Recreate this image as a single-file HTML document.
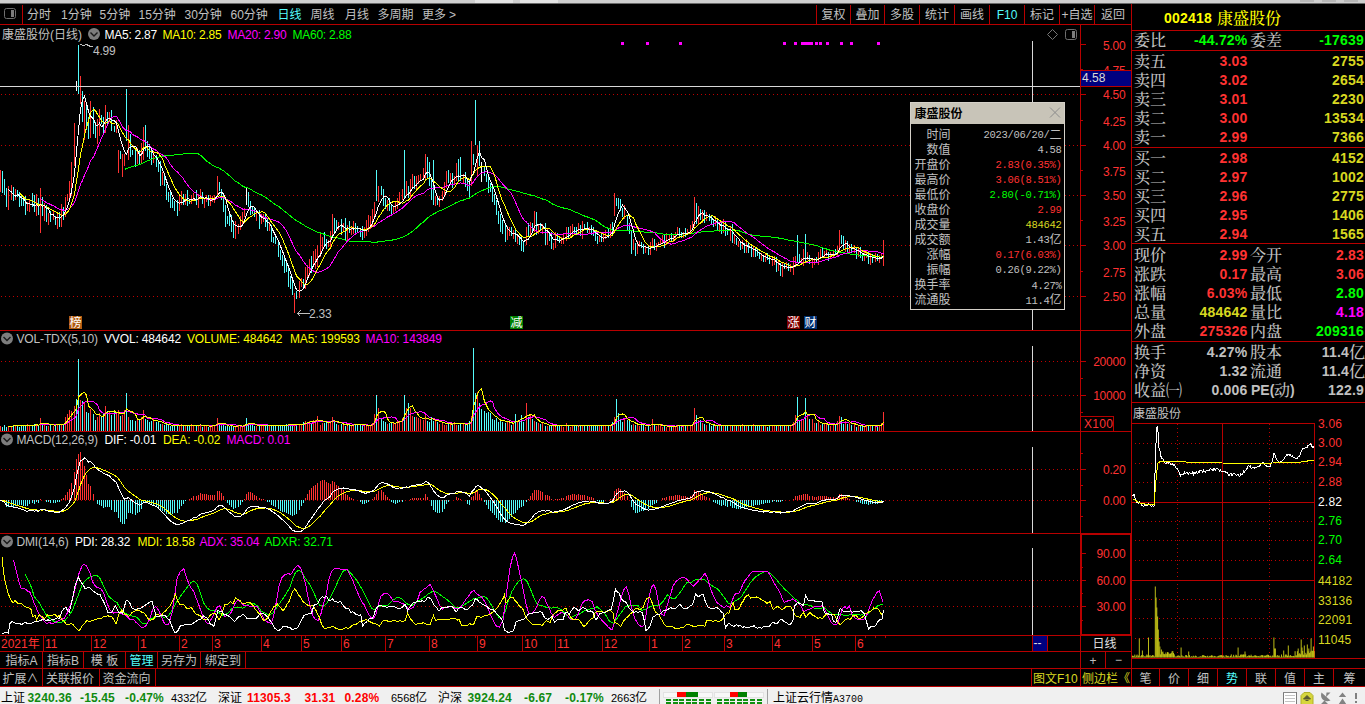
<!DOCTYPE html>
<html lang="zh-CN"><head><meta charset="utf-8"><title>康盛股份 002418 日线</title>
<style>
html,body{margin:0;padding:0;background:#000;}
body{width:1365px;height:704px;overflow:hidden;position:relative;font-family:"Liberation Sans","Noto Sans CJK SC",sans-serif;}
svg{display:block;position:absolute;left:0;top:0}
text{font-family:"Liberation Sans","Noto Sans CJK SC",sans-serif;white-space:pre}
</style></head><body>
<svg width="1365" height="704" viewBox="0 0 1365 704" shape-rendering="crispEdges">
<rect x="0" y="0" width="1365" height="704" fill="#000"/>
<rect x="0" y="0" width="1365" height="3" fill="#cfcfcf"/>
<rect x="0" y="3" width="1365" height="1" fill="#6a6a6a"/>
<rect x="475" y="0" width="38" height="3" fill="#e4e4e4"/>
<rect x="520" y="0" width="38" height="3" fill="#e4e4e4"/>
<rect x="1300" y="0" width="14" height="2" fill="#b8b8b8"/>
<rect x="1322" y="0" width="14" height="2" fill="#b8b8b8"/>
<rect x="1344" y="0" width="14" height="2" fill="#b8b8b8"/>
<line x1="0" y1="24.5" x2="1131" y2="24.5" stroke="#b80000" stroke-width="1"/>
<line x1="22.5" y1="5" x2="22.5" y2="24" stroke="#b80000" stroke-width="1"/>
<line x1="816.5" y1="5" x2="816.5" y2="24" stroke="#b80000" stroke-width="1"/>
<line x1="850.5" y1="5" x2="850.5" y2="24" stroke="#b80000" stroke-width="1"/>
<line x1="884.5" y1="5" x2="884.5" y2="24" stroke="#b80000" stroke-width="1"/>
<line x1="919.5" y1="5" x2="919.5" y2="24" stroke="#b80000" stroke-width="1"/>
<line x1="954.5" y1="5" x2="954.5" y2="24" stroke="#b80000" stroke-width="1"/>
<line x1="989.5" y1="5" x2="989.5" y2="24" stroke="#b80000" stroke-width="1"/>
<line x1="1024.5" y1="5" x2="1024.5" y2="24" stroke="#b80000" stroke-width="1"/>
<line x1="1059.5" y1="5" x2="1059.5" y2="24" stroke="#b80000" stroke-width="1"/>
<line x1="1094.5" y1="5" x2="1094.5" y2="24" stroke="#b80000" stroke-width="1"/>
<line x1="1131.5" y1="4" x2="1131.5" y2="687" stroke="#b80000" stroke-width="1"/>
<line x1="1080.5" y1="24" x2="1080.5" y2="668" stroke="#b80000" stroke-width="1"/>
<line x1="0" y1="330.5" x2="1131" y2="330.5" stroke="#b80000" stroke-width="1"/>
<line x1="0" y1="431.5" x2="1131" y2="431.5" stroke="#b80000" stroke-width="1"/>
<line x1="0" y1="533.5" x2="1131" y2="533.5" stroke="#b80000" stroke-width="1"/>
<line x1="0" y1="635.5" x2="1131" y2="635.5" stroke="#b80000" stroke-width="1"/>
<line x1="0" y1="651.5" x2="1131" y2="651.5" stroke="#b80000" stroke-width="1"/>
<line x1="0" y1="668.5" x2="1365" y2="668.5" stroke="#b80000" stroke-width="1"/>
<line x1="0" y1="686.5" x2="1365" y2="686.5" stroke="#b80000" stroke-width="1"/>
<line x1="1131" y1="30.5" x2="1365" y2="30.5" stroke="#b80000" stroke-width="1"/>
<line x1="1131" y1="50.5" x2="1365" y2="50.5" stroke="#b80000" stroke-width="1"/>
<line x1="1131" y1="147.5" x2="1365" y2="147.5" stroke="#b80000" stroke-width="1"/>
<line x1="1131" y1="243.5" x2="1365" y2="243.5" stroke="#b80000" stroke-width="1"/>
<line x1="1131" y1="341.5" x2="1365" y2="341.5" stroke="#b80000" stroke-width="1"/>
<line x1="1131" y1="402.5" x2="1365" y2="402.5" stroke="#b80000" stroke-width="1"/>
<line x1="1" y1="94.5" x2="1079" y2="94.5" stroke="#c00000" stroke-width="1" stroke-dasharray="1 3"/>
<line x1="1" y1="145.5" x2="1079" y2="145.5" stroke="#c00000" stroke-width="1" stroke-dasharray="1 3"/>
<line x1="1" y1="195.5" x2="1079" y2="195.5" stroke="#c00000" stroke-width="1" stroke-dasharray="1 3"/>
<line x1="1" y1="245.5" x2="1079" y2="245.5" stroke="#c00000" stroke-width="1" stroke-dasharray="1 3"/>
<line x1="1" y1="296.5" x2="1079" y2="296.5" stroke="#c00000" stroke-width="1" stroke-dasharray="1 3"/>
<line x1="1" y1="361.5" x2="1079" y2="361.5" stroke="#c00000" stroke-width="1" stroke-dasharray="1 3"/>
<line x1="1" y1="395.5" x2="1079" y2="395.5" stroke="#c00000" stroke-width="1" stroke-dasharray="1 3"/>
<line x1="1" y1="469.5" x2="1079" y2="469.5" stroke="#c00000" stroke-width="1" stroke-dasharray="1 3"/>
<line x1="1" y1="500.5" x2="1079" y2="500.5" stroke="#c00000" stroke-width="1" stroke-dasharray="1 3"/>
<line x1="1" y1="580.5" x2="1079" y2="580.5" stroke="#c00000" stroke-width="1" stroke-dasharray="1 3"/>
<line x1="1" y1="606.5" x2="1079" y2="606.5" stroke="#c00000" stroke-width="1" stroke-dasharray="1 3"/>
<path d="M0.5 170V192M8.5 186V210M11.5 185V200M15.5 189V200M27.5 202V211M29.5 199V212M36.5 194V216M40.5 188V233M44.5 203V221M48.5 213V225M53.5 211V220M57.5 213V229M61.5 204V227M65.5 197V217M67.5 194V201M69.5 181V199M71.5 162V196M74.5 123V166M80.5 76V104M84.5 101V140M90.5 101V138M97.5 119V144M99.5 109V136M105.5 105V133M109.5 112V122M116.5 120V133M118.5 150V173M122.5 154V177M124.5 154V166M128.5 125V160M137.5 148V164M141.5 143V164M143.5 127V160M153.5 152V163M162.5 172V185M179.5 194V211M181.5 191V205M185.5 194V205M191.5 195V204M193.5 193V200M198.5 194V208M200.5 189V197M204.5 199V208M206.5 195V202M210.5 195V206M212.5 196V202M214.5 195V203M217.5 176V196M235.5 221V239M238.5 224V234M240.5 216V230M242.5 212V225M244.5 208V217M256.5 211V221M261.5 214V224M263.5 214V222M269.5 222V231M294.5 293V313M299.5 281V298M301.5 278V287M305.5 267V289M307.5 265V277M309.5 259V276M313.5 251V267M315.5 249V269M317.5 245V267M320.5 234V257M322.5 237V250M328.5 240V247M330.5 231V249M332.5 214V236M338.5 222V230M343.5 223V232M347.5 225V241M351.5 226V235M353.5 221V234M364.5 227V238M366.5 220V236M368.5 215V232M370.5 216V229M372.5 209V227M374.5 202V218M378.5 186V202M387.5 200V211M393.5 207V213M395.5 202V211M397.5 198V209M399.5 192V204M402.5 189V200M406.5 181V195M410.5 179V199M412.5 174V187M416.5 176V190M418.5 175V184M420.5 174V181M423.5 168V179M425.5 154V181M435.5 196V206M439.5 196V207M442.5 191V201M444.5 182V196M446.5 171V188M450.5 173V183M454.5 176V185M456.5 163V181M463.5 174V183M471.5 141V186M477.5 145V176M507.5 226V240M509.5 227V236M513.5 230V239M517.5 234V244M526.5 227V245M530.5 222V237M534.5 211V232M538.5 224V234M542.5 224V234M547.5 229V245M553.5 243V250M555.5 232V248M561.5 237V244M563.5 233V244M566.5 227V241M570.5 226V237M572.5 224V236M578.5 223V235M582.5 221V239M589.5 227V234M599.5 236V242M603.5 233V242M605.5 230V239M610.5 224V238M614.5 193V216M624.5 205V219M633.5 239V250M637.5 241V254M639.5 241V247M645.5 246V253M650.5 242V255M652.5 238V247M656.5 243V251M658.5 242V247M660.5 238V245M662.5 235V243M666.5 233V245M669.5 234V242M673.5 234V242M675.5 232V240M677.5 227V235M683.5 232V238M687.5 229V234M690.5 225V234M692.5 221V229M694.5 197V226M698.5 206V225M702.5 210V223M706.5 212V221M715.5 216V226M719.5 224V232M723.5 219V233M730.5 226V241M734.5 235V244M738.5 241V247M742.5 240V249M746.5 239V253M753.5 246V257M761.5 253V261M765.5 254V262M772.5 257V266M774.5 256V265M778.5 260V271M782.5 262V277M786.5 262V269M790.5 264V272M793.5 257V275M795.5 256V266M801.5 258V264M803.5 249V266M807.5 252V260M812.5 259V268M814.5 258V265M818.5 252V265M820.5 249V258M824.5 251V257M826.5 249V256M830.5 252V259M833.5 250V257M837.5 246V256M839.5 230V251M845.5 240V252M849.5 244V253M854.5 245V253M858.5 248V257M864.5 252V261M866.5 250V258M870.5 253V265M875.5 253V262M879.5 255V263M881.5 254V259M883.5 240V266" stroke="#ff3232" fill="none"/>
<path d="M2.5 171V193M4.5 179V195M6.5 188V207M13.5 187V201M17.5 190V197M19.5 192V207M21.5 195V206M23.5 197V206M25.5 196V215M32.5 193V207M34.5 195V212M38.5 198V215M42.5 197V216M46.5 205V222M50.5 211V222M55.5 216V225M59.5 212V227M63.5 207V220M78.5 45V94M82.5 91V122M86.5 102V130M88.5 117V139M93.5 107V134M95.5 122V138M101.5 115V124M103.5 117V134M107.5 112V124M111.5 110V131M114.5 126V132M120.5 151V159M126.5 89V141M130.5 134V157M132.5 150V155M135.5 150V167M139.5 150V164M145.5 125V151M147.5 141V157M149.5 144V159M151.5 150V165M156.5 155V167M158.5 162V172M160.5 161V186M164.5 174V186M166.5 184V200M168.5 192V202M170.5 191V208M172.5 198V208M174.5 201V211M177.5 200V216M183.5 194V205M187.5 190V206M189.5 199V204M196.5 190V205M202.5 192V204M208.5 195V206M219.5 182V191M221.5 189V200M223.5 194V212M225.5 205V227M227.5 216V224M229.5 211V226M231.5 215V232M233.5 221V238M248.5 192V207M250.5 201V215M252.5 207V214M254.5 208V217M259.5 210V229M265.5 213V227M267.5 219V231M271.5 225V242M273.5 237V243M275.5 236V244M278.5 240V257M280.5 250V260M282.5 255V266M284.5 255V273M286.5 262V272M288.5 267V287M290.5 276V289M292.5 280V295M296.5 291V299M303.5 279V287M311.5 256V273M324.5 232V245M326.5 239V249M334.5 218V232M336.5 220V231M341.5 219V235M345.5 218V241M349.5 221V233M355.5 223V233M357.5 226V232M360.5 229V237M362.5 226V240M376.5 170V201M381.5 186V195M383.5 189V206M385.5 198V209M389.5 198V211M391.5 205V214M404.5 150V198M408.5 186V198M414.5 176V189M427.5 157V178M429.5 162V186M431.5 177V200M433.5 160V205M437.5 198V205M448.5 170V183M452.5 173V188M458.5 159V181M460.5 157V181M465.5 172V187M467.5 180V191M469.5 180V197M473.5 154V165M475.5 100V145M479.5 141V166M484.5 167V176M486.5 174V182M488.5 176V193M490.5 183V192M492.5 186V202M494.5 194V205M496.5 200V215M498.5 211V224M500.5 214V232M502.5 220V234M505.5 225V242M511.5 227V236M515.5 229V242M519.5 236V245M521.5 235V251M523.5 241V252M528.5 223V236M532.5 223V232M536.5 212V235M540.5 223V230M545.5 223V245M549.5 232V241M551.5 232V249M557.5 233V241M559.5 236V243M568.5 227V238M574.5 227V234M576.5 227V235M580.5 225V236M584.5 224V230M587.5 222V233M591.5 225V235M593.5 227V236M595.5 231V241M597.5 236V244M601.5 234V242M608.5 229V238M612.5 222V236M616.5 198V206M618.5 198V209M620.5 199V211M622.5 208V217M627.5 215V230M629.5 223V234M631.5 231V254M635.5 243V256M641.5 242V248M643.5 244V254M648.5 245V255M654.5 239V250M664.5 235V248M671.5 233V241M679.5 228V238M681.5 232V238M685.5 228V237M696.5 203V224M700.5 209V220M704.5 210V223M709.5 214V221M711.5 215V224M713.5 220V227M717.5 218V230M721.5 221V234M725.5 222V236M727.5 228V235M732.5 224V243M736.5 238V245M740.5 241V250M744.5 243V253M748.5 242V253M751.5 244V257M755.5 248V257M757.5 249V256M759.5 252V259M763.5 255V262M767.5 253V260M769.5 257V264M776.5 257V272M780.5 263V276M784.5 263V269M788.5 263V271M797.5 235V263M799.5 254V263M805.5 234V261M809.5 255V264M816.5 257V262M822.5 248V258M828.5 252V261M835.5 249V255M841.5 235V244M843.5 236V249M847.5 241V252M851.5 244V253M856.5 248V259M860.5 247V258M862.5 253V261M868.5 252V264M872.5 254V263M877.5 254V261" stroke="#54fcfc" fill="none"/>
<path d="M76.5 81V91M246.5 188V205M481.5 162V182" stroke="#fff" fill="none"/>
<polyline fill="none" stroke="#00ff00" stroke-width="1" points="124.5,169.3 126.5,168.7 128.5,167.7 130.5,167.1 132.5,166.3 135.5,165.8 137.5,165.1 139.5,164.4 141.5,163.7 143.5,162.6 145.5,161.7 147.5,160.9 149.5,160.1 151.5,159.2 153.5,158.4 156.5,157.8 158.5,157.2 160.5,156.7 162.5,156.3 164.5,155.8 166.5,155.9 168.5,155.6 170.5,155.5 172.5,155.2 174.5,155.0 177.5,154.9 179.5,154.6 181.5,154.2 183.5,153.9 185.5,153.5 187.5,153.4 189.5,153.3 191.5,153.2 193.5,153.2 196.5,153.5 198.5,154.0 200.5,155.2 202.5,157.1 204.5,158.9 206.5,160.9 208.5,162.3 210.5,163.9 212.5,165.1 214.5,166.2 217.5,167.5 219.5,168.4 221.5,169.5 223.5,170.8 225.5,172.5 227.5,174.1 229.5,175.7 231.5,177.6 233.5,179.5 235.5,181.4 238.5,183.0 240.5,184.5 242.5,186.1 244.5,187.0 246.5,187.6 248.5,188.3 250.5,189.2 252.5,190.4 254.5,191.9 256.5,192.9 259.5,194.1 261.5,195.0 263.5,196.1 265.5,197.2 267.5,198.6 269.5,200.2 271.5,201.7 273.5,203.2 275.5,204.6 278.5,206.2 280.5,207.9 282.5,209.5 284.5,211.2 286.5,212.7 288.5,214.4 290.5,216.0 292.5,217.7 294.5,219.3 296.5,220.9 299.5,222.3 301.5,223.6 303.5,224.9 305.5,226.1 307.5,227.3 309.5,228.3 311.5,229.5 313.5,230.4 315.5,231.4 317.5,232.2 320.5,233.0 322.5,233.6 324.5,234.4 326.5,235.3 328.5,235.9 330.5,236.6 332.5,236.9 334.5,237.3 336.5,237.7 338.5,238.1 341.5,238.7 343.5,239.5 345.5,240.2 347.5,240.7 349.5,241.1 351.5,241.3 353.5,241.4 355.5,241.5 357.5,241.6 360.5,241.5 362.5,241.6 364.5,241.7 366.5,241.8 368.5,241.9 370.5,242.0 372.5,242.3 374.5,242.4 376.5,242.2 378.5,241.8 381.5,241.4 383.5,241.2 385.5,240.9 387.5,240.6 389.5,240.4 391.5,240.2 393.5,239.8 395.5,239.4 397.5,238.8 399.5,238.1 402.5,237.3 404.5,236.3 406.5,235.2 408.5,234.1 410.5,232.7 412.5,231.2 414.5,229.6 416.5,227.9 418.5,226.0 420.5,224.0 423.5,222.0 425.5,219.8 427.5,218.1 429.5,216.4 431.5,215.1 433.5,214.0 435.5,213.0 437.5,211.9 439.5,210.9 442.5,209.9 444.5,208.9 446.5,207.7 448.5,206.7 450.5,205.6 452.5,204.6 454.5,203.6 456.5,202.4 458.5,201.7 460.5,200.9 463.5,200.0 465.5,199.3 467.5,198.6 469.5,198.0 471.5,196.5 473.5,195.5 475.5,194.0 477.5,192.6 479.5,191.6 481.5,190.7 484.5,189.7 486.5,188.9 488.5,188.1 490.5,187.4 492.5,186.9 494.5,186.6 496.5,186.4 498.5,186.5 500.5,186.8 502.5,187.3 505.5,188.1 507.5,188.8 509.5,189.3 511.5,189.8 513.5,190.3 515.5,190.9 517.5,191.3 519.5,191.8 521.5,192.5 523.5,193.3 526.5,193.8 528.5,194.4 530.5,195.0 532.5,195.6 534.5,195.9 536.5,196.7 538.5,197.4 540.5,198.2 542.5,199.0 545.5,199.9 547.5,200.9 549.5,201.9 551.5,203.4 553.5,204.5 555.5,205.4 557.5,206.1 559.5,206.7 561.5,207.4 563.5,208.0 566.5,208.5 568.5,209.2 570.5,209.9 572.5,210.8 574.5,211.6 576.5,212.6 578.5,213.3 580.5,214.2 582.5,215.2 584.5,216.0 587.5,217.0 589.5,217.8 591.5,218.6 593.5,219.4 595.5,220.2 597.5,221.8 599.5,223.0 601.5,224.7 603.5,226.1 605.5,227.3 608.5,228.4 610.5,229.2 612.5,230.1 614.5,230.2 616.5,230.5 618.5,230.6 620.5,230.8 622.5,230.8 624.5,230.7 627.5,230.6 629.5,230.7 631.5,230.8 633.5,231.0 635.5,231.4 637.5,231.5 639.5,231.7 641.5,231.8 643.5,232.0 645.5,232.2 648.5,232.3 650.5,232.2 652.5,232.5 654.5,232.7 656.5,233.0 658.5,233.3 660.5,233.8 662.5,233.9 664.5,234.2 666.5,234.4 669.5,234.5 671.5,234.5 673.5,234.5 675.5,234.5 677.5,234.2 679.5,234.1 681.5,234.1 683.5,234.0 685.5,233.8 687.5,233.7 690.5,233.5 692.5,233.4 694.5,232.8 696.5,232.6 698.5,232.3 700.5,232.1 702.5,231.8 704.5,231.7 706.5,231.4 709.5,231.3 711.5,231.2 713.5,231.1 715.5,230.9 717.5,230.9 719.5,230.7 721.5,230.6 723.5,230.4 725.5,230.3 727.5,230.2 730.5,230.0 732.5,230.1 734.5,230.2 736.5,230.5 738.5,230.6 740.5,231.5 742.5,232.2 744.5,232.9 746.5,233.5 748.5,234.1 751.5,234.8 753.5,235.3 755.5,235.6 757.5,235.7 759.5,236.0 761.5,236.1 763.5,236.3 765.5,236.5 767.5,236.7 769.5,236.9 772.5,237.2 774.5,237.3 776.5,237.7 778.5,238.0 780.5,238.4 782.5,238.8 784.5,239.1 786.5,239.5 788.5,240.1 790.5,240.5 793.5,240.9 795.5,241.3 797.5,241.7 799.5,242.1 801.5,242.5 803.5,242.9 805.5,243.3 807.5,243.7 809.5,244.2 812.5,244.6 814.5,245.1 816.5,245.7 818.5,246.2 820.5,247.1 822.5,247.7 824.5,248.4 826.5,249.0 828.5,249.7 830.5,250.3 833.5,250.9 835.5,251.5 837.5,252.0 839.5,252.1 841.5,252.5 843.5,252.8 845.5,253.2 847.5,253.5 849.5,253.9 851.5,254.2 854.5,254.4 856.5,254.9 858.5,255.1 860.5,255.4 862.5,255.6 864.5,255.8 866.5,255.9 868.5,256.2 870.5,256.3 872.5,256.6 875.5,256.7 877.5,256.8 879.5,257.0 881.5,257.0 883.5,256.9"/>
<polyline fill="none" stroke="#ff00ff" stroke-width="1" points="40.5,198.4 42.5,200.2 44.5,201.2 46.5,202.8 48.5,203.3 50.5,204.6 53.5,205.9 55.5,207.0 57.5,208.1 59.5,209.3 61.5,209.8 63.5,210.2 65.5,210.0 67.5,209.4 69.5,208.4 71.5,206.6 74.5,202.7 76.5,196.4 78.5,190.9 80.5,184.2 82.5,180.5 84.5,175.1 86.5,170.9 88.5,166.5 90.5,161.0 93.5,156.7 95.5,152.5 97.5,147.8 99.5,143.0 101.5,138.0 103.5,133.9 105.5,129.1 107.5,124.9 109.5,120.8 111.5,117.9 114.5,116.3 116.5,116.3 118.5,119.8 120.5,123.1 122.5,127.1 124.5,129.1 126.5,130.8 128.5,131.0 130.5,132.0 132.5,134.5 135.5,136.0 137.5,136.9 139.5,138.5 141.5,139.9 143.5,140.4 145.5,141.5 147.5,143.3 149.5,145.3 151.5,147.5 153.5,149.0 156.5,150.6 158.5,152.7 160.5,153.9 162.5,155.0 164.5,156.2 166.5,158.0 168.5,160.9 170.5,164.5 172.5,167.1 174.5,169.6 177.5,172.0 179.5,174.3 181.5,176.3 183.5,178.9 185.5,182.2 187.5,184.9 189.5,187.5 191.5,189.5 193.5,191.4 196.5,193.6 198.5,195.2 200.5,196.5 202.5,197.6 204.5,198.6 206.5,199.3 208.5,199.7 210.5,199.9 212.5,199.8 214.5,199.6 217.5,198.3 219.5,197.2 221.5,197.2 223.5,197.7 225.5,198.5 227.5,199.7 229.5,200.8 231.5,201.9 233.5,203.7 235.5,205.2 238.5,206.4 240.5,207.9 242.5,209.0 244.5,209.5 246.5,209.3 248.5,209.5 250.5,209.8 252.5,210.4 254.5,211.3 256.5,212.1 259.5,214.3 261.5,215.9 263.5,216.9 265.5,217.7 267.5,218.3 269.5,218.7 271.5,219.5 273.5,220.2 275.5,220.7 278.5,222.0 280.5,223.6 282.5,225.5 284.5,228.0 286.5,231.0 288.5,235.1 290.5,239.4 292.5,243.6 294.5,247.7 296.5,251.7 299.5,255.2 301.5,258.2 303.5,261.5 305.5,264.2 307.5,266.5 309.5,268.1 311.5,270.0 313.5,271.0 315.5,271.9 317.5,272.2 320.5,271.7 322.5,270.8 324.5,269.8 326.5,268.7 328.5,267.3 330.5,265.2 332.5,261.7 334.5,258.3 336.5,255.1 338.5,251.5 341.5,248.7 343.5,245.8 345.5,243.3 347.5,241.0 349.5,239.1 351.5,237.4 353.5,235.5 355.5,233.9 357.5,232.5 360.5,231.7 362.5,231.2 364.5,230.7 366.5,230.0 368.5,228.8 370.5,227.7 372.5,226.6 374.5,226.1 376.5,224.7 378.5,222.7 381.5,221.1 383.5,219.6 385.5,218.6 387.5,217.0 389.5,216.0 391.5,215.0 393.5,213.9 395.5,212.8 397.5,211.4 399.5,209.9 402.5,208.1 404.5,206.1 406.5,204.0 408.5,202.4 410.5,200.5 412.5,198.6 414.5,197.0 416.5,195.8 418.5,194.9 420.5,194.2 423.5,193.4 425.5,191.2 427.5,189.8 429.5,188.8 431.5,188.5 433.5,188.1 435.5,187.6 437.5,187.5 439.5,187.4 442.5,187.3 444.5,186.8 446.5,185.8 448.5,185.4 450.5,184.5 452.5,184.5 454.5,184.4 456.5,183.4 458.5,183.2 460.5,183.0 463.5,183.1 465.5,183.5 467.5,185.1 469.5,185.7 471.5,183.8 473.5,181.9 475.5,178.9 477.5,176.3 479.5,174.4 481.5,173.1 484.5,172.1 486.5,171.8 488.5,172.4 490.5,172.9 492.5,173.8 494.5,174.7 496.5,176.3 498.5,178.9 500.5,181.4 502.5,183.9 505.5,187.0 507.5,189.4 509.5,191.5 511.5,193.8 513.5,198.3 515.5,202.2 517.5,206.9 519.5,211.6 521.5,215.7 523.5,219.4 526.5,222.1 528.5,224.8 530.5,226.7 532.5,228.5 534.5,229.5 536.5,231.0 538.5,231.6 540.5,232.2 542.5,232.4 545.5,232.9 547.5,232.6 549.5,232.8 551.5,233.6 553.5,234.1 555.5,234.2 557.5,234.1 559.5,234.3 561.5,234.3 563.5,233.9 566.5,233.2 568.5,233.3 570.5,233.2 572.5,233.3 574.5,233.5 576.5,234.4 578.5,234.3 580.5,234.7 582.5,234.5 584.5,234.4 587.5,234.1 589.5,233.9 591.5,233.7 593.5,233.0 595.5,232.7 597.5,232.8 599.5,232.8 601.5,232.7 603.5,232.6 605.5,232.4 608.5,232.6 610.5,232.3 612.5,232.3 614.5,230.7 616.5,229.4 618.5,228.0 620.5,227.2 622.5,226.1 624.5,225.4 627.5,225.1 629.5,225.0 631.5,226.0 633.5,226.6 635.5,227.5 637.5,227.9 639.5,228.1 641.5,228.5 643.5,229.1 645.5,229.6 648.5,230.5 650.5,231.0 652.5,231.8 654.5,232.6 656.5,235.0 658.5,237.0 660.5,238.8 662.5,240.3 664.5,241.9 666.5,243.2 669.5,243.8 671.5,244.2 673.5,243.7 675.5,243.2 677.5,242.2 679.5,241.7 681.5,241.3 683.5,240.6 685.5,239.7 687.5,238.9 690.5,237.6 692.5,236.6 694.5,234.5 696.5,233.0 698.5,231.3 700.5,230.0 702.5,228.6 704.5,227.6 706.5,226.2 709.5,225.3 711.5,224.6 713.5,223.9 715.5,223.1 717.5,222.8 719.5,222.5 721.5,222.3 723.5,221.7 725.5,221.8 727.5,221.8 730.5,221.6 732.5,222.3 734.5,223.0 736.5,225.2 738.5,226.4 740.5,228.1 742.5,229.5 744.5,231.2 746.5,232.6 748.5,234.2 751.5,235.9 753.5,237.3 755.5,238.7 757.5,240.4 759.5,241.9 761.5,243.5 763.5,244.9 765.5,246.5 767.5,247.9 769.5,249.3 772.5,251.0 774.5,252.0 776.5,253.4 778.5,254.5 780.5,255.9 782.5,256.8 784.5,258.0 786.5,258.8 788.5,260.1 790.5,261.1 793.5,261.6 795.5,262.0 797.5,262.4 799.5,262.8 801.5,262.8 803.5,262.7 805.5,262.7 807.5,262.7 809.5,262.9 812.5,262.8 814.5,262.8 816.5,262.8 818.5,262.1 820.5,261.6 822.5,260.8 824.5,260.3 826.5,259.6 828.5,259.1 830.5,258.3 833.5,257.5 835.5,257.1 837.5,256.6 839.5,255.3 841.5,254.3 843.5,253.8 845.5,253.3 847.5,252.9 849.5,252.5 851.5,251.8 854.5,251.2 856.5,251.0 858.5,250.5 860.5,250.5 862.5,250.8 864.5,250.7 866.5,250.7 868.5,251.2 870.5,251.1 872.5,251.3 875.5,251.6 877.5,251.9 879.5,252.3 881.5,253.4 883.5,253.7"/>
<polyline fill="none" stroke="#ffff00" stroke-width="1" points="19.5,192.6 21.5,195.0 23.5,196.9 25.5,199.0 27.5,199.1 29.5,199.9 32.5,201.1 34.5,202.3 36.5,203.2 38.5,205.0 40.5,204.2 42.5,205.3 44.5,205.6 46.5,206.7 48.5,207.5 50.5,209.3 53.5,210.7 55.5,211.7 57.5,213.1 59.5,213.6 61.5,215.3 63.5,215.1 65.5,214.4 67.5,212.1 69.5,209.4 71.5,203.9 74.5,194.6 76.5,181.1 78.5,168.7 80.5,154.7 82.5,145.7 84.5,135.0 86.5,127.4 88.5,120.9 90.5,112.7 93.5,109.4 95.5,110.5 97.5,114.6 99.5,117.3 101.5,121.3 103.5,122.1 105.5,123.1 107.5,122.3 109.5,120.7 111.5,123.1 114.5,123.2 116.5,122.1 118.5,125.0 120.5,128.9 122.5,132.8 124.5,136.1 126.5,138.5 128.5,139.7 130.5,143.3 132.5,146.0 135.5,148.9 137.5,151.7 139.5,151.9 141.5,150.9 143.5,147.9 145.5,146.8 147.5,148.1 149.5,150.9 151.5,151.7 153.5,152.0 156.5,152.2 158.5,153.7 160.5,155.9 162.5,159.0 164.5,164.5 166.5,169.2 168.5,173.7 170.5,178.2 172.5,182.5 174.5,187.2 177.5,191.8 179.5,194.9 181.5,196.6 183.5,198.9 185.5,199.9 187.5,200.6 189.5,201.2 191.5,200.9 193.5,200.2 196.5,200.0 198.5,198.6 200.5,198.0 202.5,198.6 204.5,198.4 206.5,198.7 208.5,198.8 210.5,198.6 212.5,198.7 214.5,198.9 217.5,196.5 219.5,195.9 221.5,196.3 223.5,196.8 225.5,198.7 227.5,200.8 229.5,202.9 231.5,205.3 233.5,208.7 235.5,211.6 238.5,216.3 240.5,219.9 242.5,221.7 244.5,222.1 246.5,219.9 248.5,218.1 250.5,216.8 252.5,215.5 254.5,213.8 256.5,212.6 259.5,212.3 261.5,211.9 263.5,212.1 265.5,213.3 267.5,216.6 269.5,219.2 271.5,222.1 273.5,224.8 275.5,227.6 278.5,231.5 280.5,234.9 282.5,239.1 284.5,243.9 286.5,248.7 288.5,253.7 290.5,259.6 292.5,265.1 294.5,270.5 296.5,275.8 299.5,279.0 301.5,281.6 303.5,283.8 305.5,284.5 307.5,284.3 309.5,282.5 311.5,280.3 313.5,277.0 315.5,273.3 317.5,268.6 320.5,264.4 322.5,260.1 324.5,255.7 326.5,253.0 328.5,250.2 330.5,248.0 332.5,243.1 334.5,239.7 336.5,236.8 338.5,234.4 341.5,233.0 343.5,231.6 345.5,230.9 347.5,229.0 349.5,227.9 351.5,226.9 353.5,227.9 355.5,228.2 357.5,228.2 360.5,229.0 362.5,229.4 364.5,229.8 366.5,229.1 368.5,228.6 370.5,227.5 372.5,226.3 374.5,224.3 376.5,221.3 378.5,217.2 381.5,213.2 383.5,209.8 385.5,207.3 387.5,204.9 389.5,203.4 391.5,202.4 393.5,201.6 395.5,201.3 397.5,201.5 399.5,202.5 402.5,203.1 404.5,202.4 406.5,200.8 408.5,200.0 410.5,197.7 412.5,194.8 414.5,192.4 416.5,190.2 418.5,188.2 420.5,186.0 423.5,183.7 425.5,179.9 427.5,178.8 429.5,177.7 431.5,179.2 433.5,181.3 435.5,182.8 437.5,184.7 439.5,186.7 442.5,188.6 444.5,189.8 446.5,191.8 448.5,192.0 450.5,191.4 452.5,189.7 454.5,187.6 456.5,184.1 458.5,181.6 460.5,179.4 463.5,177.5 465.5,177.2 467.5,178.5 469.5,179.5 471.5,176.2 473.5,174.1 475.5,170.3 477.5,168.6 479.5,167.3 481.5,166.7 484.5,166.6 486.5,166.4 488.5,166.3 490.5,166.3 492.5,171.4 494.5,175.2 496.5,182.3 498.5,189.3 500.5,195.4 502.5,201.0 505.5,207.4 507.5,212.5 509.5,216.7 511.5,221.3 513.5,225.1 515.5,229.2 517.5,231.6 519.5,233.8 521.5,235.9 523.5,237.7 526.5,236.8 528.5,237.0 530.5,236.6 532.5,235.8 534.5,233.9 536.5,232.7 538.5,231.6 540.5,230.5 542.5,228.8 545.5,228.1 547.5,228.4 549.5,228.6 551.5,230.6 553.5,232.3 555.5,234.6 557.5,235.6 559.5,237.1 561.5,238.1 563.5,239.0 566.5,238.3 568.5,238.3 570.5,237.9 572.5,236.1 574.5,234.7 576.5,234.3 578.5,233.0 580.5,232.3 582.5,230.9 584.5,229.9 587.5,230.0 589.5,229.5 591.5,229.5 593.5,229.9 595.5,230.7 597.5,231.3 599.5,232.5 601.5,233.1 603.5,234.3 605.5,234.9 608.5,235.3 610.5,235.0 612.5,235.2 614.5,231.5 616.5,228.1 618.5,224.7 620.5,221.8 622.5,219.1 624.5,216.4 627.5,215.4 629.5,214.8 631.5,216.9 633.5,218.0 635.5,223.5 637.5,227.6 639.5,231.4 641.5,235.1 643.5,239.0 645.5,242.8 648.5,245.7 650.5,247.1 652.5,246.6 654.5,247.1 656.5,246.5 658.5,246.4 660.5,246.2 662.5,245.4 664.5,244.7 666.5,243.6 669.5,241.9 671.5,241.4 673.5,240.8 675.5,239.2 677.5,237.9 679.5,237.0 681.5,236.4 683.5,235.8 685.5,234.8 687.5,234.1 690.5,233.4 692.5,231.8 694.5,228.1 696.5,226.7 698.5,224.7 700.5,223.0 702.5,220.8 704.5,219.4 706.5,217.7 709.5,216.4 711.5,215.9 713.5,216.1 715.5,218.1 717.5,219.0 719.5,220.3 721.5,221.7 723.5,222.7 725.5,224.1 727.5,225.9 730.5,226.8 732.5,228.6 734.5,230.0 736.5,232.3 738.5,233.8 740.5,235.9 742.5,237.2 744.5,239.7 746.5,241.0 748.5,242.5 751.5,245.0 753.5,246.1 755.5,247.5 757.5,248.5 759.5,250.0 761.5,251.1 763.5,252.6 765.5,253.3 767.5,254.7 769.5,256.1 772.5,257.0 774.5,257.9 776.5,259.4 778.5,260.4 780.5,261.7 782.5,262.6 784.5,263.3 786.5,264.3 788.5,265.4 790.5,266.1 793.5,266.3 795.5,266.2 797.5,265.4 799.5,265.1 801.5,264.0 803.5,262.9 805.5,262.0 807.5,261.1 809.5,260.4 812.5,259.6 814.5,259.2 816.5,259.5 818.5,258.9 820.5,258.0 822.5,257.6 824.5,257.6 826.5,257.1 828.5,257.1 830.5,256.3 833.5,255.4 835.5,254.9 837.5,253.8 839.5,251.7 841.5,250.6 843.5,249.9 845.5,248.9 847.5,248.7 849.5,247.9 851.5,247.4 854.5,247.0 856.5,247.1 858.5,247.3 860.5,249.4 862.5,251.0 864.5,251.6 866.5,252.4 868.5,253.6 870.5,254.4 872.5,255.3 875.5,256.1 877.5,256.6 879.5,257.3 881.5,257.5 883.5,256.4"/>
<polyline fill="none" stroke="#fff" stroke-width="1" points="8.5,189.4 11.5,192.1 13.5,194.9 15.5,196.1 17.5,194.4 19.5,195.8 21.5,197.9 23.5,198.8 25.5,201.9 27.5,203.8 29.5,203.9 32.5,204.3 34.5,205.8 36.5,204.5 38.5,206.2 40.5,204.5 42.5,206.4 44.5,205.4 46.5,208.9 48.5,208.9 50.5,214.1 53.5,215.0 55.5,218.0 57.5,217.3 59.5,218.4 61.5,216.4 63.5,215.2 65.5,210.9 67.5,207.0 69.5,200.3 71.5,191.4 74.5,174.0 76.5,151.2 78.5,130.4 80.5,109.2 82.5,100.0 84.5,96.0 86.5,103.5 88.5,111.4 90.5,116.2 93.5,118.8 95.5,124.9 97.5,125.6 99.5,123.2 101.5,126.5 103.5,125.4 105.5,121.3 107.5,119.1 109.5,118.2 111.5,119.8 114.5,120.9 116.5,122.9 118.5,130.9 120.5,139.5 122.5,145.8 124.5,151.3 126.5,154.1 128.5,148.5 130.5,147.2 132.5,146.1 135.5,146.6 137.5,149.4 139.5,155.3 141.5,154.7 143.5,149.7 145.5,147.1 147.5,146.8 149.5,146.5 151.5,148.8 153.5,154.3 156.5,157.3 158.5,160.6 160.5,165.4 162.5,169.2 164.5,174.7 166.5,181.0 168.5,186.8 170.5,191.0 172.5,195.8 174.5,199.6 177.5,202.6 179.5,203.1 181.5,202.2 183.5,201.9 185.5,200.2 187.5,198.6 189.5,199.3 191.5,199.6 193.5,198.6 196.5,199.9 198.5,198.5 200.5,196.6 202.5,197.6 204.5,198.3 206.5,197.5 208.5,199.0 210.5,200.5 212.5,199.8 214.5,199.6 217.5,195.6 219.5,192.9 221.5,192.2 223.5,193.8 225.5,197.8 227.5,206.1 229.5,212.9 231.5,218.4 233.5,223.6 235.5,225.4 238.5,226.6 240.5,226.9 242.5,224.9 244.5,220.6 246.5,214.4 248.5,209.6 250.5,206.7 252.5,206.1 254.5,207.1 256.5,210.8 259.5,215.0 261.5,217.1 263.5,218.1 265.5,219.6 267.5,222.4 269.5,223.4 271.5,227.1 273.5,231.6 275.5,235.6 278.5,240.5 280.5,246.3 282.5,251.1 284.5,256.3 286.5,261.8 288.5,266.8 290.5,272.8 292.5,279.1 294.5,284.7 296.5,289.8 299.5,291.1 301.5,290.4 303.5,288.6 305.5,284.2 307.5,278.8 309.5,274.0 311.5,270.3 313.5,265.3 315.5,262.5 317.5,258.4 320.5,254.8 322.5,249.9 324.5,246.1 326.5,243.5 328.5,242.0 330.5,241.1 332.5,236.4 334.5,233.3 336.5,230.2 338.5,226.7 341.5,224.9 343.5,226.8 345.5,228.5 347.5,227.8 349.5,229.2 351.5,228.9 353.5,229.1 355.5,227.8 357.5,228.7 360.5,228.8 362.5,229.8 364.5,230.6 366.5,230.3 368.5,228.6 370.5,226.3 372.5,222.8 374.5,218.0 376.5,212.4 378.5,205.8 381.5,200.1 383.5,196.9 385.5,196.5 387.5,197.4 389.5,200.9 391.5,204.6 393.5,206.3 395.5,206.2 397.5,205.6 399.5,204.1 402.5,201.5 404.5,198.6 406.5,195.5 408.5,194.3 410.5,191.3 412.5,188.1 414.5,186.3 416.5,185.0 418.5,182.2 420.5,180.7 423.5,179.3 425.5,173.5 427.5,172.6 429.5,173.1 431.5,177.8 433.5,183.3 435.5,192.1 437.5,196.9 439.5,200.2 442.5,199.5 444.5,196.3 446.5,191.4 448.5,187.2 450.5,182.7 452.5,180.0 454.5,178.8 456.5,176.7 458.5,176.0 460.5,176.2 463.5,175.1 465.5,175.5 467.5,180.2 469.5,182.9 471.5,176.1 473.5,173.2 475.5,165.1 477.5,157.0 479.5,151.7 481.5,157.3 484.5,160.0 486.5,167.7 488.5,175.7 490.5,180.9 492.5,185.6 494.5,190.4 496.5,196.9 498.5,202.9 500.5,209.9 502.5,216.5 505.5,224.4 507.5,228.1 509.5,230.5 511.5,232.7 513.5,233.8 515.5,234.0 517.5,235.0 519.5,237.2 521.5,239.1 523.5,241.7 526.5,239.6 528.5,239.1 530.5,236.0 532.5,232.5 534.5,226.1 536.5,225.8 538.5,224.2 540.5,224.9 542.5,225.1 545.5,230.1 547.5,231.0 549.5,233.0 551.5,236.3 553.5,239.6 555.5,239.1 557.5,240.2 559.5,241.2 561.5,239.9 563.5,238.4 566.5,237.4 568.5,236.4 570.5,234.5 572.5,232.3 574.5,230.9 576.5,231.2 578.5,229.7 580.5,230.1 582.5,229.5 584.5,228.9 587.5,228.7 589.5,229.3 591.5,228.9 593.5,230.4 595.5,232.5 597.5,233.9 599.5,235.7 601.5,237.3 603.5,238.2 605.5,237.3 608.5,236.6 610.5,234.4 612.5,233.0 614.5,224.8 616.5,218.9 618.5,212.8 620.5,209.3 622.5,205.1 624.5,208.0 627.5,211.8 629.5,216.9 631.5,224.5 633.5,230.9 635.5,239.0 637.5,243.4 639.5,246.0 641.5,245.7 643.5,247.2 645.5,246.6 648.5,248.0 650.5,248.2 652.5,247.6 654.5,247.1 656.5,246.4 658.5,244.7 660.5,244.1 662.5,243.3 664.5,242.3 666.5,240.9 669.5,239.1 671.5,238.6 673.5,238.3 675.5,236.1 677.5,234.9 679.5,234.9 681.5,234.3 683.5,233.3 685.5,233.4 687.5,233.3 690.5,231.8 692.5,229.3 694.5,222.9 696.5,220.0 698.5,216.1 700.5,214.1 702.5,212.3 704.5,215.9 706.5,215.5 709.5,216.7 711.5,217.6 713.5,219.9 715.5,220.3 717.5,222.5 719.5,224.0 721.5,225.8 723.5,225.5 725.5,227.9 727.5,229.3 730.5,229.6 732.5,231.5 734.5,234.4 736.5,236.7 738.5,238.4 740.5,242.2 742.5,243.0 744.5,245.0 746.5,245.3 748.5,246.6 751.5,247.8 753.5,249.2 755.5,249.9 757.5,251.7 759.5,253.5 761.5,254.4 763.5,256.1 765.5,256.6 767.5,257.8 769.5,258.6 772.5,259.6 774.5,259.6 776.5,262.2 778.5,263.1 780.5,264.8 782.5,265.6 784.5,267.0 786.5,266.5 788.5,267.8 790.5,267.3 793.5,267.0 795.5,265.3 797.5,264.2 799.5,262.4 801.5,260.6 803.5,258.8 805.5,258.7 807.5,258.0 809.5,258.4 812.5,258.6 814.5,259.6 816.5,260.2 818.5,259.8 820.5,257.7 822.5,256.7 824.5,255.6 826.5,254.0 828.5,254.4 830.5,254.9 833.5,254.2 835.5,254.2 837.5,253.5 839.5,248.9 841.5,246.3 843.5,245.5 845.5,243.7 847.5,243.9 849.5,246.9 851.5,248.5 854.5,248.5 856.5,250.6 858.5,250.6 860.5,251.9 862.5,253.4 864.5,254.7 866.5,254.2 868.5,256.6 870.5,256.9 872.5,257.1 875.5,257.6 877.5,258.9 879.5,258.0 881.5,258.1 883.5,255.7"/>
<path d="M80.5 44.5 l3 1 l3 -1 l3 1.5 l3 1" stroke="#c0c0c0" fill="none"/>
<path d="M297.5 313.5 h12 M297.5 313.5 l3 -3 M297.5 313.5 l3 3" stroke="#c0c0c0" fill="none"/>
<path d="M0.5 426V431M8.5 426V431M11.5 426V431M15.5 425V431M27.5 424V431M29.5 426V431M36.5 424V431M40.5 418V431M44.5 424V431M48.5 426V431M53.5 426V431M57.5 425V431M61.5 425V431M65.5 417V431M67.5 414V431M69.5 410V431M71.5 411V431M74.5 406V431M80.5 400V431M84.5 403V431M90.5 409V431M97.5 417V431M99.5 413V431M105.5 406V431M109.5 412V431M116.5 414V431M118.5 410V431M122.5 415V431M124.5 410V431M128.5 417V431M137.5 418V431M141.5 417V431M143.5 410V431M153.5 419V431M162.5 424V431M179.5 425V431M181.5 424V431M185.5 426V431M191.5 424V431M193.5 426V431M198.5 425V431M200.5 425V431M204.5 426V431M206.5 426V431M210.5 425V431M212.5 426V431M214.5 425V431M217.5 418V431M235.5 426V431M238.5 426V431M240.5 426V431M242.5 427V431M244.5 425V431M256.5 426V431M261.5 424V431M263.5 425V431M269.5 426V431M294.5 424V431M299.5 425V431M301.5 424V431M305.5 421V431M307.5 423V431M309.5 421V431M313.5 420V431M315.5 420V431M317.5 416V431M320.5 425V431M322.5 423V431M328.5 422V431M330.5 422V431M332.5 417V431M338.5 425V431M343.5 425V431M347.5 425V431M351.5 426V431M353.5 424V431M364.5 425V431M366.5 425V431M368.5 426V431M370.5 425V431M372.5 423V431M374.5 414V431M378.5 408V431M387.5 424V431M393.5 423V431M395.5 423V431M397.5 420V431M399.5 421V431M402.5 418V431M406.5 408V431M410.5 408V431M412.5 416V431M416.5 417V431M418.5 418V431M420.5 419V431M423.5 420V431M425.5 414V431M435.5 421V431M439.5 424V431M442.5 422V431M444.5 425V431M446.5 425V431M450.5 424V431M454.5 422V431M456.5 425V431M463.5 423V431M471.5 416V431M477.5 392V431M507.5 422V431M509.5 423V431M513.5 424V431M517.5 421V431M526.5 403V431M530.5 415V431M534.5 421V431M538.5 423V431M542.5 423V431M547.5 426V431M553.5 425V431M555.5 426V431M561.5 426V431M563.5 427V431M566.5 423V431M570.5 427V431M572.5 426V431M578.5 426V431M582.5 426V431M589.5 426V431M599.5 426V431M603.5 426V431M605.5 425V431M610.5 425V431M614.5 417V431M624.5 419V431M633.5 424V431M637.5 425V431M639.5 426V431M645.5 427V431M650.5 427V431M652.5 419V431M656.5 426V431M658.5 425V431M660.5 425V431M662.5 427V431M666.5 427V431M669.5 426V431M673.5 426V431M675.5 426V431M677.5 425V431M683.5 426V431M687.5 425V431M690.5 425V431M692.5 424V431M694.5 408V431M698.5 420V431M702.5 423V431M706.5 425V431M715.5 426V431M719.5 426V431M723.5 426V431M730.5 426V431M734.5 426V431M738.5 426V431M742.5 424V431M746.5 426V431M753.5 424V431M761.5 426V431M765.5 426V431M772.5 425V431M774.5 425V431M778.5 425V431M782.5 425V431M786.5 425V431M790.5 425V431M793.5 422V431M795.5 415V431M801.5 420V431M803.5 419V431M807.5 415V431M812.5 419V431M814.5 423V431M818.5 421V431M820.5 425V431M824.5 424V431M826.5 424V431M830.5 426V431M833.5 425V431M837.5 421V431M839.5 416V431M845.5 421V431M849.5 423V431M854.5 424V431M858.5 426V431M864.5 426V431M866.5 426V431M870.5 426V431M875.5 426V431M879.5 425V431M881.5 423V431M883.5 412V431" stroke="#ff3232" fill="none"/>
<path d="M2.5 427V431M4.5 425V431M6.5 427V431M13.5 425V431M17.5 425V431M19.5 427V431M21.5 426V431M23.5 426V431M25.5 426V431M32.5 425V431M34.5 424V431M38.5 426V431M42.5 425V431M46.5 426V431M50.5 424V431M55.5 425V431M59.5 425V431M63.5 424V431M76.5 399V431M78.5 359V431M82.5 401V431M86.5 412V431M88.5 413V431M93.5 414V431M95.5 420V431M101.5 417V431M103.5 413V431M107.5 411V431M111.5 415V431M114.5 412V431M120.5 416V431M126.5 393V431M130.5 420V431M132.5 420V431M135.5 421V431M139.5 419V431M145.5 419V431M147.5 420V431M149.5 422V431M151.5 421V431M156.5 422V431M158.5 421V431M160.5 424V431M164.5 425V431M166.5 424V431M168.5 425V431M170.5 426V431M172.5 426V431M174.5 426V431M177.5 426V431M183.5 425V431M187.5 426V431M189.5 426V431M196.5 425V431M202.5 427V431M208.5 427V431M219.5 423V431M221.5 426V431M223.5 425V431M225.5 426V431M227.5 426V431M229.5 426V431M231.5 425V431M233.5 427V431M246.5 418V431M248.5 424V431M250.5 424V431M252.5 425V431M254.5 426V431M259.5 426V431M265.5 425V431M267.5 424V431M271.5 426V431M273.5 425V431M275.5 426V431M278.5 426V431M280.5 426V431M282.5 425V431M284.5 425V431M286.5 424V431M288.5 424V431M290.5 426V431M292.5 425V431M296.5 426V431M303.5 422V431M311.5 423V431M324.5 423V431M326.5 422V431M334.5 421V431M336.5 424V431M341.5 424V431M345.5 426V431M349.5 425V431M355.5 424V431M357.5 425V431M360.5 424V431M362.5 426V431M376.5 395V431M381.5 418V431M383.5 421V431M385.5 422V431M389.5 423V431M391.5 422V431M404.5 395V431M408.5 403V431M414.5 417V431M427.5 421V431M429.5 422V431M431.5 417V431M433.5 421V431M437.5 422V431M448.5 423V431M452.5 424V431M458.5 425V431M460.5 424V431M465.5 424V431M467.5 425V431M469.5 421V431M473.5 348V431M475.5 393V431M479.5 403V431M481.5 409V431M484.5 411V431M486.5 413V431M488.5 412V431M490.5 413V431M492.5 419V431M494.5 420V431M496.5 418V431M498.5 422V431M500.5 421V431M502.5 422V431M505.5 423V431M511.5 425V431M515.5 414V431M519.5 421V431M521.5 415V431M523.5 422V431M528.5 417V431M532.5 419V431M536.5 422V431M540.5 424V431M545.5 426V431M549.5 426V431M551.5 426V431M557.5 426V431M559.5 425V431M568.5 425V431M574.5 426V431M576.5 425V431M580.5 425V431M584.5 425V431M587.5 426V431M591.5 425V431M593.5 425V431M595.5 425V431M597.5 426V431M601.5 425V431M608.5 425V431M612.5 422V431M616.5 399V431M618.5 413V431M620.5 419V431M622.5 422V431M627.5 420V431M629.5 421V431M631.5 425V431M635.5 425V431M641.5 424V431M643.5 424V431M648.5 425V431M654.5 425V431M664.5 426V431M671.5 426V431M679.5 425V431M681.5 426V431M685.5 426V431M696.5 415V431M700.5 420V431M704.5 424V431M709.5 424V431M711.5 426V431M713.5 425V431M717.5 426V431M721.5 425V431M725.5 425V431M727.5 426V431M732.5 425V431M736.5 426V431M740.5 426V431M744.5 426V431M748.5 426V431M751.5 426V431M755.5 426V431M757.5 425V431M759.5 426V431M763.5 425V431M767.5 427V431M769.5 426V431M776.5 426V431M780.5 425V431M784.5 426V431M788.5 425V431M797.5 397V431M799.5 420V431M805.5 398V431M809.5 419V431M816.5 423V431M822.5 424V431M828.5 425V431M835.5 425V431M841.5 417V431M843.5 424V431M847.5 424V431M851.5 425V431M856.5 427V431M860.5 426V431M862.5 426V431M868.5 425V431M872.5 426V431M877.5 426V431" stroke="#54fcfc" fill="none"/>
<polyline fill="none" stroke="#ff00ff" stroke-width="1" points="19.5,425.8 21.5,425.8 23.5,425.7 25.5,425.8 27.5,425.5 29.5,425.6 32.5,425.4 34.5,425.4 36.5,425.3 38.5,425.4 40.5,424.5 42.5,424.5 44.5,424.3 46.5,424.4 48.5,424.5 50.5,424.2 53.5,424.3 55.5,424.3 57.5,424.4 59.5,424.3 61.5,424.9 63.5,424.8 65.5,424.0 67.5,422.8 69.5,421.3 71.5,420.0 74.5,418.1 76.5,415.5 78.5,408.9 80.5,406.5 82.5,404.1 84.5,402.1 86.5,401.6 88.5,401.5 90.5,401.5 93.5,401.8 95.5,403.1 97.5,404.9 99.5,410.3 101.5,412.0 103.5,413.2 105.5,413.5 107.5,413.4 109.5,413.2 111.5,413.8 114.5,413.5 116.5,413.0 118.5,412.3 120.5,412.6 122.5,412.4 124.5,412.1 126.5,410.8 128.5,411.4 130.5,412.3 132.5,412.8 135.5,413.7 137.5,414.0 139.5,414.9 141.5,415.0 143.5,414.5 145.5,415.4 147.5,418.1 149.5,418.6 151.5,418.7 153.5,418.6 156.5,418.7 158.5,419.1 160.5,419.6 162.5,420.3 164.5,421.9 166.5,422.4 168.5,422.8 170.5,423.2 172.5,423.7 174.5,424.4 177.5,424.8 179.5,425.2 181.5,425.2 183.5,425.3 185.5,425.3 187.5,425.5 189.5,425.6 191.5,425.5 193.5,425.4 196.5,425.3 198.5,425.2 200.5,425.1 202.5,425.4 204.5,425.5 206.5,425.6 208.5,425.7 210.5,425.5 212.5,425.7 214.5,425.6 217.5,425.0 219.5,424.8 221.5,425.0 223.5,424.8 225.5,424.8 227.5,424.8 229.5,424.8 231.5,424.8 233.5,424.9 235.5,424.9 238.5,425.7 240.5,426.0 242.5,426.0 244.5,426.0 246.5,425.2 248.5,424.9 250.5,424.8 252.5,424.7 254.5,424.6 256.5,424.6 259.5,424.6 261.5,424.5 263.5,424.4 265.5,424.4 267.5,425.0 269.5,425.2 271.5,425.3 273.5,425.4 275.5,425.3 278.5,425.4 280.5,425.5 282.5,425.5 284.5,425.4 286.5,425.3 288.5,425.3 290.5,425.3 292.5,425.2 294.5,425.0 296.5,425.0 299.5,424.8 301.5,424.6 303.5,424.3 305.5,424.0 307.5,423.8 309.5,423.5 311.5,423.2 313.5,422.8 315.5,422.4 317.5,421.4 320.5,421.4 322.5,421.4 324.5,421.4 326.5,421.5 328.5,421.4 330.5,421.5 332.5,421.0 334.5,421.1 336.5,421.5 338.5,422.5 341.5,422.3 343.5,422.5 345.5,422.8 347.5,423.2 349.5,423.5 351.5,423.8 353.5,424.5 355.5,424.8 357.5,424.8 360.5,424.7 362.5,425.0 364.5,425.0 366.5,424.9 368.5,425.1 370.5,425.1 372.5,424.8 374.5,423.7 376.5,420.8 378.5,419.1 381.5,418.6 383.5,418.0 385.5,417.7 387.5,417.6 389.5,417.3 391.5,417.0 393.5,417.1 395.5,418.0 397.5,420.5 399.5,421.8 402.5,421.7 404.5,419.2 406.5,417.7 408.5,415.6 410.5,414.1 412.5,413.4 414.5,412.8 416.5,412.2 418.5,412.1 420.5,411.9 423.5,412.1 425.5,414.0 427.5,415.4 429.5,417.3 431.5,418.2 433.5,418.7 435.5,419.1 437.5,419.6 439.5,420.2 442.5,420.4 444.5,420.9 446.5,422.0 448.5,422.2 450.5,422.5 452.5,423.1 454.5,423.2 456.5,423.5 458.5,423.8 460.5,423.8 463.5,423.9 465.5,423.8 467.5,423.9 469.5,423.6 471.5,422.8 473.5,415.2 475.5,412.3 477.5,409.1 479.5,406.9 481.5,405.3 484.5,404.1 486.5,403.0 488.5,401.7 490.5,401.0 492.5,401.3 494.5,408.5 496.5,411.1 498.5,414.1 500.5,415.9 502.5,417.2 505.5,418.4 507.5,419.3 509.5,420.3 511.5,421.5 513.5,421.9 515.5,421.3 517.5,421.5 519.5,421.4 521.5,420.8 523.5,420.9 526.5,418.9 528.5,418.4 530.5,417.6 532.5,417.0 534.5,416.8 536.5,417.6 538.5,417.8 540.5,418.1 542.5,418.9 545.5,419.3 547.5,421.6 549.5,422.6 551.5,423.7 553.5,424.3 555.5,424.8 557.5,425.1 559.5,425.4 561.5,425.6 563.5,425.9 566.5,425.6 568.5,425.5 570.5,425.6 572.5,425.6 574.5,425.7 576.5,425.6 578.5,425.6 580.5,425.6 582.5,425.7 584.5,425.6 587.5,425.9 589.5,426.0 591.5,425.9 593.5,425.7 595.5,425.7 597.5,425.7 599.5,425.7 601.5,425.7 603.5,425.6 605.5,425.6 608.5,425.5 610.5,425.4 612.5,425.1 614.5,424.3 616.5,421.7 618.5,420.5 620.5,419.7 622.5,419.3 624.5,418.7 627.5,418.2 629.5,417.7 631.5,417.7 633.5,417.9 635.5,418.7 637.5,421.3 639.5,422.5 641.5,423.0 643.5,423.3 645.5,424.0 648.5,424.6 650.5,425.2 652.5,424.6 654.5,424.7 656.5,424.8 658.5,424.8 660.5,424.8 662.5,425.0 664.5,425.2 666.5,425.2 669.5,425.3 671.5,425.2 673.5,425.9 675.5,426.1 677.5,425.9 679.5,425.9 681.5,426.1 683.5,426.0 685.5,425.9 687.5,425.8 690.5,425.7 692.5,425.4 694.5,423.6 696.5,422.5 698.5,422.0 700.5,421.5 702.5,421.2 704.5,421.0 706.5,421.0 709.5,420.8 711.5,420.9 713.5,421.1 715.5,422.9 717.5,423.9 719.5,424.5 721.5,425.1 723.5,425.3 725.5,425.4 727.5,425.5 730.5,425.7 732.5,425.7 734.5,425.7 736.5,425.7 738.5,425.8 740.5,425.8 742.5,425.7 744.5,425.7 746.5,425.9 748.5,425.9 751.5,425.9 753.5,425.7 755.5,425.8 757.5,425.7 759.5,425.6 761.5,425.5 763.5,425.6 765.5,425.6 767.5,425.6 769.5,425.5 772.5,425.5 774.5,425.6 776.5,425.6 778.5,425.6 780.5,425.6 782.5,425.4 784.5,425.6 786.5,425.5 788.5,425.3 790.5,425.3 793.5,424.9 795.5,423.9 797.5,421.0 799.5,420.5 801.5,420.0 803.5,419.5 805.5,416.7 807.5,415.7 809.5,415.1 812.5,414.5 814.5,414.6 816.5,415.3 818.5,417.7 820.5,418.3 822.5,418.6 824.5,419.0 826.5,421.7 828.5,422.7 830.5,423.3 833.5,423.9 835.5,424.1 837.5,423.9 839.5,423.4 841.5,422.6 843.5,422.6 845.5,422.2 847.5,422.2 849.5,422.0 851.5,422.0 854.5,421.9 856.5,422.1 858.5,422.6 860.5,423.6 862.5,424.6 864.5,424.8 866.5,425.3 868.5,425.5 870.5,425.8 872.5,425.8 875.5,426.0 877.5,426.0 879.5,425.9 881.5,425.5 883.5,424.1"/>
<polyline fill="none" stroke="#ffff00" stroke-width="1" points="8.5,426.1 11.5,426.2 13.5,425.9 15.5,425.8 17.5,425.5 19.5,425.5 21.5,425.4 23.5,425.5 25.5,425.8 27.5,425.6 29.5,425.6 32.5,425.5 34.5,425.2 36.5,424.8 38.5,425.2 40.5,423.5 42.5,423.5 44.5,423.5 46.5,423.9 48.5,423.8 50.5,424.9 53.5,425.0 55.5,425.1 57.5,424.9 59.5,424.7 61.5,424.9 63.5,424.5 65.5,422.9 67.5,420.8 69.5,417.9 71.5,415.0 74.5,411.6 76.5,408.2 78.5,397.1 80.5,395.2 82.5,393.2 84.5,392.6 86.5,395.1 88.5,406.0 90.5,407.7 93.5,410.4 95.5,413.7 97.5,414.7 99.5,414.7 101.5,416.3 103.5,416.1 105.5,413.3 107.5,412.1 109.5,411.8 111.5,411.3 114.5,411.0 116.5,412.7 118.5,412.5 120.5,413.5 122.5,413.5 124.5,413.2 126.5,408.9 128.5,410.3 130.5,411.1 132.5,412.0 135.5,414.2 137.5,419.1 139.5,419.6 141.5,418.9 143.5,417.0 145.5,416.5 147.5,417.1 149.5,417.6 151.5,418.4 153.5,420.3 156.5,420.8 158.5,421.1 160.5,421.7 162.5,422.2 164.5,423.4 166.5,423.9 168.5,424.6 170.5,424.8 172.5,425.3 174.5,425.4 177.5,425.8 179.5,425.9 181.5,425.6 183.5,425.2 185.5,425.2 187.5,425.2 189.5,425.4 191.5,425.4 193.5,425.6 196.5,425.4 198.5,425.3 200.5,424.9 202.5,425.4 204.5,425.5 206.5,425.7 208.5,426.0 210.5,426.1 212.5,426.0 214.5,425.8 217.5,424.2 219.5,423.5 221.5,423.8 223.5,423.7 225.5,423.8 227.5,425.5 229.5,426.1 231.5,425.8 233.5,426.1 235.5,426.1 238.5,426.0 240.5,425.8 242.5,426.1 244.5,425.9 246.5,424.3 248.5,423.9 250.5,423.7 252.5,423.3 254.5,423.4 256.5,425.0 259.5,425.3 261.5,425.3 263.5,425.5 265.5,425.3 267.5,425.0 269.5,425.0 271.5,425.2 273.5,425.3 275.5,425.3 278.5,425.8 280.5,425.9 282.5,425.7 284.5,425.6 286.5,425.3 288.5,424.8 290.5,424.6 292.5,424.6 294.5,424.4 296.5,424.7 299.5,424.9 301.5,424.6 303.5,424.1 305.5,423.5 307.5,422.9 309.5,422.1 311.5,421.9 313.5,421.5 315.5,421.3 317.5,419.8 320.5,420.7 322.5,420.8 324.5,421.4 326.5,421.7 328.5,422.9 330.5,422.3 332.5,421.1 334.5,420.8 336.5,421.3 338.5,422.0 341.5,422.4 343.5,424.0 345.5,424.9 347.5,425.0 349.5,424.9 351.5,425.2 353.5,425.1 355.5,424.8 357.5,424.7 360.5,424.6 362.5,424.7 364.5,424.9 366.5,425.1 368.5,425.4 370.5,425.6 372.5,424.9 374.5,422.6 376.5,416.5 378.5,412.9 381.5,411.5 383.5,411.1 385.5,412.8 387.5,418.6 389.5,421.7 391.5,422.5 393.5,423.0 395.5,423.2 397.5,422.4 399.5,421.9 402.5,420.9 404.5,415.3 406.5,412.2 408.5,408.8 410.5,406.2 412.5,405.9 414.5,410.4 416.5,412.2 418.5,415.3 420.5,417.6 423.5,418.4 425.5,417.7 427.5,418.6 429.5,419.3 431.5,418.8 433.5,419.1 435.5,420.5 437.5,420.6 439.5,421.1 442.5,422.1 444.5,422.8 446.5,423.5 448.5,423.8 450.5,423.8 452.5,424.2 454.5,423.6 456.5,423.5 458.5,423.8 460.5,423.8 463.5,423.6 465.5,424.1 467.5,424.2 469.5,423.5 471.5,421.7 473.5,406.8 475.5,400.5 477.5,393.9 479.5,390.3 481.5,388.9 484.5,401.5 486.5,405.5 488.5,409.5 490.5,411.7 492.5,413.7 494.5,415.6 496.5,416.7 498.5,418.6 500.5,420.1 502.5,420.6 505.5,421.1 507.5,421.9 509.5,422.0 511.5,422.8 513.5,423.2 515.5,421.5 517.5,421.2 519.5,420.8 521.5,418.8 523.5,418.5 526.5,416.3 528.5,415.5 530.5,414.5 532.5,415.2 534.5,415.0 536.5,418.8 538.5,420.0 540.5,421.7 542.5,422.6 545.5,423.5 547.5,424.4 549.5,425.1 551.5,425.6 553.5,425.9 555.5,426.0 557.5,425.9 559.5,425.7 561.5,425.6 563.5,425.9 566.5,425.3 568.5,425.1 570.5,425.5 572.5,425.6 574.5,425.5 576.5,425.9 578.5,426.1 580.5,425.8 582.5,425.8 584.5,425.7 587.5,425.9 589.5,425.9 591.5,425.9 593.5,425.7 595.5,425.6 597.5,425.5 599.5,425.5 601.5,425.5 603.5,425.6 605.5,425.6 608.5,425.5 610.5,425.3 612.5,424.7 614.5,423.0 616.5,417.8 618.5,415.4 620.5,414.2 622.5,414.0 624.5,414.4 627.5,418.5 629.5,420.0 631.5,421.3 633.5,421.8 635.5,423.0 637.5,424.0 639.5,424.9 641.5,424.8 643.5,424.9 645.5,425.1 648.5,425.2 650.5,425.4 652.5,424.4 654.5,424.5 656.5,424.5 658.5,424.5 660.5,424.1 662.5,425.7 664.5,425.9 666.5,426.0 669.5,426.1 671.5,426.3 673.5,426.2 675.5,426.2 677.5,425.9 679.5,425.7 681.5,425.8 683.5,425.8 685.5,425.7 687.5,425.7 690.5,425.6 692.5,425.1 694.5,421.4 696.5,419.4 698.5,418.4 700.5,417.4 702.5,417.3 704.5,420.5 706.5,422.5 709.5,423.2 711.5,424.5 713.5,424.8 715.5,425.2 717.5,425.3 719.5,425.8 721.5,425.7 723.5,425.9 725.5,425.6 727.5,425.7 730.5,425.6 732.5,425.6 734.5,425.5 736.5,425.8 738.5,425.9 740.5,426.0 742.5,425.8 744.5,425.8 746.5,426.0 748.5,425.9 751.5,425.7 753.5,425.7 755.5,425.8 757.5,425.4 759.5,425.3 761.5,425.3 763.5,425.4 765.5,425.4 767.5,425.8 769.5,425.8 772.5,425.7 774.5,425.8 776.5,425.9 778.5,425.5 780.5,425.4 782.5,425.2 784.5,425.3 786.5,425.1 788.5,425.2 790.5,425.2 793.5,424.7 795.5,422.6 797.5,416.9 799.5,415.8 801.5,414.9 803.5,414.3 805.5,410.9 807.5,414.5 809.5,414.4 812.5,414.1 814.5,414.8 816.5,419.8 818.5,420.9 820.5,422.1 822.5,423.1 824.5,423.3 826.5,423.6 828.5,424.4 830.5,424.5 833.5,424.7 835.5,425.0 837.5,424.2 839.5,422.5 841.5,420.7 843.5,420.4 845.5,419.5 847.5,420.1 849.5,421.5 851.5,423.2 854.5,423.4 856.5,424.6 858.5,425.1 860.5,425.7 862.5,425.9 864.5,426.3 866.5,426.0 868.5,425.9 870.5,425.8 872.5,425.7 875.5,425.7 877.5,425.9 879.5,425.9 881.5,425.2 883.5,422.5"/>
<path d="M40.5 499V500M61.5 499V500M63.5 498V500M65.5 495V500M67.5 492V500M69.5 489V500M71.5 483V500M74.5 472V500M76.5 459V500M78.5 454V500M80.5 452V500M82.5 460V500M84.5 466V500M86.5 475V500M88.5 484V500M90.5 486V500M93.5 494V500M189.5 499V500M191.5 498V500M193.5 496V500M196.5 496V500M198.5 495V500M200.5 493V500M202.5 494V500M204.5 494V500M206.5 494V500M208.5 495V500M210.5 495V500M212.5 495V500M214.5 495V500M217.5 491V500M219.5 491V500M221.5 493V500M223.5 496V500M244.5 499V500M246.5 494V500M248.5 492V500M250.5 492V500M252.5 493V500M254.5 495V500M256.5 496V500M259.5 498V500M261.5 499V500M263.5 499V500M305.5 498V500M307.5 494V500M309.5 490V500M311.5 488V500M313.5 486V500M315.5 485V500M317.5 483V500M320.5 481V500M322.5 480V500M324.5 480V500M326.5 482V500M328.5 483V500M330.5 484V500M332.5 481V500M334.5 482V500M336.5 485V500M338.5 486V500M341.5 489V500M343.5 490V500M345.5 494V500M347.5 495V500M349.5 497V500M351.5 498V500M353.5 499V500M355.5 500V500M372.5 499V500M374.5 497V500M376.5 494V500M378.5 491V500M381.5 490V500M383.5 492V500M385.5 495V500M387.5 497V500M389.5 499V500M410.5 499V500M412.5 498V500M414.5 498V500M416.5 498V500M418.5 498V500M420.5 498V500M423.5 498V500M425.5 494V500M427.5 497V500M456.5 497V500M458.5 498V500M460.5 499V500M463.5 500V500M471.5 497V500M473.5 496V500M475.5 492V500M477.5 491V500M479.5 494V500M481.5 498V500M528.5 499V500M530.5 496V500M532.5 493V500M534.5 490V500M536.5 490V500M538.5 490V500M540.5 491V500M542.5 492V500M545.5 495V500M547.5 495V500M549.5 496V500M551.5 499V500M555.5 499V500M557.5 499V500M559.5 499V500M561.5 498V500M563.5 498V500M566.5 496V500M568.5 495V500M570.5 495V500M572.5 494V500M574.5 494V500M576.5 495V500M578.5 494V500M580.5 495V500M582.5 495V500M584.5 495V500M587.5 496V500M589.5 497V500M591.5 497V500M593.5 498V500M610.5 499V500M612.5 499V500M614.5 491V500M616.5 489V500M618.5 488V500M620.5 489V500M622.5 491V500M624.5 493V500M627.5 496V500M660.5 500V500M662.5 498V500M664.5 498V500M666.5 497V500M669.5 496V500M671.5 496V500M673.5 496V500M675.5 495V500M677.5 495V500M679.5 495V500M681.5 496V500M683.5 496V500M685.5 496V500M687.5 497V500M690.5 496V500M692.5 495V500M694.5 490V500M696.5 491V500M698.5 491V500M700.5 493V500M702.5 494V500M704.5 496V500M706.5 497V500M709.5 498V500M793.5 499V500M795.5 496V500M797.5 496V500M799.5 495V500M801.5 495V500M803.5 494V500M805.5 494V500M807.5 494V500M809.5 496V500M812.5 496V500M814.5 497V500M816.5 497V500M818.5 496V500M820.5 496V500M822.5 496V500M824.5 496V500M826.5 496V500M828.5 497V500M830.5 497V500M833.5 497V500M835.5 498V500M837.5 497V500M839.5 494V500M841.5 494V500M843.5 496V500M845.5 496V500M847.5 498V500M849.5 499V500" stroke="#ff3232" fill="none"/>
<path d="M2.5 500V502M4.5 500V503M6.5 500V507M8.5 500V507M11.5 500V506M13.5 500V507M15.5 500V506M17.5 500V505M19.5 500V505M21.5 500V505M23.5 500V506M25.5 500V506M27.5 500V506M29.5 500V504M32.5 500V503M34.5 500V504M36.5 500V502M38.5 500V503M46.5 500V502M48.5 500V502M50.5 500V503M53.5 500V503M55.5 500V503M57.5 500V502M59.5 500V502M97.5 500V504M99.5 500V505M101.5 500V506M103.5 500V508M105.5 500V507M107.5 500V507M109.5 500V507M111.5 500V510M114.5 500V512M116.5 500V512M118.5 500V518M120.5 500V522M122.5 500V524M124.5 500V524M126.5 500V519M128.5 500V513M130.5 500V513M132.5 500V514M135.5 500V515M137.5 500V513M139.5 500V512M141.5 500V509M143.5 500V503M145.5 500V503M147.5 500V503M149.5 500V504M151.5 500V505M153.5 500V506M156.5 500V506M158.5 500V507M160.5 500V510M162.5 500V511M164.5 500V512M166.5 500V514M168.5 500V514M170.5 500V515M172.5 500V514M174.5 500V513M177.5 500V513M179.5 500V509M181.5 500V506M183.5 500V504M185.5 500V501M227.5 500V503M229.5 500V505M231.5 500V507M233.5 500V509M235.5 500V508M238.5 500V507M240.5 500V505M242.5 500V502M267.5 500V502M269.5 500V502M271.5 500V505M273.5 500V506M275.5 500V507M278.5 500V509M280.5 500V511M282.5 500V512M284.5 500V512M286.5 500V513M288.5 500V514M290.5 500V515M292.5 500V516M294.5 500V515M296.5 500V514M299.5 500V510M301.5 500V506M303.5 500V503M360.5 500V502M362.5 500V504M364.5 500V504M366.5 500V503M368.5 500V502M391.5 500V502M393.5 500V503M395.5 500V504M397.5 500V503M399.5 500V502M402.5 500V502M431.5 500V506M433.5 500V510M435.5 500V512M437.5 500V513M439.5 500V513M442.5 500V512M444.5 500V509M446.5 500V504M448.5 500V502M467.5 500V504M469.5 500V505M484.5 500V502M486.5 500V505M488.5 500V509M490.5 500V511M492.5 500V513M494.5 500V515M496.5 500V518M498.5 500V520M500.5 500V522M502.5 500V522M505.5 500V523M507.5 500V521M509.5 500V519M511.5 500V517M513.5 500V514M515.5 500V513M517.5 500V510M519.5 500V508M521.5 500V507M523.5 500V506M526.5 500V502M597.5 500V501M599.5 500V502M601.5 500V502M603.5 500V502M631.5 500V507M633.5 500V510M635.5 500V513M637.5 500V513M639.5 500V512M641.5 500V511M643.5 500V511M645.5 500V510M648.5 500V509M650.5 500V507M652.5 500V505M654.5 500V504M656.5 500V503M713.5 500V502M715.5 500V503M717.5 500V504M719.5 500V505M721.5 500V506M723.5 500V505M725.5 500V506M727.5 500V507M730.5 500V506M732.5 500V508M734.5 500V508M736.5 500V509M738.5 500V509M740.5 500V509M742.5 500V508M744.5 500V508M746.5 500V507M748.5 500V506M751.5 500V507M753.5 500V506M755.5 500V505M757.5 500V505M759.5 500V505M761.5 500V504M763.5 500V504M765.5 500V503M767.5 500V503M769.5 500V503M772.5 500V502M774.5 500V501M776.5 500V502M778.5 500V502M780.5 500V502M782.5 500V501M856.5 500V502M858.5 500V502M860.5 500V503M862.5 500V504M864.5 500V504M866.5 500V504M868.5 500V505M870.5 500V504M872.5 500V504M875.5 500V504M877.5 500V504M879.5 500V503M881.5 500V502" stroke="#54fcfc" fill="none"/>
<polyline fill="none" stroke="#ffff00" stroke-width="1" points="0.5,500.5 2.5,500.7 4.5,501.0 6.5,501.8 8.5,502.6 11.5,503.4 13.5,504.2 15.5,504.8 17.5,505.4 19.5,506.1 21.5,506.7 23.5,507.3 25.5,508.0 27.5,508.7 29.5,509.1 32.5,509.4 34.5,509.7 36.5,509.9 38.5,510.2 40.5,510.0 42.5,510.0 44.5,509.9 46.5,510.1 48.5,510.3 50.5,510.6 53.5,510.9 55.5,511.2 57.5,511.4 59.5,511.5 61.5,511.3 63.5,511.0 65.5,510.2 67.5,509.2 69.5,507.7 71.5,505.5 74.5,502.0 76.5,496.8 78.5,491.0 80.5,484.9 82.5,479.9 84.5,475.5 86.5,472.3 88.5,470.3 90.5,468.5 93.5,467.6 95.5,467.6 97.5,468.0 99.5,468.5 101.5,469.2 103.5,470.1 105.5,470.9 107.5,471.7 109.5,472.5 111.5,473.7 114.5,475.2 116.5,476.6 118.5,478.8 120.5,481.5 122.5,484.4 124.5,487.4 126.5,489.6 128.5,491.2 130.5,492.8 132.5,494.4 135.5,496.2 137.5,497.7 139.5,499.2 141.5,500.3 143.5,500.7 145.5,501.0 147.5,501.3 149.5,501.8 151.5,502.4 153.5,503.1 156.5,503.8 158.5,504.7 160.5,505.8 162.5,507.1 164.5,508.6 166.5,510.2 168.5,512.0 170.5,513.8 172.5,515.5 174.5,517.1 177.5,518.7 179.5,519.8 181.5,520.5 183.5,521.0 185.5,521.1 187.5,521.0 189.5,520.9 191.5,520.6 193.5,520.0 196.5,519.5 198.5,518.7 200.5,517.8 202.5,517.0 204.5,516.3 206.5,515.5 208.5,514.8 210.5,514.1 212.5,513.5 214.5,512.8 217.5,511.5 219.5,510.3 221.5,509.3 223.5,508.8 225.5,508.8 227.5,509.1 229.5,509.7 231.5,510.5 233.5,511.6 235.5,512.6 238.5,513.4 240.5,514.0 242.5,514.1 244.5,513.9 246.5,513.1 248.5,511.9 250.5,510.9 252.5,510.0 254.5,509.3 256.5,508.7 259.5,508.4 261.5,508.2 263.5,508.1 265.5,508.0 267.5,508.2 269.5,508.4 271.5,508.9 273.5,509.6 275.5,510.4 278.5,511.5 280.5,512.8 282.5,514.2 284.5,515.7 286.5,517.2 288.5,518.9 290.5,520.7 292.5,522.6 294.5,524.5 296.5,526.2 299.5,527.4 301.5,528.1 303.5,528.5 305.5,528.2 307.5,527.4 309.5,526.0 311.5,524.4 313.5,522.6 315.5,520.6 317.5,518.4 320.5,515.9 322.5,513.3 324.5,510.8 326.5,508.4 328.5,506.3 330.5,504.3 332.5,501.9 334.5,499.6 336.5,497.6 338.5,495.8 341.5,494.4 343.5,493.1 345.5,492.2 347.5,491.5 349.5,491.1 351.5,490.8 353.5,490.5 355.5,490.4 357.5,490.5 360.5,490.7 362.5,491.1 364.5,491.4 366.5,491.8 368.5,491.9 370.5,491.9 372.5,491.7 374.5,491.3 376.5,490.4 378.5,489.2 381.5,487.9 383.5,486.9 385.5,486.2 387.5,485.7 389.5,485.6 391.5,485.8 393.5,486.1 395.5,486.5 397.5,486.8 399.5,487.1 402.5,487.2 404.5,487.3 406.5,487.2 408.5,487.2 410.5,487.0 412.5,486.7 414.5,486.4 416.5,486.1 418.5,485.8 420.5,485.5 423.5,485.2 425.5,484.4 427.5,484.0 429.5,484.0 431.5,484.7 433.5,485.9 435.5,487.4 437.5,488.9 439.5,490.5 442.5,491.9 444.5,492.9 446.5,493.4 448.5,493.6 450.5,493.6 452.5,493.6 454.5,493.6 456.5,493.2 458.5,492.9 460.5,492.7 463.5,492.6 465.5,492.7 467.5,493.1 469.5,493.7 471.5,493.3 473.5,492.7 475.5,491.6 477.5,490.4 479.5,489.5 481.5,489.2 484.5,489.4 486.5,490.0 488.5,491.0 490.5,492.4 492.5,494.0 494.5,495.8 496.5,498.0 498.5,500.4 500.5,503.1 502.5,505.8 505.5,508.6 507.5,511.2 509.5,513.5 511.5,515.5 513.5,517.2 515.5,518.7 517.5,519.9 519.5,520.9 521.5,521.8 523.5,522.5 526.5,522.6 528.5,522.5 530.5,521.9 532.5,521.0 534.5,519.6 536.5,518.3 538.5,517.0 540.5,515.9 542.5,514.8 545.5,514.1 547.5,513.4 549.5,512.8 551.5,512.6 553.5,512.6 555.5,512.4 557.5,512.1 559.5,511.9 561.5,511.6 563.5,511.3 566.5,510.7 568.5,510.1 570.5,509.4 572.5,508.5 574.5,507.7 576.5,507.0 578.5,506.1 580.5,505.5 582.5,504.7 584.5,504.0 587.5,503.5 589.5,503.0 591.5,502.6 593.5,502.3 595.5,502.2 597.5,502.4 599.5,502.5 601.5,502.8 603.5,503.0 605.5,503.0 608.5,503.1 610.5,502.8 612.5,502.6 614.5,501.5 616.5,500.0 618.5,498.5 620.5,497.1 622.5,495.9 624.5,494.9 627.5,494.4 629.5,494.4 631.5,495.2 633.5,496.4 635.5,497.9 637.5,499.4 639.5,500.8 641.5,502.1 643.5,503.4 645.5,504.6 648.5,505.7 650.5,506.5 652.5,507.0 654.5,507.5 656.5,507.7 658.5,507.8 660.5,507.7 662.5,507.4 664.5,507.1 666.5,506.7 669.5,506.1 671.5,505.5 673.5,504.9 675.5,504.3 677.5,503.5 679.5,502.9 681.5,502.3 683.5,501.7 685.5,501.2 687.5,500.7 690.5,500.1 692.5,499.4 694.5,498.1 696.5,497.0 698.5,495.9 700.5,494.9 702.5,494.1 704.5,493.5 706.5,493.0 709.5,492.7 711.5,492.7 713.5,492.9 715.5,493.2 717.5,493.6 719.5,494.1 721.5,494.8 723.5,495.4 725.5,496.2 727.5,497.0 730.5,497.7 732.5,498.6 734.5,499.5 736.5,500.6 738.5,501.6 740.5,502.7 742.5,503.6 744.5,504.6 746.5,505.4 748.5,506.1 751.5,506.9 753.5,507.5 755.5,508.1 757.5,508.7 759.5,509.2 761.5,509.7 763.5,510.2 765.5,510.5 767.5,510.8 769.5,511.0 772.5,511.3 774.5,511.4 776.5,511.6 778.5,511.7 780.5,512.0 782.5,512.1 784.5,512.2 786.5,512.1 788.5,512.1 790.5,512.0 793.5,511.8 795.5,511.3 797.5,510.6 799.5,510.0 801.5,509.3 803.5,508.4 805.5,507.6 807.5,506.8 809.5,506.2 812.5,505.6 814.5,505.2 816.5,504.7 818.5,504.2 820.5,503.6 822.5,503.0 824.5,502.5 826.5,501.9 828.5,501.5 830.5,501.1 833.5,500.7 835.5,500.4 837.5,500.0 839.5,499.2 841.5,498.3 843.5,497.7 845.5,497.2 847.5,496.9 849.5,496.7 851.5,496.6 854.5,496.6 856.5,496.8 858.5,497.1 860.5,497.4 862.5,497.9 864.5,498.3 866.5,498.7 868.5,499.3 870.5,499.7 872.5,500.2 875.5,500.6 877.5,501.1 879.5,501.4 881.5,501.7 883.5,501.6"/>
<polyline fill="none" stroke="#fff" stroke-width="1" points="0.5,500.5 2.5,501.4 4.5,502.3 6.5,505.1 8.5,505.9 11.5,506.3 13.5,507.4 15.5,507.5 17.5,507.8 19.5,508.5 21.5,509.2 23.5,509.9 25.5,510.9 27.5,511.2 29.5,510.7 32.5,510.5 34.5,511.3 36.5,510.6 38.5,511.4 40.5,509.2 42.5,510.0 44.5,509.7 46.5,510.9 48.5,511.1 50.5,511.7 53.5,511.9 55.5,512.5 57.5,512.0 59.5,512.0 61.5,510.5 63.5,509.6 65.5,507.3 67.5,505.0 69.5,501.9 71.5,496.7 74.5,487.7 76.5,476.0 78.5,467.9 80.5,460.5 82.5,459.8 84.5,458.0 86.5,459.5 88.5,462.1 90.5,461.2 93.5,464.3 95.5,467.6 97.5,469.6 99.5,470.5 101.5,471.8 103.5,473.7 105.5,474.1 107.5,475.0 109.5,475.8 111.5,478.4 114.5,481.0 116.5,482.5 118.5,487.7 120.5,492.2 122.5,496.1 124.5,499.1 126.5,498.8 128.5,497.4 130.5,499.2 132.5,501.0 135.5,503.3 137.5,503.9 139.5,505.1 141.5,504.6 143.5,502.1 145.5,502.3 147.5,502.8 149.5,503.8 151.5,504.9 153.5,505.6 156.5,506.7 158.5,508.1 160.5,510.6 162.5,512.3 164.5,514.3 166.5,516.9 168.5,518.9 170.5,520.9 172.5,522.5 174.5,523.6 177.5,524.9 179.5,524.3 181.5,523.3 183.5,522.8 185.5,521.5 187.5,520.9 189.5,520.4 191.5,519.2 193.5,517.8 196.5,517.3 198.5,515.7 200.5,514.1 202.5,513.9 204.5,513.2 206.5,512.4 208.5,512.1 210.5,511.5 212.5,510.8 214.5,509.9 217.5,506.7 219.5,505.4 221.5,505.4 223.5,506.5 225.5,508.8 227.5,510.6 229.5,512.2 231.5,513.7 233.5,515.8 235.5,516.4 238.5,516.6 240.5,516.3 242.5,514.9 244.5,513.1 246.5,509.6 248.5,507.4 250.5,506.7 252.5,506.4 254.5,506.6 256.5,506.4 259.5,507.3 261.5,507.5 263.5,507.3 265.5,507.8 267.5,508.8 269.5,509.3 271.5,511.0 273.5,512.3 275.5,513.7 278.5,515.9 280.5,517.8 282.5,519.8 284.5,521.6 286.5,523.4 288.5,525.6 290.5,527.9 292.5,530.3 294.5,531.0 296.5,531.0 299.5,531.0 301.5,531.0 303.5,529.8 305.5,527.0 307.5,524.2 309.5,520.7 311.5,518.1 313.5,515.3 315.5,512.7 317.5,509.4 320.5,506.0 322.5,502.9 324.5,500.6 326.5,499.2 328.5,497.7 330.5,496.3 332.5,492.3 334.5,490.6 336.5,489.7 338.5,488.5 341.5,488.5 343.5,488.0 345.5,488.9 347.5,488.7 349.5,489.2 351.5,489.6 353.5,489.6 355.5,490.0 357.5,490.7 360.5,491.5 362.5,492.6 364.5,493.0 366.5,493.0 368.5,492.4 370.5,491.9 372.5,491.1 374.5,489.4 376.5,487.1 378.5,484.4 381.5,482.7 383.5,482.7 385.5,483.4 387.5,484.0 389.5,485.0 391.5,486.5 393.5,487.6 395.5,488.1 397.5,488.1 399.5,488.0 402.5,488.0 404.5,487.7 406.5,486.9 408.5,487.2 410.5,486.2 412.5,485.3 414.5,485.3 416.5,485.0 418.5,484.8 420.5,484.2 423.5,483.8 425.5,481.4 427.5,482.3 429.5,484.0 431.5,487.5 433.5,490.8 435.5,493.2 437.5,495.3 439.5,496.8 442.5,497.5 444.5,497.0 446.5,495.3 448.5,494.5 450.5,493.6 452.5,493.7 454.5,493.6 456.5,491.6 458.5,491.6 460.5,491.9 463.5,492.1 465.5,493.1 467.5,494.6 469.5,496.1 471.5,491.6 473.5,490.4 475.5,487.1 477.5,485.5 479.5,486.2 481.5,488.1 484.5,490.0 486.5,492.4 488.5,495.2 490.5,497.7 492.5,500.4 494.5,503.0 496.5,506.7 498.5,510.2 500.5,513.6 502.5,516.6 505.5,520.1 507.5,521.7 509.5,522.6 511.5,523.6 513.5,523.9 515.5,524.7 517.5,524.7 519.5,524.9 521.5,525.2 523.5,525.4 526.5,523.3 528.5,521.8 530.5,519.4 532.5,517.5 534.5,514.1 536.5,513.2 538.5,511.9 540.5,511.3 542.5,510.5 545.5,511.1 547.5,510.7 549.5,510.6 551.5,511.8 553.5,512.3 555.5,511.6 557.5,511.2 559.5,511.0 561.5,510.6 563.5,509.9 566.5,508.5 568.5,507.5 570.5,506.5 572.5,505.2 574.5,504.3 576.5,504.0 578.5,502.8 580.5,502.8 582.5,501.7 584.5,501.1 587.5,501.3 589.5,501.0 591.5,501.0 593.5,501.2 595.5,502.0 597.5,502.8 599.5,503.2 601.5,503.7 603.5,503.8 605.5,503.3 608.5,503.2 610.5,502.0 612.5,501.7 614.5,497.0 616.5,494.2 618.5,492.3 620.5,491.5 622.5,491.2 624.5,490.9 627.5,492.4 629.5,494.5 631.5,498.4 633.5,501.0 635.5,503.9 637.5,505.4 639.5,506.4 641.5,507.4 643.5,508.7 645.5,509.3 648.5,510.1 650.5,509.7 652.5,509.1 654.5,509.2 656.5,508.8 658.5,508.2 660.5,507.3 662.5,506.2 664.5,506.0 666.5,504.9 669.5,503.7 671.5,503.2 673.5,502.6 675.5,501.6 677.5,500.6 679.5,500.1 681.5,500.0 683.5,499.4 685.5,499.2 687.5,498.7 690.5,497.8 692.5,496.7 694.5,493.0 696.5,492.4 698.5,491.3 700.5,491.1 702.5,490.7 704.5,491.1 706.5,491.2 709.5,491.6 711.5,492.5 713.5,493.7 715.5,494.2 717.5,495.4 719.5,496.3 721.5,497.6 723.5,497.8 725.5,499.1 727.5,500.3 730.5,500.5 732.5,502.2 734.5,503.3 736.5,504.7 738.5,505.7 740.5,506.9 742.5,507.4 744.5,508.4 746.5,508.6 748.5,509.1 751.5,509.9 753.5,510.2 755.5,510.5 757.5,510.8 759.5,511.5 761.5,511.7 763.5,512.0 765.5,511.7 767.5,511.8 769.5,512.2 772.5,512.1 774.5,511.8 776.5,512.5 778.5,512.3 780.5,513.0 782.5,512.6 784.5,512.4 786.5,511.9 788.5,512.0 790.5,511.7 793.5,510.8 795.5,509.2 797.5,508.1 799.5,507.3 801.5,506.5 803.5,505.1 805.5,504.4 807.5,503.5 809.5,503.7 812.5,503.5 814.5,503.2 816.5,503.1 818.5,502.1 820.5,501.1 822.5,500.8 824.5,500.3 826.5,499.7 828.5,499.7 830.5,499.6 833.5,499.1 835.5,499.1 837.5,498.4 839.5,495.9 841.5,495.1 843.5,495.3 845.5,495.1 847.5,495.7 849.5,495.9 851.5,496.4 854.5,496.6 856.5,497.7 858.5,498.0 860.5,498.7 862.5,499.7 864.5,500.1 866.5,500.3 868.5,501.5 870.5,501.7 872.5,502.2 875.5,502.3 877.5,502.8 879.5,502.8 881.5,502.6 883.5,501.3"/>
<polyline fill="none" stroke="#00ff00" points="25.1,573.9 26.7,577.0 28.4,580.6 30.1,584.5 31.7,588.1 34.2,596.4 36.3,599.1 38.4,601.5 40.5,605.1 42.6,609.0 44.7,612.3 46.8,615.6 49.3,617.7 51.8,619.8 53.9,621.2 56.0,622.3 58.0,622.7 60.1,622.7 62.2,621.8 64.3,621.5 66.4,618.7 68.5,616.5 70.6,613.3 72.7,609.8 74.7,604.3 76.8,598.9 79.3,592.4 81.8,585.6 83.9,582.4 86.0,579.7 88.5,578.0 91.0,576.4 93.5,575.9 96.0,575.2 97.7,576.1 99.4,577.2 101.1,580.8 102.7,583.9 104.4,587.9 106.1,591.4 107.7,594.1 109.4,597.3 111.5,598.7 113.6,600.6 115.3,601.5 116.9,602.3 118.6,605.5 120.3,608.1 122.4,610.6 124.4,613.1 126.5,613.8 128.6,614.8 130.7,615.6 132.8,616.5 134.9,616.6 137.0,617.3 139.5,620.1 142.0,623.2 144.5,623.1 147.0,623.2 148.7,621.1 150.3,619.0 152.8,618.0 155.3,617.3 157.4,616.7 159.5,616.5 162.0,616.7 164.5,617.3 166.6,616.5 168.7,615.6 170.8,612.2 172.9,609.0 175.0,604.9 177.1,601.5 179.6,597.9 182.1,593.9 184.6,590.6 187.1,587.3 189.2,584.8 191.3,582.2 193.8,581.4 195.4,582.5 197.1,583.9 198.8,588.8 200.4,593.1 202.1,598.3 203.8,603.1 205.5,605.4 207.1,608.1 208.8,609.3 210.5,610.6 213.0,610.8 215.5,610.6 217.6,612.0 219.6,613.1 221.7,614.7 223.8,615.6 225.9,614.3 228.0,613.1 229.7,611.3 231.3,609.0 233.0,608.2 234.7,607.3 236.8,607.2 238.9,607.3 240.9,607.8 243.0,608.1 244.7,607.1 246.4,605.6 248.0,604.8 249.7,603.6 251.8,603.6 253.9,603.6 256.0,605.1 258.1,606.5 259.7,608.7 261.4,611.5 263.5,612.2 265.6,613.1 267.3,614.2 268.9,614.8 271.0,613.9 273.1,613.1 275.2,609.6 277.3,606.5 279.4,603.6 281.5,600.6 283.5,597.8 285.6,594.8 287.7,591.1 289.8,587.3 291.5,582.6 293.1,578.1 295.6,572.2 297.3,571.1 299.0,570.0 300.7,571.6 302.3,573.1 304.0,576.1 305.7,578.9 307.8,581.8 309.8,584.7 311.5,588.0 313.2,591.4 314.9,595.2 316.5,598.9 318.2,602.0 319.9,605.6 321.5,605.8 323.2,606.5 325.3,604.5 327.4,602.3 329.5,598.8 331.6,594.8 333.6,590.6 335.7,586.4 337.8,581.8 339.9,577.2 341.6,573.9 343.3,571.1 345.3,570.2 347.4,569.4 349.1,571.5 350.8,573.1 352.9,575.7 354.9,578.1 357.0,581.0 359.1,583.9 361.2,587.9 363.3,591.4 365.4,595.4 367.5,599.8 369.6,604.0 371.6,608.1 374.2,610.1 376.2,608.6 378.3,606.5 380.4,606.1 382.5,605.6 385.0,605.6 387.5,605.6 390.0,603.0 392.5,600.6 394.6,599.1 396.7,597.6 398.4,598.0 400.0,597.8 401.7,598.9 403.4,600.6 405.5,602.5 407.6,604.0 409.6,605.0 411.7,605.6 413.8,604.2 415.9,602.3 418.0,601.2 420.1,599.8 422.2,598.7 424.3,597.3 426.4,595.6 428.4,593.9 430.5,592.7 432.6,591.4 434.3,591.6 436.0,591.8 438.0,593.0 440.1,594.8 442.6,596.7 445.1,598.1 447.6,600.2 450.2,602.3 452.1,604.1 454.1,606.2 456.0,608.1 458.1,607.7 460.2,607.3 462.3,606.0 464.4,604.8 466.9,603.0 469.4,601.5 471.5,600.2 473.5,598.9 475.6,598.6 477.7,598.1 479.8,597.3 481.9,596.4 484.0,596.8 486.1,597.3 488.2,599.9 490.2,603.1 492.3,606.7 494.4,610.6 496.5,613.8 498.6,617.3 500.3,617.8 501.9,618.2 503.6,615.0 505.3,611.5 506.9,605.8 508.6,599.8 510.3,595.8 512.0,591.4 513.6,588.7 515.3,585.6 517.4,582.9 519.5,580.6 521.6,579.7 523.6,578.4 525.3,580.0 527.0,581.4 528.7,584.9 530.3,588.9 532.0,592.8 533.7,597.3 535.3,600.3 537.0,604.0 539.1,604.9 541.2,605.6 543.7,606.3 546.2,607.3 548.7,607.5 551.2,608.1 553.7,607.8 556.2,607.3 558.7,608.5 561.2,609.8 563.7,612.0 566.2,614.8 568.3,616.3 570.4,618.2 572.5,616.9 574.6,615.6 577.1,614.6 579.6,614.0 582.1,612.2 584.6,610.6 587.1,609.9 589.6,609.0 591.7,608.9 593.8,609.0 595.5,607.6 597.1,606.5 599.2,608.5 601.3,610.6 603.4,612.4 605.5,614.8 607.6,618.1 609.7,621.5 611.8,622.3 613.8,623.2 615.5,620.5 617.2,618.2 619.3,615.0 621.4,612.3 623.5,609.6 625.5,606.5 627.6,606.1 629.7,605.6 631.8,605.5 633.9,605.6 636.0,605.7 638.1,605.6 640.2,608.3 642.2,610.6 644.3,609.5 646.4,609.0 648.5,607.4 650.6,606.5 652.7,605.8 654.8,605.6 656.9,605.8 658.9,605.6 661.0,603.3 663.1,601.5 665.2,598.2 667.3,594.8 669.4,596.5 671.5,598.1 673.1,598.6 674.8,598.9 676.9,596.3 679.0,593.9 681.5,590.5 684.0,586.4 685.7,584.5 687.3,582.2 689.4,582.3 691.5,582.2 693.6,580.8 695.7,579.7 698.2,579.7 700.7,579.4 702.8,579.5 704.9,579.7 707.0,581.9 709.1,583.9 711.1,585.1 713.2,586.4 715.3,587.7 717.4,588.9 719.5,591.2 721.6,593.9 723.7,596.7 725.8,599.8 727.4,602.1 729.1,604.0 731.2,603.3 733.3,602.3 735.4,600.9 737.5,599.8 739.5,598.3 741.6,596.4 743.7,593.0 745.8,589.8 747.9,586.7 750.0,583.1 752.1,580.7 754.2,578.1 756.2,576.5 758.3,575.1 760.4,573.7 762.5,572.7 764.2,571.8 765.8,571.4 767.5,572.0 769.2,572.2 770.9,573.6 772.5,575.6 774.6,577.8 776.7,579.7 778.8,582.5 780.9,584.7 783.0,587.3 785.1,589.8 787.1,591.2 789.2,593.1 791.3,595.4 793.4,597.3 795.5,599.2 797.6,600.6 799.7,602.8 801.8,604.8 803.8,604.8 805.9,604.8 808.4,605.1 810.9,605.6 813.0,607.2 815.1,609.0 817.2,608.8 819.3,609.0 821.4,608.2 823.5,607.3 825.6,608.9 827.6,610.6 829.7,612.1 831.8,614.0 833.9,614.2 836.0,614.8 838.5,614.9 841.0,614.8 843.5,615.1 846.0,615.6 848.1,615.2 850.2,614.8 852.3,614.7 854.4,614.8 856.5,615.0 858.5,614.8 860.6,615.1 862.7,614.8 864.4,615.4 866.1,616.5 867.7,614.2 869.4,612.3 871.5,610.5 873.6,609.0 875.7,607.6 877.8,605.6 879.4,605.2 881.1,604.5 882.8,604.5"/>
<polyline fill="none" stroke="#ff00ff" points="13.4,560.0 15.9,569.7 18.4,579.7 20.9,588.1 23.0,589.0 25.1,588.9 27.6,591.0 30.1,592.3 31.7,596.4 33.4,601.5 35.5,606.0 37.6,611.5 39.3,614.3 40.9,616.5 42.6,619.2 44.3,621.5 46.8,624.0 49.3,622.3 50.9,623.3 52.6,624.0 54.3,623.0 56.0,622.3 58.0,621.2 60.1,619.8 62.2,619.1 64.3,618.2 66.0,615.3 67.6,612.3 69.7,606.5 71.8,601.5 73.5,594.7 75.2,588.1 76.8,581.3 78.5,574.7 80.2,570.8 81.8,566.4 84.0,564.2 86.9,566.4 88.5,570.2 90.2,573.1 92.7,582.2 94.8,585.2 96.9,587.3 99.0,588.1 101.1,588.9 102.7,591.8 104.4,594.8 106.9,603.1 108.6,606.6 110.2,610.6 111.9,611.4 113.6,613.1 115.7,612.3 117.8,612.3 119.8,613.1 121.9,614.0 124.0,614.6 126.1,615.6 127.8,617.2 129.5,619.0 131.5,619.8 133.6,619.8 136.1,622.4 138.6,624.8 140.3,626.6 142.0,628.2 144.1,626.7 146.2,625.7 147.8,622.3 149.5,619.8 151.2,614.2 152.8,609.0 155.3,606.5 157.0,608.2 158.7,610.6 160.4,614.4 162.0,618.2 163.7,622.0 165.4,624.8 167.0,624.6 168.7,624.0 170.4,618.3 172.0,613.1 174.5,596.4 177.1,578.1 178.7,575.1 180.4,571.4 182.1,570.3 183.7,568.5 186.2,576.4 187.9,581.2 189.6,585.6 191.7,588.9 193.8,591.4 195.8,597.1 197.9,602.3 200.0,608.4 202.1,614.0 203.8,617.6 205.5,621.5 208.0,624.0 209.6,622.0 211.3,619.0 213.0,616.1 214.6,612.3 217.1,607.3 219.6,605.6 222.2,611.5 224.7,616.5 226.3,615.7 228.0,615.6 229.7,614.2 231.3,612.3 233.0,608.3 234.7,604.0 237.2,600.6 238.9,601.0 240.5,601.5 242.2,603.6 243.9,605.6 246.0,605.6 248.0,605.6 250.5,606.5 253.1,606.5 255.1,606.5 257.2,606.5 258.9,609.7 260.6,612.3 262.2,615.5 263.9,619.0 266.0,621.0 268.1,622.3 269.8,623.1 271.4,623.2 273.9,614.8 276.4,601.5 278.9,586.4 281.5,578.1 283.1,576.4 284.8,574.7 286.5,574.1 288.1,573.4 289.8,574.1 291.5,573.9 293.1,571.2 294.8,568.0 297.8,565.2 300.7,568.0 303.2,575.6 305.7,584.7 308.2,598.1 310.7,608.1 313.2,616.5 315.7,619.8 318.2,620.2 320.7,614.8 323.2,604.8 324.9,598.9 326.5,593.1 329.1,578.1 331.6,571.4 333.2,569.6 334.9,568.4 337.0,568.5 339.1,568.9 341.2,569.3 343.3,569.4 345.3,569.2 347.4,569.7 349.1,573.5 350.8,576.4 352.4,579.9 354.1,583.9 355.8,588.5 357.5,592.3 359.1,595.8 360.8,599.8 362.5,602.7 364.1,604.8 365.8,608.8 367.5,612.3 369.1,614.8 370.8,617.3 373.3,618.5 375.8,614.8 378.3,604.8 380.8,596.4 382.5,595.0 384.2,593.4 385.8,593.6 387.5,593.4 389.2,595.4 390.9,597.3 393.4,601.5 395.0,601.4 396.7,601.8 398.8,602.0 400.9,602.8 403.0,603.8 405.1,604.8 407.1,607.6 409.2,609.5 411.3,608.5 413.4,607.3 415.5,603.1 417.6,599.8 420.1,592.3 422.2,590.9 424.3,588.9 425.9,587.9 427.6,586.4 430.4,584.4 432.6,588.9 434.3,593.1 436.0,596.4 437.6,600.3 439.3,604.8 441.0,607.1 442.6,609.0 444.7,607.7 446.8,607.3 449.3,607.0 451.8,606.5 453.9,607.5 456.0,609.0 457.7,608.3 459.3,608.1 461.4,606.0 463.5,603.1 465.6,599.8 467.7,597.3 469.4,594.8 471.0,592.3 474.0,590.6 476.9,593.9 479.0,595.5 481.1,596.4 483.1,599.1 485.2,602.3 487.3,607.0 489.4,612.3 491.1,616.4 492.7,619.8 494.4,622.7 496.1,625.7 497.8,626.7 499.4,627.3 501.1,623.9 502.8,621.5 505.3,603.1 507.8,583.1 510.3,566.4 512.8,556.4 514.5,553.3 516.1,557.2 518.6,568.0 521.1,579.7 523.6,591.4 526.2,604.8 528.7,613.1 530.3,613.4 532.0,614.0 533.7,611.6 535.3,609.8 537.0,605.8 538.7,601.5 540.4,598.5 542.0,596.4 544.5,598.1 546.2,602.3 547.9,605.6 549.5,608.9 551.2,613.1 552.9,615.5 554.5,617.3 556.2,615.6 557.9,614.8 560.0,613.3 562.1,612.3 564.2,613.5 566.2,614.0 568.3,616.6 570.4,619.8 572.5,619.5 574.6,619.8 576.3,617.5 577.9,614.8 579.6,610.1 581.3,605.6 582.9,602.7 584.6,600.6 586.3,600.7 588.0,599.8 590.0,600.3 592.1,601.5 594.6,609.0 596.3,611.8 598.0,615.6 600.1,618.0 602.2,620.7 604.2,622.9 606.3,624.8 608.4,627.2 610.5,629.0 612.2,629.8 614.7,621.5 616.4,615.3 618.0,609.8 619.7,603.0 621.4,596.4 623.0,591.8 624.7,588.1 626.4,586.8 628.9,594.8 631.4,606.5 633.1,612.3 634.7,618.2 636.4,621.3 638.1,624.0 639.7,625.5 641.4,626.5 643.9,625.7 646.4,613.1 648.9,598.1 651.4,587.3 653.9,584.4 656.4,591.4 658.9,604.8 661.5,614.0 664.0,615.6 666.5,608.1 668.1,602.7 669.8,596.4 671.5,591.3 673.1,585.6 674.8,583.4 676.5,580.6 678.6,579.5 680.7,578.1 682.3,577.9 684.0,577.7 685.7,578.5 687.3,579.7 689.0,582.0 690.7,583.9 693.2,586.4 695.3,584.1 697.4,582.2 699.0,580.2 700.7,578.9 702.8,576.1 704.9,573.4 707.4,578.1 709.9,586.4 711.6,591.4 713.2,595.6 714.9,598.6 716.6,602.3 718.2,603.6 719.9,604.8 722.0,606.4 724.1,608.1 726.6,605.6 728.3,606.5 729.9,607.3 732.4,599.8 734.1,596.1 735.8,593.1 738.3,593.9 740.0,591.1 741.6,587.3 743.3,583.7 745.0,580.6 746.6,578.6 748.3,576.4 750.0,574.2 751.6,572.2 753.3,571.3 755.0,571.4 757.1,571.4 759.2,571.4 761.3,571.0 763.3,571.4 765.4,571.1 767.5,571.7 770.0,574.7 771.7,578.0 773.4,582.2 775.0,584.4 776.7,587.3 778.4,589.8 780.0,593.1 782.1,597.8 784.2,602.3 786.3,601.5 788.4,600.6 790.5,600.3 792.6,598.9 794.7,600.6 796.7,601.5 798.8,604.0 800.9,605.6 803.4,611.5 805.9,610.6 808.0,609.5 810.1,609.0 812.6,607.7 815.1,606.5 817.2,606.2 819.3,606.5 821.0,606.1 822.6,605.6 824.7,609.5 826.8,613.1 828.5,617.2 830.2,620.7 832.7,624.0 834.7,624.6 836.8,624.8 839.3,618.2 841.0,612.9 842.7,608.1 845.2,606.5 846.9,609.0 849.4,605.6 851.9,614.8 853.5,616.4 855.2,618.2 857.3,619.0 859.4,619.8 861.5,619.3 863.6,619.8 865.2,616.9 866.9,614.8 868.6,610.1 870.2,605.6 871.9,601.5 873.6,598.1 875.3,595.4 876.9,592.3 879.4,591.1 881.1,596.4 882.8,601.5"/>
<polyline fill="none" stroke="#ffff00" points="2.0,557.2 3.3,569.7 5.0,581.4 7.5,591.4 10.0,598.1 13.0,603.1 15.0,600.6 17.5,603.1 20.0,603.1 21.7,603.8 23.4,605.6 25.1,606.5 26.7,607.3 28.8,607.9 30.9,609.0 32.6,616.5 35.1,615.6 36.7,619.8 39.3,614.8 41.8,616.5 44.3,619.0 45.9,617.1 47.6,614.8 50.1,615.6 51.8,615.5 53.5,614.8 55.1,614.8 56.8,616.5 59.8,615.6 61.8,619.8 64.3,621.4 66.8,624.8 68.9,624.7 71.0,623.2 73.1,624.8 75.2,627.3 76.8,628.5 78.5,630.7 80.2,629.6 81.8,626.5 84.4,623.5 86.9,620.7 89.4,621.3 91.9,620.7 94.4,619.8 96.9,619.0 99.4,618.8 101.9,618.2 103.8,616.6 105.8,616.8 107.7,615.6 109.8,616.8 111.9,616.5 114.0,620.3 116.1,624.0 118.6,614.8 120.3,612.8 121.9,609.8 123.6,612.7 125.3,614.8 126.9,614.8 128.6,616.5 130.3,614.9 132.0,612.3 134.5,611.2 137.0,609.8 139.5,610.7 142.0,612.3 144.1,613.0 146.2,615.6 148.7,619.8 151.2,620.1 153.7,619.0 156.2,614.0 158.3,614.8 160.4,615.6 162.0,614.4 163.7,612.3 165.4,611.4 167.0,609.0 168.7,607.7 170.4,605.6 172.9,600.6 175.4,593.9 177.9,601.5 179.6,604.0 181.2,604.8 183.7,604.8 185.4,606.7 187.1,609.0 189.2,608.7 191.3,607.3 192.9,609.7 194.6,612.3 196.3,614.4 197.9,614.8 200.4,615.6 202.9,619.0 205.5,619.8 207.1,619.3 208.8,617.3 210.5,614.8 212.1,614.0 213.8,613.2 215.5,614.0 217.1,616.3 218.8,619.8 220.5,617.4 222.2,613.1 224.7,604.8 226.3,604.2 228.0,604.0 230.5,601.5 233.0,604.0 235.5,598.1 237.2,599.2 238.9,599.8 240.5,601.1 242.2,603.1 243.9,603.1 245.5,603.1 247.6,602.5 249.7,602.3 251.4,603.7 253.1,605.6 254.7,608.3 256.4,610.6 258.5,612.9 260.6,614.8 262.2,618.5 263.9,620.7 265.6,619.8 267.3,618.2 268.9,615.7 270.6,611.5 272.3,609.7 273.9,606.5 275.6,606.2 277.3,604.0 279.8,606.5 281.5,608.9 283.1,610.6 285.6,607.3 287.3,603.7 289.0,601.5 290.6,597.6 292.3,592.3 294.8,588.9 297.3,592.3 299.0,595.7 300.7,597.3 302.3,600.6 304.0,602.3 306.1,604.1 308.2,605.6 310.3,606.1 312.4,605.6 314.0,607.1 315.7,609.8 317.4,613.8 319.0,616.5 321.5,624.0 323.2,626.7 324.9,629.0 327.4,627.7 329.9,627.3 332.4,626.5 334.9,627.3 336.6,628.9 338.2,629.0 340.7,630.0 343.3,629.0 345.8,627.8 348.3,628.2 349.9,627.5 351.6,625.7 354.1,624.7 356.6,624.0 359.1,622.0 361.6,621.5 364.1,620.2 366.6,619.8 369.1,621.6 371.6,622.3 373.7,623.9 375.8,624.0 377.5,624.3 379.2,626.5 380.8,624.2 382.5,621.5 384.6,620.2 386.7,620.7 388.8,621.5 390.9,621.5 392.9,620.7 395.0,620.7 397.5,621.4 400.0,620.7 402.5,621.6 405.1,620.7 407.6,613.1 410.1,618.2 411.7,620.3 413.4,622.3 415.1,624.2 416.7,624.0 419.3,623.2 421.8,623.2 423.8,622.7 425.9,624.0 428.0,624.6 430.1,624.8 431.8,619.3 433.5,615.6 436.0,620.7 438.0,619.6 440.1,619.8 442.6,619.6 445.1,619.8 447.6,619.6 450.2,619.0 452.1,618.3 454.1,618.1 456.0,619.0 457.7,620.1 459.3,619.8 461.8,625.7 463.9,625.3 466.0,625.7 467.7,625.3 469.4,623.2 471.5,624.8 473.5,624.8 475.2,620.4 476.9,616.5 479.0,616.8 481.1,617.3 483.1,616.5 485.2,615.6 487.7,615.1 490.2,614.0 492.3,612.5 494.4,610.6 496.1,609.1 497.8,607.3 499.4,604.6 501.1,601.5 502.8,599.0 504.4,594.8 506.1,603.1 507.8,600.6 509.5,598.1 511.1,597.6 512.8,597.3 514.5,599.8 516.1,601.5 517.8,603.4 519.5,606.5 521.1,607.3 522.8,609.0 525.3,615.6 527.0,619.1 528.7,620.7 530.3,622.4 532.0,624.0 534.5,624.5 537.0,624.8 539.5,624.3 542.0,625.7 544.1,623.0 546.2,620.7 548.3,621.7 550.4,622.3 552.0,617.2 553.7,614.0 555.8,612.5 557.9,610.6 560.0,610.9 562.1,610.6 564.2,608.9 566.2,609.0 567.9,612.6 569.6,615.6 571.3,617.7 572.9,619.8 575.0,619.8 577.1,619.0 578.8,619.9 580.4,621.5 582.1,624.4 583.8,626.5 585.9,624.9 588.0,622.3 590.5,619.3 593.0,618.2 594.6,613.9 596.3,611.5 598.8,611.8 601.3,611.5 603.8,612.4 606.3,611.5 608.4,610.6 610.5,610.6 613.0,613.1 614.7,622.3 616.4,623.1 618.0,624.0 620.5,626.5 622.2,623.8 623.9,620.7 626.0,618.2 628.0,616.5 630.1,614.1 632.2,612.3 634.3,609.8 636.4,608.1 638.1,608.7 639.7,609.8 641.4,608.7 643.1,607.3 644.7,602.7 646.4,598.9 648.1,597.9 649.8,597.3 652.3,603.1 653.9,608.3 655.6,612.3 657.7,613.4 659.8,616.5 661.5,619.5 663.1,622.3 664.8,624.9 666.5,626.5 668.5,626.1 670.6,626.5 672.7,626.8 674.8,628.2 677.3,628.8 679.8,628.2 681.9,627.2 684.0,627.3 685.7,625.0 687.3,624.0 689.4,624.7 691.5,625.7 694.0,626.5 696.5,626.5 698.6,625.3 700.7,625.7 702.8,625.7 704.9,626.5 706.5,620.7 708.6,620.3 710.7,620.7 712.8,621.3 714.9,620.7 717.0,621.0 719.1,621.5 721.2,620.5 723.3,618.2 725.8,614.0 727.4,612.9 729.1,613.1 731.6,605.6 733.3,603.1 734.9,609.8 736.6,609.5 738.3,609.8 740.0,606.8 741.6,603.1 743.3,601.0 745.0,597.3 746.6,595.9 748.3,594.8 750.8,598.1 752.9,597.6 755.0,598.1 756.7,596.9 758.3,597.3 760.4,599.0 762.5,600.6 764.6,601.2 766.7,603.1 768.4,602.9 770.0,601.5 771.7,606.3 773.4,609.8 775.5,607.5 777.5,606.5 779.6,607.7 781.7,609.8 783.8,608.7 785.9,606.5 788.4,606.7 790.9,606.5 793.4,612.3 795.1,615.0 796.7,616.5 798.4,616.6 800.1,617.3 801.8,614.1 803.4,612.3 805.9,617.3 808.0,614.4 810.1,612.3 811.8,614.6 813.5,615.6 815.5,616.4 817.6,618.2 820.1,617.8 822.6,618.2 824.7,615.9 826.8,614.0 828.9,614.2 831.0,614.8 832.7,614.6 834.3,614.8 836.8,619.8 839.3,624.0 841.0,624.0 842.7,622.3 844.8,620.0 846.9,619.0 848.5,618.4 850.2,619.8 852.7,615.6 854.4,616.1 856.0,614.8 858.5,619.0 860.2,618.9 861.9,617.3 863.6,616.6 865.2,614.0 867.3,612.6 869.4,611.5 871.5,610.7 873.6,608.1 875.3,609.0 876.9,608.1 878.6,609.7 880.3,612.3 882.8,616.5"/>
<polyline fill="none" stroke="#fff" points="2.0,633.5 4.1,632.9 6.2,632.5 8.4,633.2 9.7,624.0 11.7,621.5 13.4,622.1 15.0,623.2 17.3,623.0 19.5,623.4 21.7,624.8 23.4,623.4 25.1,622.3 27.6,623.6 30.1,623.2 32.6,622.9 35.1,621.5 37.6,621.6 40.1,620.7 42.2,619.7 44.3,619.8 46.2,620.2 48.2,619.9 50.1,620.7 52.6,619.2 55.1,619.0 57.2,617.8 59.3,618.2 61.8,611.5 63.9,608.8 66.0,607.3 67.6,610.7 69.3,612.3 71.8,601.5 73.5,593.8 75.2,584.7 76.8,581.6 78.5,577.2 80.2,580.8 81.8,583.1 83.5,585.4 85.2,588.9 87.3,587.7 89.4,587.3 91.5,589.6 93.5,591.4 95.8,593.0 98.0,594.4 100.2,594.8 101.9,598.9 103.6,601.5 105.6,606.1 107.7,612.3 109.8,612.5 111.9,612.3 113.6,609.3 115.3,605.6 116.9,609.0 118.6,612.3 120.7,612.1 122.8,613.1 124.4,606.8 126.1,600.6 127.8,600.6 129.5,602.3 132.0,608.1 134.5,609.4 137.0,609.0 139.5,608.9 142.0,607.3 144.5,605.7 147.0,604.0 149.5,602.3 152.0,601.5 154.5,610.6 156.2,616.5 158.3,616.9 160.4,615.6 162.9,615.8 165.4,615.6 167.5,618.5 169.5,619.8 172.0,626.5 174.5,632.4 176.2,632.2 177.9,630.7 180.4,625.7 182.9,625.3 185.4,624.8 187.6,624.4 189.9,624.5 192.1,624.0 194.6,622.2 197.1,620.7 198.8,619.6 200.4,619.8 202.1,617.3 203.8,615.6 205.5,617.5 207.1,618.2 208.8,620.6 210.5,624.8 212.1,624.8 213.8,626.5 216.3,616.5 218.0,610.6 220.1,611.3 222.2,611.5 223.8,614.8 225.9,614.8 228.0,615.6 229.7,617.0 231.3,618.2 233.0,619.8 234.7,621.5 236.8,618.7 238.9,616.5 240.9,616.2 243.0,614.0 245.1,615.9 247.2,619.0 249.3,618.8 251.4,619.0 253.9,618.0 256.4,618.2 258.1,616.3 259.7,614.0 261.8,613.5 263.9,614.0 266.0,615.4 268.1,617.3 269.8,620.3 271.4,622.3 273.1,624.9 274.8,628.2 276.4,629.5 278.1,630.7 280.6,629.4 283.1,626.5 285.6,626.1 288.1,627.3 290.2,627.7 292.3,629.8 294.4,628.9 296.5,629.0 298.2,626.6 299.8,623.2 301.9,619.6 304.0,615.6 306.1,614.3 308.2,614.0 309.8,613.2 311.5,613.1 314.0,605.6 315.7,604.1 317.4,604.0 319.0,601.0 320.7,598.1 322.4,596.8 324.0,597.3 326.5,596.4 329.1,600.6 330.7,600.2 332.4,598.9 334.1,601.0 335.7,601.5 338.2,602.4 340.7,601.5 342.4,604.4 344.1,606.5 345.8,608.2 347.4,608.1 349.1,609.3 350.8,612.3 352.4,611.9 354.1,612.3 355.8,614.5 357.5,614.8 359.1,615.4 360.8,614.8 362.5,626.5 364.1,624.2 365.8,622.3 367.5,621.5 369.1,619.0 370.8,618.8 372.5,618.2 374.2,614.2 375.8,609.0 377.5,606.9 379.2,605.6 380.8,605.4 382.5,606.5 385.0,606.8 387.5,607.3 390.0,606.2 392.5,606.5 395.0,607.1 397.5,608.1 400.0,608.6 402.5,607.3 405.1,604.0 407.6,610.6 409.2,607.8 410.9,605.6 413.0,603.0 415.1,602.3 417.6,601.0 420.1,601.5 422.2,600.8 424.3,601.5 425.9,599.9 427.6,597.3 429.3,597.8 430.9,598.9 432.6,601.9 434.3,605.6 436.4,607.3 438.5,610.6 440.1,609.9 441.8,607.3 444.3,607.1 446.8,607.3 449.3,606.3 451.8,606.5 453.9,608.5 456.0,612.3 458.1,608.9 460.2,607.3 462.3,607.5 464.4,609.0 466.4,609.3 468.5,609.0 470.6,606.2 472.7,604.8 475.2,598.9 477.3,599.7 479.4,602.3 481.5,603.5 483.6,604.8 485.6,605.5 487.7,607.3 489.8,609.1 491.9,609.0 494.0,610.3 496.1,613.1 498.2,615.3 500.3,617.3 502.8,621.5 504.4,629.8 506.5,631.6 508.6,632.4 510.7,631.8 512.8,631.5 514.5,627.5 516.1,621.5 518.2,621.0 520.3,620.7 522.4,619.3 524.5,619.0 526.2,616.7 527.8,614.8 530.3,613.1 532.8,613.1 535.3,612.6 537.8,612.3 539.9,611.8 542.0,612.3 543.7,616.0 545.4,618.2 547.0,619.2 548.7,619.0 550.4,617.7 552.0,616.5 554.5,622.3 556.6,620.1 558.7,619.8 560.8,619.3 562.9,619.8 565.4,612.3 567.5,612.6 569.6,614.0 571.7,610.1 573.8,607.3 575.8,608.4 577.9,610.6 580.4,609.7 582.9,607.3 585.5,608.7 588.0,611.5 590.5,611.0 593.0,612.3 595.5,619.8 597.6,617.8 599.6,614.0 601.7,613.3 603.8,612.3 605.5,612.5 607.2,610.6 609.3,610.0 611.3,609.8 613.8,598.1 615.5,588.9 617.2,591.8 618.9,593.1 620.5,596.7 622.2,599.8 624.3,601.6 626.4,602.3 628.0,606.1 629.7,609.0 631.8,610.6 633.9,612.3 636.0,611.5 638.1,612.3 640.2,611.7 642.2,612.3 644.7,622.3 645.6,630.7 647.7,629.3 649.8,626.5 651.4,622.3 653.1,616.5 654.8,616.5 656.4,614.8 658.1,614.1 659.8,614.0 661.5,612.6 663.1,610.6 665.2,610.8 667.3,609.8 669.0,608.8 670.6,607.3 672.7,608.8 674.8,609.0 677.3,606.5 679.8,604.0 681.9,606.8 684.0,609.0 686.5,608.5 689.0,607.3 690.7,605.6 692.4,604.8 694.0,600.2 695.7,593.9 697.4,596.1 699.0,596.4 701.1,594.8 703.2,594.8 704.9,600.3 706.5,604.0 708.2,607.0 709.9,608.1 712.4,608.5 714.9,608.1 717.0,607.6 719.1,609.0 721.2,611.9 723.3,613.1 725.4,628.2 728.3,623.2 729.9,623.7 731.6,625.7 734.1,626.2 736.6,624.8 738.6,626.0 740.5,625.6 742.5,627.3 744.4,626.7 746.4,627.6 748.3,627.3 750.3,626.9 752.2,626.7 754.2,625.7 755.8,627.8 757.5,628.2 759.6,627.6 761.7,628.2 763.8,626.3 765.8,626.5 767.9,626.9 770.0,625.7 771.7,623.0 773.4,622.3 775.5,623.5 777.5,623.2 779.6,620.3 781.7,619.0 783.8,621.3 785.9,622.3 788.0,624.1 790.1,624.8 791.7,622.7 793.4,619.0 794.2,606.5 795.9,604.5 797.6,602.3 799.3,603.9 800.9,604.0 803.4,605.6 805.6,595.6 808.4,600.6 810.9,600.0 813.5,600.6 815.5,601.4 817.6,601.5 819.7,601.1 821.8,601.5 824.3,612.3 826.4,613.9 828.5,614.0 830.2,614.9 831.8,614.8 833.5,621.5 836.0,622.3 838.5,614.0 840.2,608.1 841.8,609.7 843.5,611.5 846.0,611.5 848.5,611.5 850.6,610.9 852.7,612.3 855.2,611.0 857.7,611.5 859.4,611.2 861.1,610.6 862.7,612.3 864.4,614.0 866.9,623.2 868.6,629.0 871.1,626.5 873.2,626.8 875.3,625.7 876.9,623.4 878.6,620.7 880.3,619.5 881.9,619.8 883.6,609.8"/>
<rect x="4.5" y="8.5" width="11" height="10" rx="2" fill="none" stroke="#6e6e6e" shape-rendering="auto"/>
<rect x="11" y="10" width="3" height="7" fill="#7c7c7c"/>
<text x="27" y="18.5" fill="#c0c0c0" font-size="12" style='font-family:"Liberation Sans","Noto Sans CJK SC",sans-serif'>分时</text>
<text x="61" y="18.5" fill="#c0c0c0" font-size="12" style='font-family:"Liberation Sans","Noto Sans CJK SC",sans-serif'>1分钟</text>
<text x="99.5" y="18.5" fill="#c0c0c0" font-size="12" style='font-family:"Liberation Sans","Noto Sans CJK SC",sans-serif'>5分钟</text>
<text x="138.5" y="18.5" fill="#c0c0c0" font-size="12" style='font-family:"Liberation Sans","Noto Sans CJK SC",sans-serif'>15分钟</text>
<text x="184.5" y="18.5" fill="#c0c0c0" font-size="12" style='font-family:"Liberation Sans","Noto Sans CJK SC",sans-serif'>30分钟</text>
<text x="230.5" y="18.5" fill="#c0c0c0" font-size="12" style='font-family:"Liberation Sans","Noto Sans CJK SC",sans-serif'>60分钟</text>
<text x="277.5" y="18.5" fill="#54fcfc" font-size="12" style='font-family:"Liberation Sans","Noto Sans CJK SC",sans-serif'>日线</text>
<text x="310.5" y="18.5" fill="#c0c0c0" font-size="12" style='font-family:"Liberation Sans","Noto Sans CJK SC",sans-serif'>周线</text>
<text x="345" y="18.5" fill="#c0c0c0" font-size="12" style='font-family:"Liberation Sans","Noto Sans CJK SC",sans-serif'>月线</text>
<text x="377.5" y="18.5" fill="#c0c0c0" font-size="12" style='font-family:"Liberation Sans","Noto Sans CJK SC",sans-serif'>多周期</text>
<text x="422" y="18.5" fill="#c0c0c0" font-size="12" style='font-family:"Liberation Sans","Noto Sans CJK SC",sans-serif'>更多</text>
<text x="449" y="18.5" fill="#c0c0c0" font-size="12" style='font-family:"Liberation Sans","Noto Sans CJK SC",sans-serif'>&gt;</text>
<text x="833.5" y="18.5" fill="#c0c0c0" font-size="12" text-anchor="middle" style='font-family:"Liberation Sans","Noto Sans CJK SC",sans-serif'>复权</text>
<text x="867.5" y="18.5" fill="#c0c0c0" font-size="12" text-anchor="middle" style='font-family:"Liberation Sans","Noto Sans CJK SC",sans-serif'>叠加</text>
<text x="902.0" y="18.5" fill="#c0c0c0" font-size="12" text-anchor="middle" style='font-family:"Liberation Sans","Noto Sans CJK SC",sans-serif'>多股</text>
<text x="937.0" y="18.5" fill="#c0c0c0" font-size="12" text-anchor="middle" style='font-family:"Liberation Sans","Noto Sans CJK SC",sans-serif'>统计</text>
<text x="972.0" y="18.5" fill="#c0c0c0" font-size="12" text-anchor="middle" style='font-family:"Liberation Sans","Noto Sans CJK SC",sans-serif'>画线</text>
<text x="1007.0" y="18.5" fill="#54fcfc" font-size="12" text-anchor="middle" style='font-family:"Liberation Sans","Noto Sans CJK SC",sans-serif'>F10</text>
<text x="1042.0" y="18.5" fill="#c0c0c0" font-size="12" text-anchor="middle" style='font-family:"Liberation Sans","Noto Sans CJK SC",sans-serif'>标记</text>
<text x="1077.0" y="18.5" fill="#c0c0c0" font-size="12" text-anchor="middle" style='font-family:"Liberation Sans","Noto Sans CJK SC",sans-serif'>+自选</text>
<text x="1113.0" y="18.5" fill="#c0c0c0" font-size="12" text-anchor="middle" style='font-family:"Liberation Sans","Noto Sans CJK SC",sans-serif'>返回</text>
<text x="2" y="38.5" fill="#c0c0c0" font-size="12" style='font-family:"Liberation Sans","Noto Sans CJK SC",sans-serif'>康盛股份(日线)</text>
<circle cx="94" cy="34" r="6" fill="#7d7d7d" shape-rendering="auto"/>
<path d="M90.5 32.5 L94 36 L97.5 32.5" fill="none" stroke="#1a1a1a" stroke-width="1.4" shape-rendering="auto"/>
<text x="104.5" y="38.5" fill="#fff" font-size="12" style='font-family:"Liberation Sans",sans-serif' letter-spacing="-0.25">MA5: 2.87</text>
<text x="162.5" y="38.5" fill="#ffff00" font-size="12" style='font-family:"Liberation Sans",sans-serif' letter-spacing="-0.25">MA10: 2.85</text>
<text x="227.5" y="38.5" fill="#ff00ff" font-size="12" style='font-family:"Liberation Sans",sans-serif' letter-spacing="-0.25">MA20: 2.90</text>
<text x="292.5" y="38.5" fill="#00ff00" font-size="12" style='font-family:"Liberation Sans",sans-serif' letter-spacing="-0.25">MA60: 2.88</text>
<circle cx="7" cy="338.5" r="6" fill="#7d7d7d" shape-rendering="auto"/>
<path d="M3.5 337.0 L7 340.5 L10.5 337.0" fill="none" stroke="#1a1a1a" stroke-width="1.4" shape-rendering="auto"/>
<text x="16.5" y="343" fill="#c0c0c0" font-size="12" style='font-family:"Liberation Sans",sans-serif' letter-spacing="-0.15">VOL-TDX(5,10)</text>
<text x="104" y="343" fill="#fff" font-size="12" style='font-family:"Liberation Sans",sans-serif' letter-spacing="-0.15">VVOL: 484642</text>
<text x="187" y="343" fill="#ffff00" font-size="12" style='font-family:"Liberation Sans",sans-serif' letter-spacing="-0.15">VOLUME: 484642</text>
<text x="290" y="343" fill="#ffff00" font-size="12" style='font-family:"Liberation Sans",sans-serif' letter-spacing="-0.15">MA5: 199593</text>
<text x="365.5" y="343" fill="#ff00ff" font-size="12" style='font-family:"Liberation Sans",sans-serif' letter-spacing="-0.15">MA10: 143849</text>
<circle cx="7" cy="439.5" r="6" fill="#7d7d7d" shape-rendering="auto"/>
<path d="M3.5 438.0 L7 441.5 L10.5 438.0" fill="none" stroke="#1a1a1a" stroke-width="1.4" shape-rendering="auto"/>
<text x="16.5" y="444" fill="#c0c0c0" font-size="12" style='font-family:"Liberation Sans",sans-serif' letter-spacing="-0.15">MACD(12,26,9)</text>
<text x="104.5" y="444" fill="#fff" font-size="12" style='font-family:"Liberation Sans",sans-serif' letter-spacing="-0.15">DIF: -0.01</text>
<text x="163" y="444" fill="#ffff00" font-size="12" style='font-family:"Liberation Sans",sans-serif' letter-spacing="-0.15">DEA: -0.02</text>
<text x="226.5" y="444" fill="#ff00ff" font-size="12" style='font-family:"Liberation Sans",sans-serif' letter-spacing="-0.15">MACD: 0.01</text>
<circle cx="7" cy="541.5" r="6" fill="#7d7d7d" shape-rendering="auto"/>
<path d="M3.5 540.0 L7 543.5 L10.5 540.0" fill="none" stroke="#1a1a1a" stroke-width="1.4" shape-rendering="auto"/>
<text x="16.5" y="546" fill="#c0c0c0" font-size="12" style='font-family:"Liberation Sans",sans-serif' letter-spacing="-0.15">DMI(14,6)</text>
<text x="75" y="546" fill="#fff" font-size="12" style='font-family:"Liberation Sans",sans-serif' letter-spacing="-0.15">PDI: 28.32</text>
<text x="137.5" y="546" fill="#ffff00" font-size="12" style='font-family:"Liberation Sans",sans-serif' letter-spacing="-0.15">MDI: 18.58</text>
<text x="199.5" y="546" fill="#ff00ff" font-size="12" style='font-family:"Liberation Sans",sans-serif' letter-spacing="-0.15">ADX: 35.04</text>
<text x="264.5" y="546" fill="#00ff00" font-size="12" style='font-family:"Liberation Sans",sans-serif' letter-spacing="-0.15">ADXR: 32.71</text>
<text x="1125.5" y="49.5" fill="#ff3232" font-size="12" text-anchor="end" style='font-family:"Liberation Sans",sans-serif' letter-spacing="-0.2">5.00</text>
<line x1="1081" y1="44.5" x2="1086" y2="44.5" stroke="#b80000" stroke-width="1"/>
<text x="1125.5" y="74.8" fill="#ff3232" font-size="12" text-anchor="end" style='font-family:"Liberation Sans",sans-serif' letter-spacing="-0.2">4.75</text>
<line x1="1081" y1="69.5" x2="1083" y2="69.5" stroke="#b80000" stroke-width="1"/>
<text x="1125.5" y="99.3" fill="#ff3232" font-size="12" text-anchor="end" style='font-family:"Liberation Sans",sans-serif' letter-spacing="-0.2">4.50</text>
<line x1="1081" y1="94.5" x2="1086" y2="94.5" stroke="#b80000" stroke-width="1"/>
<text x="1125.5" y="125.8" fill="#ff3232" font-size="12" text-anchor="end" style='font-family:"Liberation Sans",sans-serif' letter-spacing="-0.2">4.25</text>
<line x1="1081" y1="120.5" x2="1083" y2="120.5" stroke="#b80000" stroke-width="1"/>
<text x="1125.5" y="150.3" fill="#ff3232" font-size="12" text-anchor="end" style='font-family:"Liberation Sans",sans-serif' letter-spacing="-0.2">4.00</text>
<line x1="1081" y1="145.5" x2="1086" y2="145.5" stroke="#b80000" stroke-width="1"/>
<text x="1125.5" y="175.8" fill="#ff3232" font-size="12" text-anchor="end" style='font-family:"Liberation Sans",sans-serif' letter-spacing="-0.2">3.75</text>
<line x1="1081" y1="170.5" x2="1083" y2="170.5" stroke="#b80000" stroke-width="1"/>
<text x="1125.5" y="200.2" fill="#ff3232" font-size="12" text-anchor="end" style='font-family:"Liberation Sans",sans-serif' letter-spacing="-0.2">3.50</text>
<line x1="1081" y1="195.5" x2="1086" y2="195.5" stroke="#b80000" stroke-width="1"/>
<text x="1125.5" y="225.9" fill="#ff3232" font-size="12" text-anchor="end" style='font-family:"Liberation Sans",sans-serif' letter-spacing="-0.2">3.25</text>
<line x1="1081" y1="220.5" x2="1083" y2="220.5" stroke="#b80000" stroke-width="1"/>
<text x="1125.5" y="250.3" fill="#ff3232" font-size="12" text-anchor="end" style='font-family:"Liberation Sans",sans-serif' letter-spacing="-0.2">3.00</text>
<line x1="1081" y1="245.5" x2="1086" y2="245.5" stroke="#b80000" stroke-width="1"/>
<text x="1125.5" y="276.5" fill="#ff3232" font-size="12" text-anchor="end" style='font-family:"Liberation Sans",sans-serif' letter-spacing="-0.2">2.75</text>
<line x1="1081" y1="271.5" x2="1083" y2="271.5" stroke="#b80000" stroke-width="1"/>
<text x="1125.5" y="301.0" fill="#ff3232" font-size="12" text-anchor="end" style='font-family:"Liberation Sans",sans-serif' letter-spacing="-0.2">2.50</text>
<line x1="1081" y1="296.5" x2="1086" y2="296.5" stroke="#b80000" stroke-width="1"/>
<text x="1125.5" y="366.0" fill="#ff3232" font-size="12" text-anchor="end" style='font-family:"Liberation Sans",sans-serif' letter-spacing="-0.2">20000</text>
<line x1="1081" y1="361.5" x2="1086" y2="361.5" stroke="#b80000" stroke-width="1"/>
<text x="1125.5" y="400.0" fill="#ff3232" font-size="12" text-anchor="end" style='font-family:"Liberation Sans",sans-serif' letter-spacing="-0.2">10000</text>
<line x1="1081" y1="395.5" x2="1086" y2="395.5" stroke="#b80000" stroke-width="1"/>
<text x="1125.5" y="474.0" fill="#ff3232" font-size="12" text-anchor="end" style='font-family:"Liberation Sans",sans-serif' letter-spacing="-0.2">0.20</text>
<line x1="1081" y1="469.5" x2="1086" y2="469.5" stroke="#b80000" stroke-width="1"/>
<text x="1125.5" y="505.0" fill="#ff3232" font-size="12" text-anchor="end" style='font-family:"Liberation Sans",sans-serif' letter-spacing="-0.2">0.00</text>
<line x1="1081" y1="500.5" x2="1086" y2="500.5" stroke="#b80000" stroke-width="1"/>
<text x="1125.5" y="558.0" fill="#ff3232" font-size="12" text-anchor="end" style='font-family:"Liberation Sans",sans-serif' letter-spacing="-0.2">90.00</text>
<line x1="1081" y1="553.5" x2="1086" y2="553.5" stroke="#b80000" stroke-width="1"/>
<text x="1125.5" y="585.0" fill="#ff3232" font-size="12" text-anchor="end" style='font-family:"Liberation Sans",sans-serif' letter-spacing="-0.2">60.00</text>
<line x1="1081" y1="580.5" x2="1086" y2="580.5" stroke="#b80000" stroke-width="1"/>
<text x="1125.5" y="611.0" fill="#ff3232" font-size="12" text-anchor="end" style='font-family:"Liberation Sans",sans-serif' letter-spacing="-0.2">30.00</text>
<line x1="1081" y1="606.5" x2="1086" y2="606.5" stroke="#b80000" stroke-width="1"/>
<line x1="1081" y1="378.5" x2="1083" y2="378.5" stroke="#b80000" stroke-width="1"/>
<line x1="1081" y1="412.5" x2="1083" y2="412.5" stroke="#b80000" stroke-width="1"/>
<line x1="1081" y1="453.5" x2="1083" y2="453.5" stroke="#b80000" stroke-width="1"/>
<line x1="1081" y1="485.5" x2="1083" y2="485.5" stroke="#b80000" stroke-width="1"/>
<line x1="1081" y1="516.5" x2="1083" y2="516.5" stroke="#b80000" stroke-width="1"/>
<line x1="1081" y1="567.5" x2="1083" y2="567.5" stroke="#b80000" stroke-width="1"/>
<line x1="1081" y1="593.5" x2="1083" y2="593.5" stroke="#b80000" stroke-width="1"/>
<line x1="1081" y1="620.5" x2="1083" y2="620.5" stroke="#b80000" stroke-width="1"/>
<rect x="1080.5" y="416.5" width="33" height="15" fill="none" stroke="#b80000" stroke-width="1"/>
<text x="1084" y="427.8" fill="#ff3232" font-size="12" style='font-family:"Liberation Sans",sans-serif' letter-spacing="0.3">X100</text>
<rect x="1081" y="534" width="50" height="101" fill="none" stroke="#b80000" stroke-width="2"/>
<rect x="1081" y="71" width="50" height="15" fill="#000080"/>
<line x1="1080" y1="70.5" x2="1131" y2="70.5" stroke="#b80000" stroke-width="1"/>
<line x1="1080" y1="86.5" x2="1131" y2="86.5" stroke="#b80000" stroke-width="1"/>
<text x="1082" y="82" fill="#dcdcd4" font-size="12" style='font-family:"Liberation Sans",sans-serif' letter-spacing="0">4.58</text>
<text x="1104.5" y="647.5" fill="#e0e0e0" font-size="12" text-anchor="middle" style='font-family:"Liberation Sans","Noto Sans CJK SC",sans-serif'>日线</text>
<line x1="1105.5" y1="652" x2="1105.5" y2="668" stroke="#b80000" stroke-width="1"/>
<text x="1093" y="664.5" fill="#c0c0c0" font-size="12" text-anchor="middle" style='font-family:"Liberation Sans",sans-serif'>+</text>
<text x="1118.5" y="664" fill="#c0c0c0" font-size="12" text-anchor="middle" style='font-family:"Liberation Sans",sans-serif'>−</text>
<path d="M1047.5 34.5 L1052.5 29.5 L1057.5 34.5 L1052.5 39.5 Z" fill="none" stroke="#767676" shape-rendering="auto"/>
<rect x="1065.5" y="29.5" width="11" height="10" rx="2" fill="none" stroke="#6e6e6e" shape-rendering="auto"/>
<rect x="1072" y="31" width="3" height="7" fill="#7c7c7c"/>
<text x="1212" y="23" fill="#ffff00" font-size="14" text-anchor="end" font-weight="bold" style='font-family:"Liberation Sans",sans-serif' letter-spacing="0.2">002418</text>
<text x="1217" y="23.5" fill="#ffff00" font-size="16" font-weight="500" style='font-family:"Liberation Serif","Noto Serif CJK SC",serif'>康盛股份</text>
<text x="1134" y="46" fill="#c0c0c0" font-size="16" font-weight="500" style='font-family:"Liberation Serif","Noto Serif CJK SC",serif'>委比</text>
<text x="1247.5" y="45" fill="#00ff00" font-size="14" text-anchor="end" font-weight="bold" style='font-family:"Liberation Sans",sans-serif' letter-spacing="0.2">-44.72%</text>
<text x="1250" y="46" fill="#c0c0c0" font-size="16" font-weight="500" style='font-family:"Liberation Serif","Noto Serif CJK SC",serif'>委差</text>
<text x="1364" y="45" fill="#00ff00" font-size="14" text-anchor="end" font-weight="bold" style='font-family:"Liberation Sans",sans-serif' letter-spacing="0.2">-17639</text>
<text x="1134" y="67" fill="#c0c0c0" font-size="16" font-weight="500" style='font-family:"Liberation Serif","Noto Serif CJK SC",serif'>卖五</text>
<text x="1247.5" y="66" fill="#ff3232" font-size="14" text-anchor="end" font-weight="bold" style='font-family:"Liberation Sans",sans-serif' letter-spacing="0.2">3.03</text>
<text x="1364" y="66" fill="#d8d820" font-size="14" text-anchor="end" font-weight="bold" style='font-family:"Liberation Sans",sans-serif' letter-spacing="0.2">2755</text>
<text x="1134" y="86" fill="#c0c0c0" font-size="16" font-weight="500" style='font-family:"Liberation Serif","Noto Serif CJK SC",serif'>卖四</text>
<text x="1247.5" y="85" fill="#ff3232" font-size="14" text-anchor="end" font-weight="bold" style='font-family:"Liberation Sans",sans-serif' letter-spacing="0.2">3.02</text>
<text x="1364" y="85" fill="#d8d820" font-size="14" text-anchor="end" font-weight="bold" style='font-family:"Liberation Sans",sans-serif' letter-spacing="0.2">2654</text>
<text x="1134" y="105" fill="#c0c0c0" font-size="16" font-weight="500" style='font-family:"Liberation Serif","Noto Serif CJK SC",serif'>卖三</text>
<text x="1247.5" y="104" fill="#ff3232" font-size="14" text-anchor="end" font-weight="bold" style='font-family:"Liberation Sans",sans-serif' letter-spacing="0.2">3.01</text>
<text x="1364" y="104" fill="#d8d820" font-size="14" text-anchor="end" font-weight="bold" style='font-family:"Liberation Sans",sans-serif' letter-spacing="0.2">2230</text>
<text x="1134" y="124" fill="#c0c0c0" font-size="16" font-weight="500" style='font-family:"Liberation Serif","Noto Serif CJK SC",serif'>卖二</text>
<text x="1247.5" y="123" fill="#ff3232" font-size="14" text-anchor="end" font-weight="bold" style='font-family:"Liberation Sans",sans-serif' letter-spacing="0.2">3.00</text>
<text x="1364" y="123" fill="#d8d820" font-size="14" text-anchor="end" font-weight="bold" style='font-family:"Liberation Sans",sans-serif' letter-spacing="0.2">13534</text>
<text x="1134" y="143" fill="#c0c0c0" font-size="16" font-weight="500" style='font-family:"Liberation Serif","Noto Serif CJK SC",serif'>卖一</text>
<text x="1247.5" y="142" fill="#ff3232" font-size="14" text-anchor="end" font-weight="bold" style='font-family:"Liberation Sans",sans-serif' letter-spacing="0.2">2.99</text>
<text x="1364" y="142" fill="#d8d820" font-size="14" text-anchor="end" font-weight="bold" style='font-family:"Liberation Sans",sans-serif' letter-spacing="0.2">7366</text>
<text x="1134" y="163.5" fill="#c0c0c0" font-size="16" font-weight="500" style='font-family:"Liberation Serif","Noto Serif CJK SC",serif'>买一</text>
<text x="1247.5" y="162.5" fill="#ff3232" font-size="14" text-anchor="end" font-weight="bold" style='font-family:"Liberation Sans",sans-serif' letter-spacing="0.2">2.98</text>
<text x="1364" y="162.5" fill="#d8d820" font-size="14" text-anchor="end" font-weight="bold" style='font-family:"Liberation Sans",sans-serif' letter-spacing="0.2">4152</text>
<text x="1134" y="182.5" fill="#c0c0c0" font-size="16" font-weight="500" style='font-family:"Liberation Serif","Noto Serif CJK SC",serif'>买二</text>
<text x="1247.5" y="181.5" fill="#ff3232" font-size="14" text-anchor="end" font-weight="bold" style='font-family:"Liberation Sans",sans-serif' letter-spacing="0.2">2.97</text>
<text x="1364" y="181.5" fill="#d8d820" font-size="14" text-anchor="end" font-weight="bold" style='font-family:"Liberation Sans",sans-serif' letter-spacing="0.2">1002</text>
<text x="1134" y="201.5" fill="#c0c0c0" font-size="16" font-weight="500" style='font-family:"Liberation Serif","Noto Serif CJK SC",serif'>买三</text>
<text x="1247.5" y="200.5" fill="#ff3232" font-size="14" text-anchor="end" font-weight="bold" style='font-family:"Liberation Sans",sans-serif' letter-spacing="0.2">2.96</text>
<text x="1364" y="200.5" fill="#d8d820" font-size="14" text-anchor="end" font-weight="bold" style='font-family:"Liberation Sans",sans-serif' letter-spacing="0.2">2775</text>
<text x="1134" y="220.5" fill="#c0c0c0" font-size="16" font-weight="500" style='font-family:"Liberation Serif","Noto Serif CJK SC",serif'>买四</text>
<text x="1247.5" y="219.5" fill="#ff3232" font-size="14" text-anchor="end" font-weight="bold" style='font-family:"Liberation Sans",sans-serif' letter-spacing="0.2">2.95</text>
<text x="1364" y="219.5" fill="#d8d820" font-size="14" text-anchor="end" font-weight="bold" style='font-family:"Liberation Sans",sans-serif' letter-spacing="0.2">1406</text>
<text x="1134" y="239.5" fill="#c0c0c0" font-size="16" font-weight="500" style='font-family:"Liberation Serif","Noto Serif CJK SC",serif'>买五</text>
<text x="1247.5" y="238.5" fill="#ff3232" font-size="14" text-anchor="end" font-weight="bold" style='font-family:"Liberation Sans",sans-serif' letter-spacing="0.2">2.94</text>
<text x="1364" y="238.5" fill="#d8d820" font-size="14" text-anchor="end" font-weight="bold" style='font-family:"Liberation Sans",sans-serif' letter-spacing="0.2">1565</text>
<text x="1134" y="261" fill="#c0c0c0" font-size="16" font-weight="500" style='font-family:"Liberation Serif","Noto Serif CJK SC",serif'>现价</text>
<text x="1247.5" y="260" fill="#ff3232" font-size="14" text-anchor="end" font-weight="bold" style='font-family:"Liberation Sans",sans-serif' letter-spacing="0.2">2.99</text>
<text x="1250" y="261" fill="#c0c0c0" font-size="16" font-weight="500" style='font-family:"Liberation Serif","Noto Serif CJK SC",serif'>今开</text>
<text x="1364" y="260" fill="#ff3232" font-size="14" text-anchor="end" font-weight="bold" style='font-family:"Liberation Sans",sans-serif' letter-spacing="0.2">2.83</text>
<text x="1134" y="280" fill="#c0c0c0" font-size="16" font-weight="500" style='font-family:"Liberation Serif","Noto Serif CJK SC",serif'>涨跌</text>
<text x="1247.5" y="279" fill="#ff3232" font-size="14" text-anchor="end" font-weight="bold" style='font-family:"Liberation Sans",sans-serif' letter-spacing="0.2">0.17</text>
<text x="1250" y="280" fill="#c0c0c0" font-size="16" font-weight="500" style='font-family:"Liberation Serif","Noto Serif CJK SC",serif'>最高</text>
<text x="1364" y="279" fill="#ff3232" font-size="14" text-anchor="end" font-weight="bold" style='font-family:"Liberation Sans",sans-serif' letter-spacing="0.2">3.06</text>
<text x="1134" y="299" fill="#c0c0c0" font-size="16" font-weight="500" style='font-family:"Liberation Serif","Noto Serif CJK SC",serif'>涨幅</text>
<text x="1247.5" y="298" fill="#ff3232" font-size="14" text-anchor="end" font-weight="bold" style='font-family:"Liberation Sans",sans-serif' letter-spacing="0.2">6.03%</text>
<text x="1250" y="299" fill="#c0c0c0" font-size="16" font-weight="500" style='font-family:"Liberation Serif","Noto Serif CJK SC",serif'>最低</text>
<text x="1364" y="298" fill="#00ff00" font-size="14" text-anchor="end" font-weight="bold" style='font-family:"Liberation Sans",sans-serif' letter-spacing="0.2">2.80</text>
<text x="1134" y="318" fill="#c0c0c0" font-size="16" font-weight="500" style='font-family:"Liberation Serif","Noto Serif CJK SC",serif'>总量</text>
<text x="1247.5" y="317" fill="#d8d820" font-size="14" text-anchor="end" font-weight="bold" style='font-family:"Liberation Sans",sans-serif' letter-spacing="0.2">484642</text>
<text x="1250" y="318" fill="#c0c0c0" font-size="16" font-weight="500" style='font-family:"Liberation Serif","Noto Serif CJK SC",serif'>量比</text>
<text x="1364" y="317" fill="#ff00ff" font-size="14" text-anchor="end" font-weight="bold" style='font-family:"Liberation Sans",sans-serif' letter-spacing="0.2">4.18</text>
<text x="1134" y="337" fill="#c0c0c0" font-size="16" font-weight="500" style='font-family:"Liberation Serif","Noto Serif CJK SC",serif'>外盘</text>
<text x="1247.5" y="336" fill="#ff3232" font-size="14" text-anchor="end" font-weight="bold" style='font-family:"Liberation Sans",sans-serif' letter-spacing="0.2">275326</text>
<text x="1250" y="337" fill="#c0c0c0" font-size="16" font-weight="500" style='font-family:"Liberation Serif","Noto Serif CJK SC",serif'>内盘</text>
<text x="1364" y="336" fill="#00ff00" font-size="14" text-anchor="end" font-weight="bold" style='font-family:"Liberation Sans",sans-serif' letter-spacing="0.2">209316</text>
<text x="1134" y="358" fill="#c0c0c0" font-size="16" font-weight="500" style='font-family:"Liberation Serif","Noto Serif CJK SC",serif'>换手</text>
<text x="1247.5" y="357" fill="#c0c0c0" font-size="14" text-anchor="end" font-weight="bold" style='font-family:"Liberation Sans",sans-serif' letter-spacing="0.2">4.27%</text>
<text x="1250" y="358" fill="#c0c0c0" font-size="16" font-weight="500" style='font-family:"Liberation Serif","Noto Serif CJK SC",serif'>股本</text>
<text x="1349" y="357" fill="#c0c0c0" font-size="14" text-anchor="end" font-weight="bold" style='font-family:"Liberation Sans",sans-serif' letter-spacing="0.2">11.4</text>
<text x="1349" y="358" fill="#c0c0c0" font-size="16" font-weight="500" style='font-family:"Liberation Serif","Noto Serif CJK SC",serif'>亿</text>
<text x="1134" y="377" fill="#c0c0c0" font-size="16" font-weight="500" style='font-family:"Liberation Serif","Noto Serif CJK SC",serif'>净资</text>
<text x="1247.5" y="376" fill="#c0c0c0" font-size="14" text-anchor="end" font-weight="bold" style='font-family:"Liberation Sans",sans-serif' letter-spacing="0.2">1.32</text>
<text x="1250" y="377" fill="#c0c0c0" font-size="16" font-weight="500" style='font-family:"Liberation Serif","Noto Serif CJK SC",serif'>流通</text>
<text x="1349" y="376" fill="#c0c0c0" font-size="14" text-anchor="end" font-weight="bold" style='font-family:"Liberation Sans",sans-serif' letter-spacing="0.2">11.4</text>
<text x="1349" y="377" fill="#c0c0c0" font-size="16" font-weight="500" style='font-family:"Liberation Serif","Noto Serif CJK SC",serif'>亿</text>
<text x="1134" y="396" fill="#c0c0c0" font-size="16" font-weight="500" style='font-family:"Liberation Serif","Noto Serif CJK SC",serif'>收益㈠</text>
<text x="1247.5" y="395" fill="#c0c0c0" font-size="14" text-anchor="end" font-weight="bold" style='font-family:"Liberation Sans",sans-serif' letter-spacing="0.2">0.006</text>
<text x="1251" y="395" fill="#c0c0c0" font-size="14" font-weight="bold" style='font-family:"Liberation Sans",sans-serif'>PE(</text>
<text x="1274" y="396" fill="#c0c0c0" font-size="16" font-weight="500" style='font-family:"Liberation Serif","Noto Serif CJK SC",serif'>动</text>
<text x="1290" y="395" fill="#c0c0c0" font-size="14" font-weight="bold" style='font-family:"Liberation Sans",sans-serif'>)</text>
<text x="1364" y="395" fill="#c0c0c0" font-size="14" text-anchor="end" font-weight="bold" style='font-family:"Liberation Sans",sans-serif' letter-spacing="0.2">122.9</text>
<text x="1133" y="418" fill="#c0c0c0" font-size="12" style='font-family:"Liberation Sans","Noto Sans CJK SC",sans-serif'>康盛股份</text>
<line x1="1131" y1="423.5" x2="1314" y2="423.5" stroke="#b80000" stroke-width="1"/>
<line x1="1314.5" y1="423" x2="1314.5" y2="658" stroke="#b80000" stroke-width="1"/>
<line x1="1131" y1="658.5" x2="1365" y2="658.5" stroke="#b80000" stroke-width="1"/>
<line x1="1222.5" y1="423" x2="1222.5" y2="658" stroke="#b80000" stroke-width="1"/>
<line x1="1177.5" y1="424" x2="1177.5" y2="658" stroke="#c00000" stroke-width="1" stroke-dasharray="1 3"/>
<line x1="1269.5" y1="424" x2="1269.5" y2="658" stroke="#c00000" stroke-width="1" stroke-dasharray="1 3"/>
<line x1="1131" y1="443.5" x2="1314" y2="443.5" stroke="#c00000" stroke-width="1" stroke-dasharray="1 3"/>
<line x1="1131" y1="463.5" x2="1314" y2="463.5" stroke="#c00000" stroke-width="1" stroke-dasharray="1 3"/>
<line x1="1131" y1="482.5" x2="1314" y2="482.5" stroke="#c00000" stroke-width="1" stroke-dasharray="1 3"/>
<line x1="1131" y1="521.5" x2="1314" y2="521.5" stroke="#c00000" stroke-width="1" stroke-dasharray="1 3"/>
<line x1="1131" y1="540.5" x2="1314" y2="540.5" stroke="#c00000" stroke-width="1" stroke-dasharray="1 3"/>
<line x1="1131" y1="560.5" x2="1314" y2="560.5" stroke="#c00000" stroke-width="1" stroke-dasharray="1 3"/>
<line x1="1131" y1="599.5" x2="1314" y2="599.5" stroke="#c00000" stroke-width="1" stroke-dasharray="1 3"/>
<line x1="1131" y1="618.5" x2="1314" y2="618.5" stroke="#c00000" stroke-width="1" stroke-dasharray="1 3"/>
<line x1="1131" y1="638.5" x2="1314" y2="638.5" stroke="#c00000" stroke-width="1" stroke-dasharray="1 3"/>
<line x1="1131" y1="502.5" x2="1314" y2="502.5" stroke="#b80000" stroke-width="1"/>
<line x1="1131" y1="580.5" x2="1314" y2="580.5" stroke="#b80000" stroke-width="1"/>
<text x="1318" y="427.8" fill="#ff3232" font-size="12" style='font-family:"Liberation Sans",sans-serif' letter-spacing="0.2">3.06</text>
<text x="1318" y="446.8" fill="#ff3232" font-size="12" style='font-family:"Liberation Sans",sans-serif' letter-spacing="0.2">3.00</text>
<text x="1318" y="466.3" fill="#ff3232" font-size="12" style='font-family:"Liberation Sans",sans-serif' letter-spacing="0.2">2.94</text>
<text x="1318" y="485.8" fill="#ff3232" font-size="12" style='font-family:"Liberation Sans",sans-serif' letter-spacing="0.2">2.88</text>
<text x="1318" y="505.8" fill="#fff" font-size="12" style='font-family:"Liberation Sans",sans-serif' letter-spacing="0.2">2.82</text>
<text x="1318" y="524.8" fill="#00ff00" font-size="12" style='font-family:"Liberation Sans",sans-serif' letter-spacing="0.2">2.76</text>
<text x="1318" y="544.3" fill="#00ff00" font-size="12" style='font-family:"Liberation Sans",sans-serif' letter-spacing="0.2">2.70</text>
<text x="1318" y="563.8" fill="#00ff00" font-size="12" style='font-family:"Liberation Sans",sans-serif' letter-spacing="0.2">2.64</text>
<text x="1318" y="584.8" fill="#d8d820" font-size="12" style='font-family:"Liberation Sans",sans-serif' letter-spacing="0.2">44182</text>
<text x="1318" y="604.5" fill="#d8d820" font-size="12" style='font-family:"Liberation Sans",sans-serif' letter-spacing="0.2">33136</text>
<text x="1318" y="624.3" fill="#d8d820" font-size="12" style='font-family:"Liberation Sans",sans-serif' letter-spacing="0.2">22091</text>
<text x="1318" y="644.0" fill="#d8d820" font-size="12" style='font-family:"Liberation Sans",sans-serif' letter-spacing="0.2">11045</text>
<text x="1145.5" y="682.5" fill="#c0c0c0" font-size="12" text-anchor="middle" style='font-family:"Liberation Sans","Noto Sans CJK SC",sans-serif'>笔</text>
<line x1="1159.5" y1="669" x2="1159.5" y2="686" stroke="#b80000" stroke-width="1"/>
<text x="1174.0" y="682.5" fill="#c0c0c0" font-size="12" text-anchor="middle" style='font-family:"Liberation Sans","Noto Sans CJK SC",sans-serif'>价</text>
<line x1="1188.5" y1="669" x2="1188.5" y2="686" stroke="#b80000" stroke-width="1"/>
<text x="1203.0" y="682.5" fill="#c0c0c0" font-size="12" text-anchor="middle" style='font-family:"Liberation Sans","Noto Sans CJK SC",sans-serif'>细</text>
<line x1="1217.5" y1="669" x2="1217.5" y2="686" stroke="#b80000" stroke-width="1"/>
<text x="1232.0" y="682.5" fill="#54fcfc" font-size="12" text-anchor="middle" style='font-family:"Liberation Sans","Noto Sans CJK SC",sans-serif'>势</text>
<line x1="1246.5" y1="669" x2="1246.5" y2="686" stroke="#b80000" stroke-width="1"/>
<text x="1261.0" y="682.5" fill="#c0c0c0" font-size="12" text-anchor="middle" style='font-family:"Liberation Sans","Noto Sans CJK SC",sans-serif'>联</text>
<line x1="1275.5" y1="669" x2="1275.5" y2="686" stroke="#b80000" stroke-width="1"/>
<text x="1290.0" y="682.5" fill="#c0c0c0" font-size="12" text-anchor="middle" style='font-family:"Liberation Sans","Noto Sans CJK SC",sans-serif'>值</text>
<line x1="1304.5" y1="669" x2="1304.5" y2="686" stroke="#b80000" stroke-width="1"/>
<text x="1319.0" y="682.5" fill="#c0c0c0" font-size="12" text-anchor="middle" style='font-family:"Liberation Sans","Noto Sans CJK SC",sans-serif'>主</text>
<line x1="1333.5" y1="669" x2="1333.5" y2="686" stroke="#b80000" stroke-width="1"/>
<text x="1349.5" y="682.5" fill="#c0c0c0" font-size="12" text-anchor="middle" style='font-family:"Liberation Sans","Noto Sans CJK SC",sans-serif'>筹</text>
<line x1="1031.5" y1="669" x2="1031.5" y2="686" stroke="#b80000" stroke-width="1"/>
<line x1="1080.5" y1="669" x2="1080.5" y2="686" stroke="#b80000" stroke-width="1"/>
<text x="1033" y="682.5" fill="#d8d820" font-size="12" style='font-family:"Liberation Sans","Noto Sans CJK SC",sans-serif'>图文F10</text>
<text x="1082" y="682.5" fill="#d8d820" font-size="12" style='font-family:"Liberation Sans","Noto Sans CJK SC",sans-serif'>侧边栏《</text>
<text x="1" y="647.5" fill="#ff3232" font-size="12" style='font-family:"Liberation Sans","Noto Sans CJK SC",sans-serif'>2021年</text>
<line x1="43.5" y1="636" x2="43.5" y2="651" stroke="#b80000" stroke-width="1"/>
<text x="45" y="647.5" fill="#ff3232" font-size="12" style='font-family:"Liberation Sans",sans-serif'>11</text>
<line x1="91.5" y1="636" x2="91.5" y2="651" stroke="#b80000" stroke-width="1"/>
<text x="93" y="647.5" fill="#ff3232" font-size="12" style='font-family:"Liberation Sans",sans-serif'>12</text>
<line x1="138.5" y1="636" x2="138.5" y2="651" stroke="#b80000" stroke-width="1"/>
<text x="140" y="647.5" fill="#ff3232" font-size="12" style='font-family:"Liberation Sans",sans-serif'>1</text>
<line x1="179.5" y1="636" x2="179.5" y2="651" stroke="#b80000" stroke-width="1"/>
<text x="181" y="647.5" fill="#ff3232" font-size="12" style='font-family:"Liberation Sans",sans-serif'>2</text>
<line x1="212.5" y1="636" x2="212.5" y2="651" stroke="#b80000" stroke-width="1"/>
<text x="214" y="647.5" fill="#ff3232" font-size="12" style='font-family:"Liberation Sans",sans-serif'>3</text>
<line x1="261.5" y1="636" x2="261.5" y2="651" stroke="#b80000" stroke-width="1"/>
<text x="263" y="647.5" fill="#ff3232" font-size="12" style='font-family:"Liberation Sans",sans-serif'>4</text>
<line x1="301.5" y1="636" x2="301.5" y2="651" stroke="#b80000" stroke-width="1"/>
<text x="303" y="647.5" fill="#ff3232" font-size="12" style='font-family:"Liberation Sans",sans-serif'>5</text>
<line x1="341.5" y1="636" x2="341.5" y2="651" stroke="#b80000" stroke-width="1"/>
<text x="343" y="647.5" fill="#ff3232" font-size="12" style='font-family:"Liberation Sans",sans-serif'>6</text>
<line x1="385.5" y1="636" x2="385.5" y2="651" stroke="#b80000" stroke-width="1"/>
<text x="387" y="647.5" fill="#ff3232" font-size="12" style='font-family:"Liberation Sans",sans-serif'>7</text>
<line x1="429.5" y1="636" x2="429.5" y2="651" stroke="#b80000" stroke-width="1"/>
<text x="431" y="647.5" fill="#ff3232" font-size="12" style='font-family:"Liberation Sans",sans-serif'>8</text>
<line x1="477.5" y1="636" x2="477.5" y2="651" stroke="#b80000" stroke-width="1"/>
<text x="479" y="647.5" fill="#ff3232" font-size="12" style='font-family:"Liberation Sans",sans-serif'>9</text>
<line x1="522.5" y1="636" x2="522.5" y2="651" stroke="#b80000" stroke-width="1"/>
<text x="524" y="647.5" fill="#ff3232" font-size="12" style='font-family:"Liberation Sans",sans-serif'>10</text>
<line x1="555.5" y1="636" x2="555.5" y2="651" stroke="#b80000" stroke-width="1"/>
<text x="557" y="647.5" fill="#ff3232" font-size="12" style='font-family:"Liberation Sans",sans-serif'>11</text>
<line x1="602.5" y1="636" x2="602.5" y2="651" stroke="#b80000" stroke-width="1"/>
<text x="604" y="647.5" fill="#ff3232" font-size="12" style='font-family:"Liberation Sans",sans-serif'>12</text>
<line x1="649.5" y1="636" x2="649.5" y2="651" stroke="#b80000" stroke-width="1"/>
<text x="651" y="647.5" fill="#ff3232" font-size="12" style='font-family:"Liberation Sans",sans-serif'>1</text>
<line x1="682.5" y1="636" x2="682.5" y2="651" stroke="#b80000" stroke-width="1"/>
<text x="684" y="647.5" fill="#ff3232" font-size="12" style='font-family:"Liberation Sans",sans-serif'>2</text>
<line x1="724.5" y1="636" x2="724.5" y2="651" stroke="#b80000" stroke-width="1"/>
<text x="726" y="647.5" fill="#ff3232" font-size="12" style='font-family:"Liberation Sans",sans-serif'>3</text>
<line x1="772.5" y1="636" x2="772.5" y2="651" stroke="#b80000" stroke-width="1"/>
<text x="774" y="647.5" fill="#ff3232" font-size="12" style='font-family:"Liberation Sans",sans-serif'>4</text>
<line x1="812.5" y1="636" x2="812.5" y2="651" stroke="#b80000" stroke-width="1"/>
<text x="814" y="647.5" fill="#ff3232" font-size="12" style='font-family:"Liberation Sans",sans-serif'>5</text>
<line x1="855.5" y1="636" x2="855.5" y2="651" stroke="#b80000" stroke-width="1"/>
<text x="857" y="647.5" fill="#ff3232" font-size="12" style='font-family:"Liberation Sans",sans-serif'>6</text>
<line x1="5.5" y1="636" x2="5.5" y2="638" stroke="#b80000" stroke-width="1"/>
<line x1="15.5" y1="636" x2="15.5" y2="638" stroke="#b80000" stroke-width="1"/>
<line x1="25.5" y1="636" x2="25.5" y2="638" stroke="#b80000" stroke-width="1"/>
<line x1="35.5" y1="636" x2="35.5" y2="638" stroke="#b80000" stroke-width="1"/>
<line x1="45.5" y1="636" x2="45.5" y2="638" stroke="#b80000" stroke-width="1"/>
<line x1="55.5" y1="636" x2="55.5" y2="638" stroke="#b80000" stroke-width="1"/>
<line x1="65.5" y1="636" x2="65.5" y2="638" stroke="#b80000" stroke-width="1"/>
<line x1="75.5" y1="636" x2="75.5" y2="638" stroke="#b80000" stroke-width="1"/>
<line x1="85.5" y1="636" x2="85.5" y2="638" stroke="#b80000" stroke-width="1"/>
<line x1="95.5" y1="636" x2="95.5" y2="638" stroke="#b80000" stroke-width="1"/>
<line x1="105.5" y1="636" x2="105.5" y2="638" stroke="#b80000" stroke-width="1"/>
<line x1="115.5" y1="636" x2="115.5" y2="638" stroke="#b80000" stroke-width="1"/>
<line x1="125.5" y1="636" x2="125.5" y2="638" stroke="#b80000" stroke-width="1"/>
<line x1="135.5" y1="636" x2="135.5" y2="638" stroke="#b80000" stroke-width="1"/>
<line x1="145.5" y1="636" x2="145.5" y2="638" stroke="#b80000" stroke-width="1"/>
<line x1="155.5" y1="636" x2="155.5" y2="638" stroke="#b80000" stroke-width="1"/>
<line x1="165.5" y1="636" x2="165.5" y2="638" stroke="#b80000" stroke-width="1"/>
<line x1="175.5" y1="636" x2="175.5" y2="638" stroke="#b80000" stroke-width="1"/>
<line x1="185.5" y1="636" x2="185.5" y2="638" stroke="#b80000" stroke-width="1"/>
<line x1="195.5" y1="636" x2="195.5" y2="638" stroke="#b80000" stroke-width="1"/>
<line x1="205.5" y1="636" x2="205.5" y2="638" stroke="#b80000" stroke-width="1"/>
<line x1="215.5" y1="636" x2="215.5" y2="638" stroke="#b80000" stroke-width="1"/>
<line x1="225.5" y1="636" x2="225.5" y2="638" stroke="#b80000" stroke-width="1"/>
<line x1="235.5" y1="636" x2="235.5" y2="638" stroke="#b80000" stroke-width="1"/>
<line x1="245.5" y1="636" x2="245.5" y2="638" stroke="#b80000" stroke-width="1"/>
<line x1="255.5" y1="636" x2="255.5" y2="638" stroke="#b80000" stroke-width="1"/>
<line x1="265.5" y1="636" x2="265.5" y2="638" stroke="#b80000" stroke-width="1"/>
<line x1="275.5" y1="636" x2="275.5" y2="638" stroke="#b80000" stroke-width="1"/>
<line x1="285.5" y1="636" x2="285.5" y2="638" stroke="#b80000" stroke-width="1"/>
<line x1="295.5" y1="636" x2="295.5" y2="638" stroke="#b80000" stroke-width="1"/>
<line x1="305.5" y1="636" x2="305.5" y2="638" stroke="#b80000" stroke-width="1"/>
<line x1="315.5" y1="636" x2="315.5" y2="638" stroke="#b80000" stroke-width="1"/>
<line x1="325.5" y1="636" x2="325.5" y2="638" stroke="#b80000" stroke-width="1"/>
<line x1="335.5" y1="636" x2="335.5" y2="638" stroke="#b80000" stroke-width="1"/>
<line x1="345.5" y1="636" x2="345.5" y2="638" stroke="#b80000" stroke-width="1"/>
<line x1="355.5" y1="636" x2="355.5" y2="638" stroke="#b80000" stroke-width="1"/>
<line x1="365.5" y1="636" x2="365.5" y2="638" stroke="#b80000" stroke-width="1"/>
<line x1="375.5" y1="636" x2="375.5" y2="638" stroke="#b80000" stroke-width="1"/>
<line x1="385.5" y1="636" x2="385.5" y2="638" stroke="#b80000" stroke-width="1"/>
<line x1="395.5" y1="636" x2="395.5" y2="638" stroke="#b80000" stroke-width="1"/>
<line x1="405.5" y1="636" x2="405.5" y2="638" stroke="#b80000" stroke-width="1"/>
<line x1="415.5" y1="636" x2="415.5" y2="638" stroke="#b80000" stroke-width="1"/>
<line x1="425.5" y1="636" x2="425.5" y2="638" stroke="#b80000" stroke-width="1"/>
<line x1="435.5" y1="636" x2="435.5" y2="638" stroke="#b80000" stroke-width="1"/>
<line x1="445.5" y1="636" x2="445.5" y2="638" stroke="#b80000" stroke-width="1"/>
<line x1="455.5" y1="636" x2="455.5" y2="638" stroke="#b80000" stroke-width="1"/>
<line x1="465.5" y1="636" x2="465.5" y2="638" stroke="#b80000" stroke-width="1"/>
<line x1="475.5" y1="636" x2="475.5" y2="638" stroke="#b80000" stroke-width="1"/>
<line x1="485.5" y1="636" x2="485.5" y2="638" stroke="#b80000" stroke-width="1"/>
<line x1="495.5" y1="636" x2="495.5" y2="638" stroke="#b80000" stroke-width="1"/>
<line x1="505.5" y1="636" x2="505.5" y2="638" stroke="#b80000" stroke-width="1"/>
<line x1="515.5" y1="636" x2="515.5" y2="638" stroke="#b80000" stroke-width="1"/>
<line x1="525.5" y1="636" x2="525.5" y2="638" stroke="#b80000" stroke-width="1"/>
<line x1="535.5" y1="636" x2="535.5" y2="638" stroke="#b80000" stroke-width="1"/>
<line x1="545.5" y1="636" x2="545.5" y2="638" stroke="#b80000" stroke-width="1"/>
<line x1="555.5" y1="636" x2="555.5" y2="638" stroke="#b80000" stroke-width="1"/>
<line x1="565.5" y1="636" x2="565.5" y2="638" stroke="#b80000" stroke-width="1"/>
<line x1="575.5" y1="636" x2="575.5" y2="638" stroke="#b80000" stroke-width="1"/>
<line x1="585.5" y1="636" x2="585.5" y2="638" stroke="#b80000" stroke-width="1"/>
<line x1="595.5" y1="636" x2="595.5" y2="638" stroke="#b80000" stroke-width="1"/>
<line x1="605.5" y1="636" x2="605.5" y2="638" stroke="#b80000" stroke-width="1"/>
<line x1="615.5" y1="636" x2="615.5" y2="638" stroke="#b80000" stroke-width="1"/>
<line x1="625.5" y1="636" x2="625.5" y2="638" stroke="#b80000" stroke-width="1"/>
<line x1="635.5" y1="636" x2="635.5" y2="638" stroke="#b80000" stroke-width="1"/>
<line x1="645.5" y1="636" x2="645.5" y2="638" stroke="#b80000" stroke-width="1"/>
<line x1="655.5" y1="636" x2="655.5" y2="638" stroke="#b80000" stroke-width="1"/>
<line x1="665.5" y1="636" x2="665.5" y2="638" stroke="#b80000" stroke-width="1"/>
<line x1="675.5" y1="636" x2="675.5" y2="638" stroke="#b80000" stroke-width="1"/>
<line x1="685.5" y1="636" x2="685.5" y2="638" stroke="#b80000" stroke-width="1"/>
<line x1="695.5" y1="636" x2="695.5" y2="638" stroke="#b80000" stroke-width="1"/>
<line x1="705.5" y1="636" x2="705.5" y2="638" stroke="#b80000" stroke-width="1"/>
<line x1="715.5" y1="636" x2="715.5" y2="638" stroke="#b80000" stroke-width="1"/>
<line x1="725.5" y1="636" x2="725.5" y2="638" stroke="#b80000" stroke-width="1"/>
<line x1="735.5" y1="636" x2="735.5" y2="638" stroke="#b80000" stroke-width="1"/>
<line x1="745.5" y1="636" x2="745.5" y2="638" stroke="#b80000" stroke-width="1"/>
<line x1="755.5" y1="636" x2="755.5" y2="638" stroke="#b80000" stroke-width="1"/>
<line x1="765.5" y1="636" x2="765.5" y2="638" stroke="#b80000" stroke-width="1"/>
<line x1="775.5" y1="636" x2="775.5" y2="638" stroke="#b80000" stroke-width="1"/>
<line x1="785.5" y1="636" x2="785.5" y2="638" stroke="#b80000" stroke-width="1"/>
<line x1="795.5" y1="636" x2="795.5" y2="638" stroke="#b80000" stroke-width="1"/>
<line x1="805.5" y1="636" x2="805.5" y2="638" stroke="#b80000" stroke-width="1"/>
<line x1="815.5" y1="636" x2="815.5" y2="638" stroke="#b80000" stroke-width="1"/>
<line x1="825.5" y1="636" x2="825.5" y2="638" stroke="#b80000" stroke-width="1"/>
<line x1="835.5" y1="636" x2="835.5" y2="638" stroke="#b80000" stroke-width="1"/>
<line x1="845.5" y1="636" x2="845.5" y2="638" stroke="#b80000" stroke-width="1"/>
<line x1="855.5" y1="636" x2="855.5" y2="638" stroke="#b80000" stroke-width="1"/>
<line x1="865.5" y1="636" x2="865.5" y2="638" stroke="#b80000" stroke-width="1"/>
<line x1="875.5" y1="636" x2="875.5" y2="638" stroke="#b80000" stroke-width="1"/>
<line x1="885.5" y1="636" x2="885.5" y2="638" stroke="#b80000" stroke-width="1"/>
<rect x="1033" y="636" width="14" height="15" fill="#000080"/>
<line x1="1032.5" y1="636" x2="1032.5" y2="651" stroke="#b80000" stroke-width="1"/>
<line x1="1047.5" y1="636" x2="1047.5" y2="651" stroke="#b80000" stroke-width="1"/>
<text x="1033.5" y="647" fill="#e0e0e0" font-size="12" style='font-family:"Liberation Sans",sans-serif'>--</text>
<line x1="42.5" y1="652" x2="42.5" y2="668" stroke="#b80000" stroke-width="1"/>
<text x="21.5" y="664.5" fill="#c0c0c0" font-size="12" text-anchor="middle" style='font-family:"Liberation Sans","Noto Sans CJK SC",sans-serif'>指标A</text>
<line x1="83.5" y1="652" x2="83.5" y2="668" stroke="#b80000" stroke-width="1"/>
<text x="63.0" y="664.5" fill="#c0c0c0" font-size="12" text-anchor="middle" style='font-family:"Liberation Sans","Noto Sans CJK SC",sans-serif'>指标B</text>
<line x1="125.5" y1="652" x2="125.5" y2="668" stroke="#b80000" stroke-width="1"/>
<text x="104.5" y="664.5" fill="#c0c0c0" font-size="12" text-anchor="middle" style='font-family:"Liberation Sans","Noto Sans CJK SC",sans-serif'>模 板</text>
<line x1="157.5" y1="652" x2="157.5" y2="668" stroke="#b80000" stroke-width="1"/>
<text x="141.5" y="664.5" fill="#54fcfc" font-size="12" text-anchor="middle" style='font-family:"Liberation Sans","Noto Sans CJK SC",sans-serif'>管理</text>
<line x1="200.5" y1="652" x2="200.5" y2="668" stroke="#b80000" stroke-width="1"/>
<text x="179.0" y="664.5" fill="#c0c0c0" font-size="12" text-anchor="middle" style='font-family:"Liberation Sans","Noto Sans CJK SC",sans-serif'>另存为</text>
<line x1="245.5" y1="652" x2="245.5" y2="668" stroke="#b80000" stroke-width="1"/>
<text x="223.0" y="664.5" fill="#c0c0c0" font-size="12" text-anchor="middle" style='font-family:"Liberation Sans","Noto Sans CJK SC",sans-serif'>绑定到</text>
<line x1="42.5" y1="669" x2="42.5" y2="686" stroke="#b80000" stroke-width="1"/>
<text x="20.5" y="682.5" fill="#c0c0c0" font-size="12" text-anchor="middle" style='font-family:"Liberation Sans","Noto Sans CJK SC",sans-serif'>扩展∧</text>
<line x1="99.5" y1="669" x2="99.5" y2="686" stroke="#b80000" stroke-width="1"/>
<text x="70.0" y="682.5" fill="#c0c0c0" font-size="12" text-anchor="middle" style='font-family:"Liberation Sans","Noto Sans CJK SC",sans-serif'>关联报价</text>
<line x1="155.5" y1="669" x2="155.5" y2="686" stroke="#b80000" stroke-width="1"/>
<text x="126.5" y="682.5" fill="#c0c0c0" font-size="12" text-anchor="middle" style='font-family:"Liberation Sans","Noto Sans CJK SC",sans-serif'>资金流向</text>
<rect x="0" y="687" width="1365" height="17" fill="#f0f0f0"/>
<text x="1" y="702" fill="#000" font-size="12" style='font-family:"Liberation Sans","Noto Sans CJK SC",sans-serif'>上证</text>
<text x="27.5" y="702" fill="#0f8a0f" font-size="12" font-weight="bold" style='font-family:"Liberation Sans",sans-serif' letter-spacing="0.15">3240.36</text>
<text x="80" y="702" fill="#0f8a0f" font-size="12" font-weight="bold" style='font-family:"Liberation Sans",sans-serif' letter-spacing="0.15">-15.45</text>
<text x="125" y="702" fill="#0f8a0f" font-size="12" font-weight="bold" style='font-family:"Liberation Sans",sans-serif' letter-spacing="0.15">-0.47%</text>
<text x="171" y="702" fill="#000" font-size="11" style='font-family:"Liberation Sans",sans-serif' letter-spacing="0">4332</text>
<text x="195" y="702" fill="#000" font-size="12" style='font-family:"Liberation Sans","Noto Sans CJK SC",sans-serif'>亿</text>
<text x="218" y="702" fill="#000" font-size="12" style='font-family:"Liberation Sans","Noto Sans CJK SC",sans-serif'>深证</text>
<text x="247" y="702" fill="#ff0000" font-size="12" font-weight="bold" style='font-family:"Liberation Sans",sans-serif' letter-spacing="0.15">11305.3</text>
<text x="304.5" y="702" fill="#ff0000" font-size="12" font-weight="bold" style='font-family:"Liberation Sans",sans-serif' letter-spacing="0.15">31.31</text>
<text x="344.5" y="702" fill="#ff0000" font-size="12" font-weight="bold" style='font-family:"Liberation Sans",sans-serif' letter-spacing="0.15">0.28%</text>
<text x="391" y="702" fill="#000" font-size="11" style='font-family:"Liberation Sans",sans-serif' letter-spacing="0">6568</text>
<text x="415" y="702" fill="#000" font-size="12" style='font-family:"Liberation Sans","Noto Sans CJK SC",sans-serif'>亿</text>
<text x="438" y="702" fill="#000" font-size="12" style='font-family:"Liberation Sans","Noto Sans CJK SC",sans-serif'>沪深</text>
<text x="467.5" y="702" fill="#0f8a0f" font-size="12" font-weight="bold" style='font-family:"Liberation Sans",sans-serif' letter-spacing="0.15">3924.24</text>
<text x="524" y="702" fill="#0f8a0f" font-size="12" font-weight="bold" style='font-family:"Liberation Sans",sans-serif' letter-spacing="0.15">-6.67</text>
<text x="565" y="702" fill="#0f8a0f" font-size="12" font-weight="bold" style='font-family:"Liberation Sans",sans-serif' letter-spacing="0.15">-0.17%</text>
<text x="611" y="702" fill="#000" font-size="11" style='font-family:"Liberation Sans",sans-serif' letter-spacing="0">2663</text>
<text x="635" y="702" fill="#000" font-size="12" style='font-family:"Liberation Sans","Noto Sans CJK SC",sans-serif'>亿</text>
<line x1="659.5" y1="689" x2="659.5" y2="704" stroke="#a0a0a0" stroke-width="1"/>
<line x1="767.5" y1="689" x2="767.5" y2="704" stroke="#a0a0a0" stroke-width="1"/>
<rect x="663" y="692" width="49" height="5" fill="#f8f8f8" stroke="#e2e2e2" stroke-width="1"/>
<rect x="677" y="692" width="9" height="5" fill="#ff0000"/>
<rect x="686" y="692" width="12" height="5" fill="#008000"/>
<rect x="666.0" y="699" width="5" height="2" fill="#109010"/>
<rect x="666.0" y="702" width="5" height="2" fill="#109010"/>
<rect x="672.6" y="699" width="5" height="2" fill="#109010"/>
<rect x="672.6" y="702" width="5" height="2" fill="#109010"/>
<rect x="679.2" y="699" width="5" height="2" fill="#109010"/>
<rect x="679.2" y="702" width="5" height="2" fill="#109010"/>
<rect x="685.8" y="699" width="5" height="2" fill="#109010"/>
<rect x="685.8" y="702" width="5" height="2" fill="#109010"/>
<rect x="692.4" y="699" width="5" height="2" fill="#109010"/>
<rect x="692.4" y="702" width="5" height="2" fill="#109010"/>
<rect x="699.0" y="699" width="5" height="2" fill="#109010"/>
<rect x="699.0" y="702" width="5" height="2" fill="#109010"/>
<rect x="705.6" y="699" width="5" height="2" fill="#109010"/>
<rect x="705.6" y="702" width="5" height="2" fill="#109010"/>
<rect x="714" y="692" width="49" height="5" fill="#f8f8f8" stroke="#e2e2e2" stroke-width="1"/>
<rect x="730" y="692" width="8" height="5" fill="#ff0000"/>
<rect x="738" y="692" width="9" height="5" fill="#008000"/>
<rect x="717.0" y="699" width="5" height="2" fill="#109010"/>
<rect x="717.0" y="702" width="5" height="2" fill="#109010"/>
<rect x="723.6" y="699" width="5" height="2" fill="#109010"/>
<rect x="723.6" y="702" width="5" height="2" fill="#109010"/>
<rect x="730.2" y="699" width="5" height="2" fill="#109010"/>
<rect x="730.2" y="702" width="5" height="2" fill="#109010"/>
<rect x="736.8" y="699" width="5" height="2" fill="#109010"/>
<rect x="736.8" y="702" width="5" height="2" fill="#109010"/>
<rect x="743.4" y="699" width="5" height="2" fill="#109010"/>
<rect x="743.4" y="702" width="5" height="2" fill="#109010"/>
<rect x="750.0" y="699" width="5" height="2" fill="#109010"/>
<rect x="750.0" y="702" width="5" height="2" fill="#109010"/>
<rect x="756.6" y="699" width="5" height="2" fill="#109010"/>
<rect x="756.6" y="702" width="5" height="2" fill="#109010"/>
<text x="773" y="702" fill="#000" font-size="12" style='font-family:"Liberation Sans","Noto Sans CJK SC",sans-serif'>上证云行情</text>
<text x="833" y="702" fill="#000" font-size="10" style='font-family:"Liberation Mono","Noto Sans CJK SC",monospace'>A3700</text>
<rect x="1283" y="692" width="13" height="12" fill="#fff" stroke="#7a7a7a" stroke-width="1"/>
<line x1="1283" y1="692.5" x2="1296" y2="692.5" stroke="#8a8a8a" stroke-width="1"/>
<line x1="1285" y1="695.5" x2="1295" y2="695.5" stroke="#c4c4c4" stroke-width="1"/>
<line x1="1285" y1="698.5" x2="1295" y2="698.5" stroke="#c4c4c4" stroke-width="1"/>
<line x1="1285" y1="701.5" x2="1295" y2="701.5" stroke="#c4c4c4" stroke-width="1"/>
<path d="M1304 692.5 h6 l3 3 v9 h-12 v-9 z" fill="#d6d63c" stroke="#b0b028" shape-rendering="auto"/>
<path d="M1303.5 699 l3.5 -3.5 l3.5 3.5 z M1305.5 700.5 h3" fill="#5a5a30" stroke="#5a5a30" shape-rendering="auto"/>
<path d="M1321.5 692.5 C1319.5 698.5 1324.5 703 1330.5 700.5 Z M1326 697 L1330.5 692.5 L1326.5 692.5 Z M1324.5 700.5 L1321 704 H1328 Z" fill="#828282" shape-rendering="auto"/>
<path d="M1342.5 692.5 l3.7 4.5 h-7.4 z M1342.5 698.5 l3.7 5.5 h-7.4 z" fill="#828282" shape-rendering="auto"/>
<rect x="1355" y="693" width="2" height="6" fill="#808080"/>
<rect x="1355" y="701" width="2" height="2" fill="#808080"/>
<line x1="0" y1="86.5" x2="1080" y2="86.5" stroke="#d8d8d8" stroke-width="1"/>
<line x1="1032.5" y1="41" x2="1032.5" y2="330" stroke="#d8d8d8" stroke-width="1"/>
<line x1="1032.5" y1="346" x2="1032.5" y2="431" stroke="#d8d8d8" stroke-width="1"/>
<line x1="1032.5" y1="447" x2="1032.5" y2="533" stroke="#d8d8d8" stroke-width="1"/>
<line x1="1032.5" y1="548" x2="1032.5" y2="635" stroke="#d8d8d8" stroke-width="1"/>
<rect x="69" y="316" width="13" height="13" fill="#b05a10"/>
<text x="75.5" y="327" fill="#fff" font-size="12" text-anchor="middle" style='font-family:"Liberation Sans","Noto Sans CJK SC",sans-serif'>榜</text>
<rect x="510" y="316" width="13" height="13" fill="#008000"/>
<text x="516.5" y="327" fill="#fff" font-size="12" text-anchor="middle" style='font-family:"Liberation Sans","Noto Sans CJK SC",sans-serif'>减</text>
<rect x="787" y="316" width="13" height="13" fill="#800000"/>
<text x="793.5" y="327" fill="#fff" font-size="12" text-anchor="middle" style='font-family:"Liberation Sans","Noto Sans CJK SC",sans-serif'>涨</text>
<rect x="804" y="316" width="13" height="13" fill="#003070"/>
<text x="810.5" y="327" fill="#fff" font-size="12" text-anchor="middle" style='font-family:"Liberation Sans","Noto Sans CJK SC",sans-serif'>财</text>
<rect x="621" y="42" width="3" height="3" fill="#ff00ff"/>
<rect x="646" y="42" width="3" height="3" fill="#ff00ff"/>
<rect x="679" y="42" width="3" height="3" fill="#ff00ff"/>
<rect x="783" y="42" width="3" height="3" fill="#ff00ff"/>
<rect x="794" y="42" width="3" height="3" fill="#ff00ff"/>
<rect x="815" y="42" width="3" height="3" fill="#ff00ff"/>
<rect x="819" y="42" width="3" height="3" fill="#ff00ff"/>
<rect x="826" y="42" width="3" height="3" fill="#ff00ff"/>
<rect x="840" y="42" width="3" height="3" fill="#ff00ff"/>
<rect x="850" y="42" width="3" height="3" fill="#ff00ff"/>
<rect x="877" y="42" width="3" height="3" fill="#ff00ff"/>
<rect x="801" y="42" width="12" height="3" fill="#ff00ff"/>
<rect x="910.5" y="102.5" width="154" height="207" fill="#000" stroke="#d4d0c8" stroke-width="1"/>
<rect x="911" y="103" width="153" height="21" fill="#c8c4b8"/>
<text x="914.5" y="118" fill="#000" font-size="12" font-weight="bold" style='font-family:"Liberation Sans","Noto Sans CJK SC",sans-serif'>康盛股份</text>
<path d="M1050 107.5 L1060 117.5 M1060 107.5 L1050 117.5" stroke="#8c8c8c" fill="none" shape-rendering="auto"/>
<text x="950.5" y="138.5" fill="#c0c0c0" font-size="12" text-anchor="end" style='font-family:"Liberation Sans","Noto Sans CJK SC",sans-serif'>时间</text>
<text x="1049.5" y="138.0" fill="#c0c0c0" font-size="10.5" text-anchor="end" style='font-family:"Liberation Mono","Noto Sans CJK SC",monospace' letter-spacing="-0.3">2023/06/20/</text>
<text x="1049.5" y="138.5" fill="#c0c0c0" font-size="12" style='font-family:"Liberation Sans","Noto Sans CJK SC",sans-serif'>二</text>
<text x="950.5" y="153.55" fill="#c0c0c0" font-size="12" text-anchor="end" style='font-family:"Liberation Sans","Noto Sans CJK SC",sans-serif'>数值</text>
<text x="1061.5" y="153.05" fill="#c0c0c0" font-size="10.5" text-anchor="end" style='font-family:"Liberation Mono","Noto Sans CJK SC",monospace' letter-spacing="-0.3">4.58</text>
<text x="950.5" y="168.6" fill="#c0c0c0" font-size="12" text-anchor="end" style='font-family:"Liberation Sans","Noto Sans CJK SC",sans-serif'>开盘价</text>
<text x="1061.5" y="168.1" fill="#ff3232" font-size="10.5" text-anchor="end" style='font-family:"Liberation Mono","Noto Sans CJK SC",monospace' letter-spacing="-0.3">2.83(0.35%)</text>
<text x="950.5" y="183.65" fill="#c0c0c0" font-size="12" text-anchor="end" style='font-family:"Liberation Sans","Noto Sans CJK SC",sans-serif'>最高价</text>
<text x="1061.5" y="183.15" fill="#ff3232" font-size="10.5" text-anchor="end" style='font-family:"Liberation Mono","Noto Sans CJK SC",monospace' letter-spacing="-0.3">3.06(8.51%)</text>
<text x="950.5" y="198.7" fill="#c0c0c0" font-size="12" text-anchor="end" style='font-family:"Liberation Sans","Noto Sans CJK SC",sans-serif'>最低价</text>
<text x="1061.5" y="198.2" fill="#00ff00" font-size="10.5" text-anchor="end" style='font-family:"Liberation Mono","Noto Sans CJK SC",monospace' letter-spacing="-0.3">2.80(-0.71%)</text>
<text x="950.5" y="213.75" fill="#c0c0c0" font-size="12" text-anchor="end" style='font-family:"Liberation Sans","Noto Sans CJK SC",sans-serif'>收盘价</text>
<text x="1061.5" y="213.25" fill="#ff3232" font-size="10.5" text-anchor="end" style='font-family:"Liberation Mono","Noto Sans CJK SC",monospace' letter-spacing="-0.3">2.99</text>
<text x="950.5" y="228.8" fill="#c0c0c0" font-size="12" text-anchor="end" style='font-family:"Liberation Sans","Noto Sans CJK SC",sans-serif'>成交量</text>
<text x="1061.5" y="228.3" fill="#d8d820" font-size="10.5" text-anchor="end" style='font-family:"Liberation Mono","Noto Sans CJK SC",monospace' letter-spacing="-0.3">484642</text>
<text x="950.5" y="243.85000000000002" fill="#c0c0c0" font-size="12" text-anchor="end" style='font-family:"Liberation Sans","Noto Sans CJK SC",sans-serif'>成交额</text>
<text x="1049.5" y="243.35000000000002" fill="#c0c0c0" font-size="10.5" text-anchor="end" style='font-family:"Liberation Mono","Noto Sans CJK SC",monospace' letter-spacing="-0.3">1.43</text>
<text x="1049.5" y="243.85000000000002" fill="#c0c0c0" font-size="12" style='font-family:"Liberation Sans","Noto Sans CJK SC",sans-serif'>亿</text>
<text x="950.5" y="258.9" fill="#c0c0c0" font-size="12" text-anchor="end" style='font-family:"Liberation Sans","Noto Sans CJK SC",sans-serif'>涨幅</text>
<text x="1061.5" y="258.4" fill="#ff3232" font-size="10.5" text-anchor="end" style='font-family:"Liberation Mono","Noto Sans CJK SC",monospace' letter-spacing="-0.3">0.17(6.03%)</text>
<text x="950.5" y="273.95000000000005" fill="#c0c0c0" font-size="12" text-anchor="end" style='font-family:"Liberation Sans","Noto Sans CJK SC",sans-serif'>振幅</text>
<text x="1061.5" y="273.45000000000005" fill="#c0c0c0" font-size="10.5" text-anchor="end" style='font-family:"Liberation Mono","Noto Sans CJK SC",monospace' letter-spacing="-0.3">0.26(9.22%)</text>
<text x="950.5" y="289.0" fill="#c0c0c0" font-size="12" text-anchor="end" style='font-family:"Liberation Sans","Noto Sans CJK SC",sans-serif'>换手率</text>
<text x="1061.5" y="288.5" fill="#c0c0c0" font-size="10.5" text-anchor="end" style='font-family:"Liberation Mono","Noto Sans CJK SC",monospace' letter-spacing="-0.3">4.27%</text>
<text x="950.5" y="304.05" fill="#c0c0c0" font-size="12" text-anchor="end" style='font-family:"Liberation Sans","Noto Sans CJK SC",sans-serif'>流通股</text>
<text x="1049.5" y="303.55" fill="#c0c0c0" font-size="10.5" text-anchor="end" style='font-family:"Liberation Mono","Noto Sans CJK SC",monospace' letter-spacing="-0.3">11.4</text>
<text x="1049.5" y="304.05" fill="#c0c0c0" font-size="12" style='font-family:"Liberation Sans","Noto Sans CJK SC",sans-serif'>亿</text>
<text x="93" y="55" fill="#c0c0c0" font-size="12" style='font-family:"Liberation Sans",sans-serif' letter-spacing="-0.2">4.99</text>
<text x="309" y="318" fill="#c0c0c0" font-size="12" style='font-family:"Liberation Sans",sans-serif' letter-spacing="-0.2">2.33</text>
<polyline fill="none" stroke="#fff" points="1132.5,496.0 1133.2,495.3 1134.0,494.0 1134.7,497.0 1135.3,499.4 1136.0,501.0 1136.8,502.6 1137.6,502.4 1138.4,503.3 1139.2,501.4 1140.0,503.0 1140.8,503.5 1141.6,505.4 1142.4,505.2 1143.2,506.4 1144.0,506.0 1144.7,504.9 1145.4,505.6 1146.1,504.9 1146.9,505.5 1147.6,505.5 1148.3,503.9 1149.0,505.0 1149.7,504.4 1150.4,504.7 1151.1,506.5 1151.9,506.3 1152.6,504.8 1153.3,506.6 1154.0,506.0 1155.0,473.0 1155.8,449.6 1156.5,428.0 1157.1,427.6 1157.7,426.5 1158.3,436.3 1159.0,448.0 1159.8,450.0 1160.7,455.6 1161.5,458.0 1162.3,458.2 1163.2,459.3 1164.0,461.0 1164.9,462.9 1165.7,463.3 1166.6,463.0 1167.4,462.1 1168.2,463.5 1169.0,462.0 1169.9,462.9 1170.7,464.1 1171.6,464.5 1172.4,463.6 1173.2,465.3 1174.0,464.0 1174.7,465.5 1175.3,467.2 1176.0,468.0 1176.7,468.0 1177.5,469.1 1178.2,470.8 1179.0,471.9 1179.7,473.5 1180.5,476.0 1181.3,474.2 1182.2,474.2 1183.0,474.0 1183.8,474.1 1184.5,472.3 1185.3,473.9 1186.0,472.8 1186.8,473.0 1187.5,472.6 1188.3,474.0 1189.0,473.2 1189.8,472.8 1190.5,473.3 1191.3,474.0 1192.0,473.5 1192.7,472.2 1193.4,474.5 1194.1,472.0 1194.9,473.7 1195.6,473.9 1196.3,471.6 1197.0,472.8 1197.7,473.3 1198.4,471.9 1199.1,472.2 1199.9,470.5 1200.6,470.3 1201.3,470.4 1202.0,471.0 1202.7,472.2 1203.4,470.2 1204.1,471.7 1204.9,472.1 1205.6,472.1 1206.3,470.6 1207.0,471.0 1207.8,470.2 1208.6,470.3 1209.4,470.5 1210.2,468.4 1211.0,469.0 1211.7,469.7 1212.4,470.0 1213.2,470.2 1213.9,468.2 1214.6,469.5 1215.4,470.5 1216.3,468.2 1217.2,468.7 1218.0,469.0 1218.8,469.6 1219.6,470.8 1220.4,469.7 1221.2,471.5 1222.0,470.8 1222.8,471.4 1223.6,471.2 1224.4,471.6 1225.2,471.7 1226.0,473.0 1226.8,472.2 1227.5,472.7 1228.3,474.4 1229.0,475.5 1229.8,474.5 1230.5,473.5 1231.3,473.2 1232.0,475.6 1232.8,474.3 1233.5,473.9 1234.3,473.4 1235.0,474.0 1235.7,474.5 1236.4,475.4 1237.1,474.7 1237.9,474.9 1238.6,474.3 1239.3,476.8 1240.0,476.0 1240.8,474.0 1241.5,474.5 1242.2,474.6 1243.0,473.0 1243.7,471.3 1244.3,472.1 1245.0,470.8 1245.7,470.9 1246.5,469.1 1247.2,468.5 1248.0,465.7 1248.7,465.7 1249.5,466.1 1250.3,465.9 1251.2,468.3 1252.0,468.0 1252.8,467.2 1253.5,467.4 1254.2,468.5 1255.0,467.0 1255.8,467.7 1256.6,467.8 1257.4,466.3 1258.2,466.2 1259.0,466.0 1259.7,466.0 1260.4,464.7 1261.2,463.7 1261.9,463.3 1262.6,463.0 1263.4,462.6 1264.3,463.7 1265.2,465.8 1266.0,465.0 1266.8,466.6 1267.6,466.1 1268.4,466.2 1269.2,466.2 1270.0,467.0 1270.7,464.3 1271.3,463.1 1272.0,462.0 1272.7,459.7 1273.3,457.0 1274.0,453.0 1274.8,454.2 1275.5,456.8 1276.3,458.3 1277.0,459.7 1277.8,460.7 1278.5,461.6 1279.3,462.2 1280.0,462.0 1280.7,461.3 1281.4,461.9 1282.1,460.5 1282.8,460.7 1283.5,459.4 1284.3,458.9 1285.0,457.0 1285.7,456.7 1286.5,455.0 1287.2,455.9 1287.9,454.0 1288.7,454.9 1289.5,455.2 1290.2,454.2 1291.0,456.0 1291.7,456.5 1292.3,456.0 1293.0,457.0 1293.8,457.7 1294.5,457.4 1295.2,458.6 1296.0,458.0 1296.8,458.1 1297.5,458.3 1298.2,456.9 1299.0,457.0 1299.7,455.7 1300.3,454.3 1301.0,452.0 1301.7,451.5 1302.3,448.9 1303.0,448.0 1303.8,448.6 1304.5,448.5 1305.2,447.7 1306.0,447.0 1306.7,447.7 1307.3,447.2 1308.0,445.5 1308.9,445.0 1309.7,444.6 1310.6,444.0 1311.2,444.1 1311.9,446.9 1312.5,447.0 1313.1,448.1 1313.8,446.9 1314.4,447.0"/>
<polyline fill="none" stroke="#ffff00" points="1132.5,498.6 1141.0,503.6 1154.0,505.0 1155.7,483.4 1157.7,463.0 1161.5,461.0 1176.7,461.0 1191.8,462.7 1222.0,463.0 1247.0,463.7 1272.7,463.0 1298.0,462.4 1314.4,460.0"/>
<path d="M1132.5 655.7V657.5M1133.3 655.9V657.5M1134.0 656.5V657.5M1134.8 654.6V657.5M1135.5 656.9V657.5M1136.3 655.6V657.5M1137.1 654.6V657.5M1137.8 656.7V657.5M1138.6 655.5V657.5M1139.3 638.5V657.5M1140.1 656.8V657.5M1140.9 655.9V657.5M1141.6 655.1V657.5M1142.4 650.5V657.5M1143.1 655.0V657.5M1143.9 656.5V657.5M1144.7 656.3V657.5M1145.4 656.6V657.5M1146.2 655.6V657.5M1146.9 654.5V657.5M1147.7 655.4V657.5M1148.5 637.5V657.5M1149.2 655.9V657.5M1150.0 655.0V657.5M1150.7 656.6V657.5M1151.5 656.1V657.5M1152.3 655.1V657.5M1153.0 655.0V657.5M1153.8 655.8V657.5M1154.5 656.7V657.5M1155.3 586.5V657.5M1156.1 597.5V657.5M1156.8 607.5V657.5M1157.6 616.5V657.5M1158.3 629.5V657.5M1159.1 641.5V657.5M1159.9 646.5V657.5M1160.6 654.4V657.5M1161.4 649.5V657.5M1162.1 652.1V657.5M1162.9 651.5V657.5M1163.7 653.7V657.5M1164.4 654.2V657.5M1165.2 654.2V657.5M1165.9 652.5V657.5M1166.7 654.1V657.5M1167.5 652.1V657.5M1168.2 652.3V657.5M1169.0 653.4V657.5M1169.7 654.0V657.5M1170.5 653.6V657.5M1171.3 653.0V657.5M1172.0 651.4V657.5M1172.8 651.0V657.5M1173.5 652.9V657.5M1174.3 654.4V657.5M1175.1 656.4V657.5M1175.8 656.7V657.5M1176.6 656.5V657.5M1177.3 655.8V657.5M1178.1 655.5V657.5M1178.9 655.5V657.5M1179.6 656.1V657.5M1180.4 656.6V657.5M1181.1 647.5V657.5M1181.9 655.2V657.5M1182.7 656.4V657.5M1183.4 656.4V657.5M1184.2 656.8V657.5M1184.9 656.6V657.5M1185.7 655.1V657.5M1186.5 655.2V657.5M1187.2 655.9V657.5M1188.0 657.0V657.5M1188.7 651.5V657.5M1189.5 655.2V657.5M1190.3 656.8V657.5M1191.0 656.8V657.5M1191.8 656.0V657.5M1192.5 657.0V657.5M1193.3 655.7V657.5M1194.1 656.3V657.5M1194.8 656.8V657.5M1195.6 655.6V657.5M1196.3 656.1V657.5M1197.1 657.0V657.5M1197.9 656.8V657.5M1198.6 656.9V657.5M1199.4 656.7V657.5M1200.1 656.7V657.5M1200.9 656.0V657.5M1201.7 656.8V657.5M1202.4 655.2V657.5M1203.2 655.2V657.5M1203.9 655.1V657.5M1204.7 656.0V657.5M1205.5 656.0V657.5M1206.2 657.0V657.5M1207.0 656.0V657.5M1207.7 655.7V657.5M1208.5 656.9V657.5M1209.3 656.2V657.5M1210.0 655.8V657.5M1210.8 655.9V657.5M1211.5 655.3V657.5M1212.3 655.5V657.5M1213.1 655.9V657.5M1213.8 657.0V657.5M1214.6 655.9V657.5M1215.3 656.3V657.5M1216.1 656.7V657.5M1216.9 656.7V657.5M1217.6 656.4V657.5M1218.4 656.0V657.5M1219.1 655.5V657.5M1219.9 655.5V657.5M1220.7 655.2V657.5M1221.4 655.1V657.5M1222.2 655.4V657.5M1222.9 656.4V657.5M1223.7 655.5V657.5M1224.5 656.7V657.5M1225.2 656.9V657.5M1226.0 655.1V657.5M1226.7 655.6V657.5M1227.5 656.1V657.5M1228.3 655.8V657.5M1229.0 656.6V657.5M1229.8 656.7V657.5M1230.5 655.8V657.5M1231.3 654.4V657.5M1232.1 656.8V657.5M1232.8 656.6V657.5M1233.6 654.8V657.5M1234.3 656.7V657.5M1235.1 656.2V657.5M1235.9 654.7V657.5M1236.6 655.3V657.5M1237.4 656.3V657.5M1238.1 647.5V657.5M1238.9 656.2V657.5M1239.7 656.1V657.5M1240.4 654.8V657.5M1241.2 654.4V657.5M1241.9 654.9V657.5M1242.7 654.6V657.5M1243.5 654.5V657.5M1244.2 654.6V657.5M1245.0 651.5V657.5M1245.7 654.4V657.5M1246.5 656.7V657.5M1247.3 656.1V657.5M1248.0 656.3V657.5M1248.8 655.3V657.5M1249.5 655.6V657.5M1250.3 656.0V657.5M1251.1 654.7V657.5M1251.8 655.9V657.5M1252.6 656.4V657.5M1253.3 656.2V657.5M1254.1 655.7V657.5M1254.9 655.3V657.5M1255.6 655.4V657.5M1256.4 655.8V657.5M1257.1 656.4V657.5M1257.9 655.9V657.5M1258.7 656.1V657.5M1259.4 656.5V657.5M1260.2 655.5V657.5M1260.9 656.4V657.5M1261.7 655.0V657.5M1262.5 655.2V657.5M1263.2 656.5V657.5M1264.0 655.3V657.5M1264.7 656.0V657.5M1265.5 655.7V657.5M1266.3 655.3V657.5M1267.0 654.9V657.5M1267.8 654.6V657.5M1268.5 655.0V657.5M1269.3 656.4V657.5M1270.1 655.5V657.5M1270.8 656.0V657.5M1271.6 656.9V657.5M1272.3 655.5V657.5M1273.1 655.7V657.5M1273.9 637.5V657.5M1274.6 648.5V657.5M1275.4 648.5V657.5M1276.1 655.6V657.5M1276.9 656.6V657.5M1277.7 655.0V657.5M1278.4 656.2V657.5M1279.2 655.5V657.5M1279.9 656.7V657.5M1280.7 656.9V657.5M1281.5 654.5V657.5M1282.2 656.8V657.5M1283.0 656.5V657.5M1283.7 650.5V657.5M1284.5 656.7V657.5M1285.3 654.8V657.5M1286.0 654.3V657.5M1286.8 655.2V657.5M1287.5 655.9V657.5M1288.3 645.5V657.5M1289.1 655.6V657.5M1289.8 656.5V657.5M1290.6 655.1V657.5M1291.3 656.0V657.5M1292.1 656.2V657.5M1292.9 656.1V657.5M1293.6 655.9V657.5M1294.4 656.4V657.5M1295.1 651.2V657.5M1295.9 655.5V657.5M1296.7 655.4V657.5M1297.4 651.2V657.5M1298.2 648.5V657.5M1298.9 654.1V657.5M1299.7 653.2V657.5M1300.5 654.3V657.5M1301.2 639.5V657.5M1302.0 647.5V657.5M1302.7 650.9V657.5M1303.5 654.6V657.5M1304.3 645.5V657.5M1305.0 654.8V657.5M1305.8 652.8V657.5M1306.5 654.4V657.5M1307.3 644.5V657.5M1308.1 651.3V657.5M1308.8 648.5V657.5M1309.6 653.0V657.5M1310.3 651.5V657.5M1311.1 638.5V657.5M1311.9 650.7V657.5M1312.6 650.9V657.5M1313.4 646.5V657.5M1314.1 651.1V657.5" stroke="#d0d018" stroke-width="0.9" fill="none" shape-rendering="auto"/>
</svg>
</body></html>
